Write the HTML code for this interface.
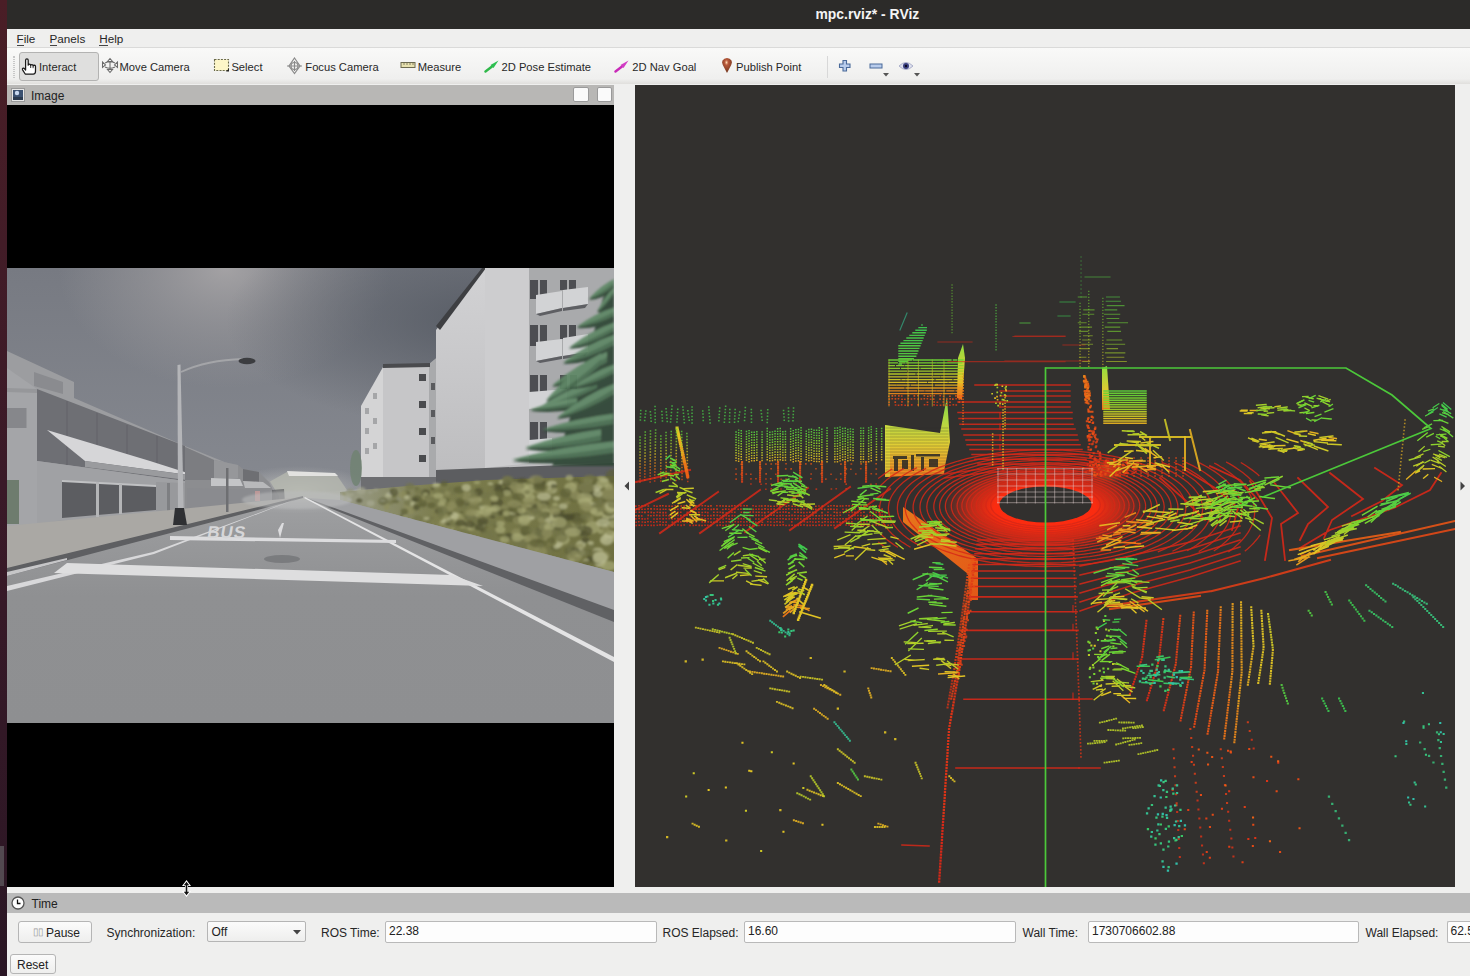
<!DOCTYPE html>
<html><head><meta charset="utf-8">
<style>
*{box-sizing:border-box;margin:0;padding:0}
html,body{width:1470px;height:976px;overflow:hidden;background:linear-gradient(#4a1e26,#3a1a28 50%,#2a1624);font-family:"Liberation Sans",sans-serif;color:#2e3436}
.abs{position:absolute}
#title{left:7px;top:0;width:1463px;height:30px;background:#2c2b29}
#title span{position:absolute;left:808.5px;top:5.5px;color:#f4f4f4;font-weight:bold;font-size:13.9px;white-space:nowrap}
#win{left:7px;top:29px;width:1463px;height:947px;background:#efefee}
#menu{left:7px;top:30px;width:1463px;height:18px;background:#efefee;border-bottom:1px solid #dadad9;font-size:11.7px;color:#262626}
#menu span{position:absolute;top:1.6px;white-space:nowrap}
#menu u{text-decoration:none;border-bottom:1px solid #444;}
#tool{left:7px;top:48px;width:1463px;height:36px;background:linear-gradient(#f9f9f8 0%,#f3f3f2 55%,#efefee 86%,#e0dfdc 100%);font-size:11.2px;color:#282828}
#tool .t{position:absolute;top:13px;white-space:nowrap}
#tool svg{position:absolute}
#imgbar{left:7px;top:85px;width:607px;height:20px;background:#b8b7b5}
#imgblk{left:7px;top:105px;width:607px;height:782px;background:#000}
#view{left:635px;top:85px;width:820px;height:802px;background:#32302e;overflow:hidden}
#timebar{left:7px;top:893px;width:1463px;height:20px;background:#bababa}
.tb{position:absolute;top:921px;height:21.6px;background:#fdfdfd;border:1px solid #b9b9b9;border-radius:2px;font-size:12px;padding-left:3px;line-height:19px;color:#222;white-space:nowrap;overflow:hidden}
.lbl{position:absolute;top:925.8px;font-size:12px;white-space:nowrap;color:#262626}
.btn{position:absolute;background:linear-gradient(#fbfbfb,#eeeeed);border:1px solid #b5b5b5;border-radius:3px;font-size:12px;color:#222;white-space:nowrap}
</style></head><body>
<div id="title" class="abs"><span>mpc.rviz* - RViz</span></div>
<div id="win" class="abs"></div>
<div id="menu" class="abs">
 <span style="left:9.5px"><u>F</u>ile</span>
 <span style="left:42.5px"><u>P</u>anels</span>
 <span style="left:92.3px"><u>H</u>elp</span>
</div>
<div id="tool" class="abs">
 <div class="abs" style="left:6px;top:8px;width:2px;height:22px;border-left:1px dotted #c8c8c8;border-right:1px dotted #c8c8c8"></div>
 <div class="abs" style="left:11.8px;top:3.8px;width:79.8px;height:29px;background:#dfdfde;border:1px solid #b3b3b2;border-radius:3px"></div>
 <svg style="left:14px;top:9.5px" width="17" height="17" viewBox="0 0 17 17"><path d="M4.2 16 L1.6 11.8 Q1 10.6 2.2 10.2 Q3 10 3.8 11 L4.6 12 L4.6 2.2 Q4.6 0.9 5.9 0.9 Q7.2 0.9 7.2 2.2 L7.2 7.2 Q7.4 6.2 8.5 6.2 Q9.6 6.2 9.7 7.4 Q10 6.6 11 6.6 Q12 6.6 12.1 7.8 Q12.5 7.2 13.4 7.2 Q14.5 7.3 14.5 8.6 L14.5 13.2 Q14.5 16 12.2 16 Z" fill="#fff" stroke="#1a1a1a" stroke-width="1.25" stroke-linejoin="round"/><path d="M9.7 7.4V10M12.1 7.8V10.2" stroke="#1a1a1a" stroke-width="0.9"/></svg>
 <span class="t" style="left:32px">Interact</span>
 <svg style="left:94px;top:9px" width="18" height="17" viewBox="0 0 18 17"><g fill="none" stroke="#6a6a6a" stroke-width="1.05"><path d="M9 1.5 L6.5 4.5 H11.5 Z M9 15.5 L6.5 12.5 H11.5 Z M1.5 5 V10.5 L4.5 8 Z M16.5 5 V10.5 L13.5 8 Z"/><path d="M4 6 Q9 3.5 14 6 M4 10 Q9 12.5 14 10 M9 4.5 V12.5"/></g></svg>
 <span class="t" style="left:112.5px">Move Camera</span>
 <svg style="left:206px;top:10px" width="17" height="15" viewBox="0 0 17 15"><rect x="1.5" y="1.5" width="14" height="11" fill="#fdf6c8" stroke="#6a6a4a" stroke-width="1.1" stroke-dasharray="2 1.2"/><path d="M13 13.5 L16 10.5 V13.5 Z" fill="#222"/></svg>
 <span class="t" style="left:224.4px">Select</span>
 <svg style="left:279px;top:9px" width="17" height="18" viewBox="0 0 17 18"><g fill="none" stroke="#8a8a8a" stroke-width="1.2"><path d="M8.5 1 L14 9 L8.5 16.5 L3 9 Z"/><circle cx="8.5" cy="9" r="3.5"/><path d="M1 9 H16 M8.5 4 V14"/></g></svg>
 <span class="t" style="left:298.3px">Focus Camera</span>
 <svg style="left:393px;top:13px" width="16" height="8" viewBox="0 0 16 8"><rect x="1" y="1.5" width="14" height="5" fill="#e8e2b0" stroke="#6c6a50" stroke-width="1"/><path d="M4 1.5V4M7 1.5V4M10 1.5V4M13 1.5V4" stroke="#6c6a50" stroke-width="0.8"/></svg>
 <span class="t" style="left:410.7px">Measure</span>
 <svg style="left:477px;top:11px" width="16" height="14" viewBox="0 0 16 14"><path d="M1.5 12.5 L8 7.5" stroke="#2fb84a" stroke-width="2.4" stroke-linecap="round"/><path d="M14.5 1.5 L6.5 6 L9.5 9 Z" fill="#2cc050"/></svg>
 <span class="t" style="left:494.5px">2D Pose Estimate</span>
 <svg style="left:607px;top:11px" width="16" height="14" viewBox="0 0 16 14"><path d="M1.5 12.5 L8 7.5" stroke="#c82ab8" stroke-width="2.4" stroke-linecap="round"/><path d="M14.5 1.5 L6.5 6 L9.5 9 Z" fill="#d23cc4"/></svg>
 <span class="t" style="left:625.3px">2D Nav Goal</span>
 <svg style="left:714px;top:9px" width="12" height="17" viewBox="0 0 12 17"><defs><radialGradient id="pin" cx="0.45" cy="0.3" r="0.6"><stop offset="0" stop-color="#ffd8b0"/><stop offset="0.3" stop-color="#b8583a"/><stop offset="1" stop-color="#7a3a20"/></radialGradient></defs><path d="M6 16 L1.8 8 Q0.5 5 1.5 3.5 Q3 1 6 1 Q9 1 10.5 3.5 Q11.5 5 10.2 8 Z" fill="url(#pin)"/></svg>
 <span class="t" style="left:729px">Publish Point</span>
 <div class="abs" style="left:820px;top:8px;width:1px;height:22px;background:#d8d8d8"></div>
 <svg style="left:831px;top:11px" width="14" height="14" viewBox="0 0 14 14"><path d="M5 1.5H8.5V5H12V8.5H8.5V12H5V8.5H1.5V5H5Z" fill="#b8ccec" stroke="#4a6a9a" stroke-width="1.1"/></svg>
 <svg style="left:862px;top:15px" width="14" height="6" viewBox="0 0 14 6"><rect x="1" y="1" width="12" height="4" fill="#b8ccec" stroke="#4a6a9a" stroke-width="1"/></svg>
 <svg style="left:876px;top:25px" width="6" height="4" viewBox="0 0 6 4"><path d="M0 0H6L3 3.5Z" fill="#555"/></svg>
 <svg style="left:891px;top:13px" width="16" height="10" viewBox="0 0 16 10"><path d="M1 5 Q8 -2 15 5 Q8 12 1 5Z" fill="#dde0ee" stroke="#9aa0c0" stroke-width="0.8"/><circle cx="8" cy="5" r="3" fill="#3a3f80"/><circle cx="8" cy="5" r="1.2" fill="#0a0a20"/></svg>
 <svg style="left:907px;top:25px" width="6" height="4" viewBox="0 0 6 4"><path d="M0 0H6L3 3.5Z" fill="#555"/></svg>
</div>
<div id="imgbar" class="abs">
 <svg style="position:absolute;left:4px;top:3px" width="14" height="14" viewBox="0 0 14 14"><rect x="0.5" y="0.5" width="13" height="13" fill="#e8e8e8" stroke="#9a9a9a"/><rect x="2" y="2" width="10" height="10" fill="#3a5070"/><circle cx="6" cy="5" r="2.2" fill="#c8d8f0"/><rect x="2" y="9" width="10" height="3" fill="#2a3a50"/></svg>
 <span style="position:absolute;left:24px;top:3.5px;font-size:12px;color:#222">Image</span>
 <div style="position:absolute;left:566px;top:2px;width:16px;height:14.5px;background:#fafafa;border:1px solid #9a9a9a;border-radius:2px"></div>
 <div style="position:absolute;left:589.5px;top:2px;width:15px;height:14.5px;background:#fafafa;border:1px solid #9a9a9a;border-radius:2px"></div>
</div>
<div id="imgblk" class="abs"></div>
<svg width="607" height="455" viewBox="0 0 607 455" style="position:absolute;left:7px;top:268px;display:block">
<defs>
 <filter id="blur1" x="-5%" y="-5%" width="110%" height="110%"><feGaussianBlur stdDeviation="1.1"/></filter>
 <linearGradient id="sky" x1="0" y1="0" x2="0" y2="1">
  <stop offset="0" stop-color="#777a82"/><stop offset="0.5" stop-color="#868990"/><stop offset="0.75" stop-color="#8e9096"/><stop offset="1" stop-color="#a8aaad"/>
 </linearGradient>
 <radialGradient id="skyhi" cx="0.36" cy="0.0" r="0.5" gradientTransform="translate(0.36,0) scale(0.55,1) translate(-0.36,0)">
  <stop offset="0" stop-color="#a6a4a6" stop-opacity="0.95"/><stop offset="0.6" stop-color="#9a999c" stop-opacity="0.45"/><stop offset="1" stop-color="#9a999c" stop-opacity="0"/>
 </radialGradient>
 <radialGradient id="skydk" cx="0.78" cy="0.2" r="0.42">
  <stop offset="0" stop-color="#555a63" stop-opacity="0.9"/><stop offset="1" stop-color="#555a63" stop-opacity="0"/>
 </radialGradient>
 <linearGradient id="road" x1="0" y1="0" x2="0" y2="1">
  <stop offset="0" stop-color="#a6a7a9"/><stop offset="0.22" stop-color="#9a9b9d"/><stop offset="0.5" stop-color="#8f9092"/><stop offset="1" stop-color="#8e8f91"/>
 </linearGradient>
 <linearGradient id="hedge" x1="0" y1="0" x2="1" y2="0">
  <stop offset="0" stop-color="#9a9c88"/><stop offset="0.35" stop-color="#7c7d4e"/><stop offset="1" stop-color="#6e6f40"/>
 </linearGradient>
 <radialGradient id="haze" cx="0.5" cy="0.5" r="0.5">
  <stop offset="0" stop-color="#c4c5c2" stop-opacity="1"/><stop offset="1" stop-color="#b0b1b2" stop-opacity="0"/>
 </radialGradient>
 <linearGradient id="nface" x1="0" y1="0" x2="0" y2="1"><stop offset="0" stop-color="#d2d2d4"/><stop offset="1" stop-color="#bdbdbf"/></linearGradient>
</defs>
<rect width="607" height="455" fill="url(#sky)"/>
<rect width="607" height="240" fill="url(#skyhi)"/>
<rect width="607" height="260" fill="url(#skydk)"/>
<!-- road / ground base -->
<polygon points="0,255 296,226 607,200 607,455 0,455" fill="url(#road)"/>
<!-- far haze -->
<ellipse cx="292" cy="222" rx="75" ry="24" fill="url(#haze)"/>
<polygon points="262,214 280,204 329,206 340,222 333,232 262,232" fill="#b4b6ae" opacity="0.85"/>
<polygon points="280,203 328,205 331,208 282,208" fill="#e2e2e0"/>
<!-- left shop building -->
<polygon points="0,83 67,114 67,130 178,178 262,212 272,228 272,236 0,260" fill="#9c9da0"/>
<polygon points="0,100 30,121 30,260 0,260" fill="#a4a5a8"/>
<polygon points="30,121 178,178 178,213 30,193" fill="#6e6f74"/>
<g stroke="#626368" stroke-width="1"><path d="M60,133V197M90,145V200M120,157V204M150,168V209"/></g>
<polygon points="0,140 19.5,140 19.5,160 0,160" fill="#86878b"/><polygon points="0,120 30,121 30,125 0,124" fill="#96979a"/>
<polygon points="27,104 56,114 56,126 27,118" fill="#8a8b8f"/>
<polygon points="30,193 178,213 178,248 55,252 30,256" fill="#a0a1a4"/>
<polygon points="40,162 143,193 190,208 78,193" fill="#d6d6d8"/>
<polygon points="78,193 190.6,208.3 190.6,213.4 78,199" fill="#9a9b9e"/>
<polygon points="55,213 149,218 149,242 55,250" fill="#5c5d61"/>
<polygon points="55,212 149,217 149,219 55,214" fill="#c0c1c3"/>
<polygon points="89,214 92,214 92,249 89,249" fill="#b4b5b7"/>
<polygon points="112,216 115,216 115,246 112,246" fill="#b4b5b7"/>
<polygon points="149,214 178,215 178,244 149,243" fill="#98999c"/><rect x="160" y="215" width="3" height="28" fill="#7e7f82"/>
<polygon points="178,179 207,192 231,197 236,201 252,204 262,214 268,226 270,236 178,246" fill="#8c8d90"/>
<polygon points="178,179 207,192 207,212 178,212" fill="#7c7d81"/>
<polygon points="207,192 231,197 231,210 207,210" fill="#96979a"/>
<polygon points="236,201 252,204 252,214 236,213" fill="#6e6f73"/>
<polygon points="204,210 233,211 236,218 204,218" fill="#c4c5c7"/>
<polygon points="236,213 256,214 264,220 238,220" fill="#b8b9bb"/>
<polygon points="180,220 262,222 266,236 180,240" fill="#8a8b8e" opacity="0.8"/>
<rect x="248" y="223" width="5" height="10" fill="#c89a98" opacity="0.8"/>
<polygon points="265,222 277,221 278,235 265,236" fill="#5e5f62" opacity="0.75"/>
<!-- left sidewalk -->
<polygon points="0,258 296,229 0,303" fill="#aaa8a4"/>
<polygon points="0,300 296,228 296,230 0,308" fill="#5e5f62"/>
<!-- street lamp -->
<polygon points="170.5,97 173.5,96.5 177,256 171,256" fill="#b4b5b8"/>
<path d="M174,104 Q200,92 236,91" stroke="#a4a5a8" stroke-width="1.8" fill="none"/>
<ellipse cx="240" cy="93" rx="8.5" ry="3.2" fill="#3c3d40"/>
<polygon points="168,240 177,240 180,257 166,257" fill="#2f3033"/>
<polygon points="219,200 221.5,200 221.5,244 219,244" fill="#6e6f72"/>
<!-- green bin left -->
<rect x="0" y="212" width="12" height="44" fill="#6e7c6e"/>
<!-- right far building -->
<polygon points="354,138 376,99 376,213 354,214" fill="#d4d4d5"/>
<polygon points="376,97 423,96 433,87 433,218 376,218" fill="#c6c6c8"/>
<polygon points="422,96 433,87 433,210 422,212" fill="#a9aaac"/>
<polygon points="376,96 423,95 423,99 376,100" fill="#4a4b4e"/>
<g fill="#4a4b4e"><rect x="412" y="106" width="7" height="7"/><rect x="412" y="133" width="7" height="7"/><rect x="412" y="160" width="7" height="7"/><rect x="412" y="187" width="7" height="7"/></g>
<g fill="#5a5b5e"><rect x="424" y="115" width="4" height="7"/><rect x="424" y="142" width="4" height="7"/><rect x="424" y="169" width="4" height="7"/></g>
<g fill="#9a9b9e" opacity="0.8"><rect x="358" y="140" width="4" height="6"/><rect x="358" y="160" width="4" height="6"/><rect x="358" y="180" width="4" height="6"/><rect x="366" y="125" width="4" height="6"/><rect x="366" y="150" width="4" height="6"/><rect x="366" y="175" width="4" height="6"/></g>
<polygon points="354,209 433,209 433,219 354,222" fill="#6d6e71"/>
<!-- near building -->
<polygon points="429,62 476,2 480,0 607,0 607,200 429,206" fill="url(#nface)"/>
<polygon points="429,58 475,0 479,0 433,62" fill="#3e3f42"/>
<polygon points="478,0 522,0 522,195 478,200" fill="#cdcdcf"/>
<polygon points="522,0 607,0 607,195 522,195" fill="#a9aaac"/>
<g fill="#4d4e52">
 <rect x="523" y="12" width="8" height="19"/><rect x="533" y="12" width="7" height="19"/><rect x="553" y="12" width="7" height="10"/><rect x="562" y="12" width="7" height="10"/>
 <rect x="523" y="57" width="8" height="21"/><rect x="533" y="57" width="7" height="21"/><rect x="553" y="57" width="7" height="14"/><rect x="562" y="57" width="7" height="14"/>
 <rect x="523" y="107" width="8" height="19"/><rect x="533" y="107" width="7" height="19"/><rect x="553" y="107" width="7" height="14"/><rect x="563" y="107" width="7" height="14"/>
 <rect x="523" y="154" width="8" height="19"/><rect x="533" y="154" width="7" height="19"/>
</g>
<g fill="#d2d3d5">
 <polygon points="529,27 555,23 555,40 529,46"/><polygon points="556,22 581,19 581,36 556,40"/>
 <polygon points="529,74 555,71 555,88 529,93"/><polygon points="556,70 581,66 581,84 556,88"/>
 <polygon points="522,124 560,121 560,137 522,141"/><polygon points="522,172 545,170 545,185 522,188"/>
</g>
<g fill="#5e5f63"><polygon points="529,46 555,40 555,43 533,48"/><polygon points="556,40 581,36 578,40 556,43"/><polygon points="529,93 555,88 555,91 533,95"/><polygon points="556,88 581,84 578,88 556,91"/></g>
<polygon points="429,202 607,195 607,213 429,218" fill="#5c5d60"/>
<!-- tree right --><g filter="url(#blur1)" opacity="0.92"><path d="M607,12 L596,30 L588,60 L576,100 L566,140 L552,185 L545,198 L607,198 Z" fill="#2f4434"/><path d="M607.0,14.5 Q594.5,20.4 582.0,31.9 Q594.5,31.7 607.0,22.0 Z" fill="#2f4636"/><path d="M607.0,11.9 Q594.5,17.8 582.0,31.0 Q594.5,28.0 607.0,18.2 Z" fill="#4a6e51"/><path d="M607.0,11.0 Q594.5,16.9 582.0,30.5 Q594.5,24.7 607.0,14.8 Z" fill="#5f8866"/><path d="M607.0,22.4 Q598.5,30.1 590.0,44.7 Q598.5,41.2 607.0,28.4 Z" fill="#2f4636"/><path d="M607.0,20.3 Q598.5,28.0 590.0,44.0 Q598.5,38.3 607.0,25.4 Z" fill="#4a6e51"/><path d="M607.0,19.6 Q598.5,27.3 590.0,43.6 Q598.5,35.6 607.0,22.6 Z" fill="#5f8866"/><path d="M607.0,43.6 Q588.5,49.2 570.0,60.1 Q588.5,61.6 607.0,52.6 Z" fill="#2f4636"/><path d="M607.0,40.5 Q588.5,46.1 570.0,59.0 Q588.5,57.2 607.0,48.1 Z" fill="#4a6e51"/><path d="M607.0,39.4 Q588.5,45.0 570.0,58.4 Q588.5,53.2 607.0,43.9 Z" fill="#5f8866"/><path d="M607.0,58.6 Q584.5,66.3 562.0,81.1 Q584.5,80.2 607.0,67.6 Z" fill="#2f4636"/><path d="M607.0,55.5 Q584.5,63.2 562.0,80.0 Q584.5,75.8 607.0,63.1 Z" fill="#4a6e51"/><path d="M607.0,54.4 Q584.5,62.1 562.0,79.4 Q584.5,71.8 607.0,58.9 Z" fill="#5f8866"/><path d="M607.0,71.7 Q581.5,80.1 556.0,96.3 Q581.5,95.9 607.0,82.2 Z" fill="#2f4636"/><path d="M607.0,68.0 Q581.5,76.4 556.0,95.0 Q581.5,90.8 607.0,77.0 Z" fill="#4a6e51"/><path d="M607.0,66.8 Q581.5,75.2 556.0,94.3 Q581.5,86.1 607.0,72.0 Z" fill="#5f8866"/><path d="M600.0,88.7 Q572.5,99.2 545.0,119.3 Q572.5,116.5 600.0,99.2 Z" fill="#2f4636"/><path d="M600.0,85.0 Q572.5,95.5 545.0,118.0 Q572.5,111.4 600.0,94.0 Z" fill="#4a6e51"/><path d="M600.0,83.8 Q572.5,94.3 545.0,117.3 Q572.5,106.7 600.0,89.0 Z" fill="#5f8866"/><path d="M594.0,90.8 Q566.5,105.8 539.0,134.4 Q566.5,127.8 594.0,102.8 Z" fill="#2f4636"/><path d="M594.0,86.6 Q566.5,101.6 539.0,133.0 Q566.5,121.9 594.0,96.8 Z" fill="#4a6e51"/><path d="M594.0,85.2 Q566.5,100.2 539.0,132.2 Q566.5,116.6 594.0,91.2 Z" fill="#5f8866"/><path d="M590.0,115.6 Q561.0,124.3 532.0,141.1 Q561.0,139.0 590.0,124.6 Z" fill="#2f4636"/><path d="M590.0,112.5 Q561.0,121.2 532.0,140.0 Q561.0,134.6 590.0,120.1 Z" fill="#4a6e51"/><path d="M590.0,111.4 Q561.0,120.2 532.0,139.4 Q561.0,130.6 590.0,115.9 Z" fill="#5f8866"/><path d="M570.0,133.5 Q546.5,136.7 523.0,142.9 Q546.5,145.9 570.0,141.0 Z" fill="#2f4636"/><path d="M570.0,130.9 Q546.5,134.0 523.0,142.0 Q546.5,142.2 570.0,137.2 Z" fill="#4a6e51"/><path d="M570.0,130.0 Q546.5,133.2 523.0,141.5 Q546.5,138.9 570.0,133.8 Z" fill="#5f8866"/><path d="M606.0,150.7 Q570.5,154.9 535.0,163.3 Q570.5,167.7 606.0,161.2 Z" fill="#2f4636"/><path d="M606.0,147.0 Q570.5,151.2 535.0,162.0 Q570.5,162.6 606.0,155.9 Z" fill="#4a6e51"/><path d="M606.0,145.8 Q570.5,150.0 535.0,161.3 Q570.5,157.9 606.0,151.1 Z" fill="#5f8866"/><path d="M594.0,166.8 Q556.0,171.7 518.0,181.4 Q556.0,186.4 594.0,178.8 Z" fill="#2f4636"/><path d="M594.0,162.6 Q556.0,167.5 518.0,180.0 Q556.0,180.5 594.0,172.8 Z" fill="#4a6e51"/><path d="M594.0,161.2 Q556.0,166.1 518.0,179.2 Q556.0,175.2 594.0,167.2 Z" fill="#5f8866"/><path d="M607.0,178.8 Q556.0,183.7 505.0,193.4 Q556.0,198.4 607.0,190.8 Z" fill="#2f4636"/><path d="M607.0,174.6 Q556.0,179.5 505.0,192.0 Q556.0,192.5 607.0,184.8 Z" fill="#4a6e51"/><path d="M607.0,173.2 Q556.0,178.1 505.0,191.2 Q556.0,187.2 607.0,179.2 Z" fill="#5f8866"/><path d="M607.0,120.7 Q578.5,131.2 550.0,151.3 Q578.5,148.5 607.0,131.2 Z" fill="#2f4636"/><path d="M607.0,117.0 Q578.5,127.5 550.0,150.0 Q578.5,143.4 607.0,126.0 Z" fill="#4a6e51"/><path d="M607.0,115.8 Q578.5,126.3 550.0,149.3 Q578.5,138.7 607.0,121.0 Z" fill="#5f8866"/><path d="M607.0,100.6 Q586.0,107.6 565.0,121.1 Q586.0,121.0 607.0,109.6 Z" fill="#2f4636"/><path d="M607.0,97.5 Q586.0,104.5 565.0,120.0 Q586.0,116.6 607.0,105.1 Z" fill="#4a6e51"/><path d="M607.0,96.4 Q586.0,103.4 565.0,119.4 Q586.0,112.6 607.0,100.9 Z" fill="#5f8866"/></g>
<!-- small tree -->
<ellipse cx="349" cy="200" rx="6" ry="18" fill="#6f8270" opacity="0.8"/>
<!-- hedge -->
<polygon points="333,224 400,218 480,212 607,208 607,304 333,232" fill="url(#hedge)"/>
<g filter="url(#blur1)"><ellipse cx="504.4" cy="214.3" rx="6.4" ry="3.8" fill="#4c4d2e" opacity="0.7"/><ellipse cx="570.8" cy="258.2" rx="6.5" ry="3.4" fill="#a8a976" opacity="0.7"/><ellipse cx="540.8" cy="264.7" rx="2.8" ry="2.3" fill="#74754a" opacity="0.7"/><ellipse cx="573.8" cy="276.6" rx="5.0" ry="4.1" fill="#bcbd94" opacity="0.7"/><ellipse cx="573.8" cy="217.4" rx="4.0" ry="3.6" fill="#5e5f36" opacity="0.7"/><ellipse cx="438.7" cy="241.7" rx="4.3" ry="3.7" fill="#8e8f5e" opacity="0.7"/><ellipse cx="516.9" cy="223.7" rx="7.2" ry="6.2" fill="#a8a976" opacity="0.7"/><ellipse cx="490.1" cy="235.4" rx="6.2" ry="5.6" fill="#4c4d2e" opacity="0.7"/><ellipse cx="445.5" cy="222.5" rx="5.1" ry="4.4" fill="#74754a" opacity="0.7"/><ellipse cx="601.7" cy="256.5" rx="4.8" ry="2.6" fill="#bcbd94" opacity="0.7"/><ellipse cx="500.3" cy="223.0" rx="6.4" ry="4.0" fill="#4c4d2e" opacity="0.7"/><ellipse cx="595.7" cy="294.1" rx="5.6" ry="4.0" fill="#74754a" opacity="0.7"/><ellipse cx="509.4" cy="265.2" rx="5.4" ry="4.7" fill="#8e8f5e" opacity="0.7"/><ellipse cx="471.9" cy="249.4" rx="3.2" ry="2.0" fill="#8e8f5e" opacity="0.7"/><ellipse cx="600.9" cy="258.0" rx="3.0" ry="2.0" fill="#8e8f5e" opacity="0.7"/><ellipse cx="501.7" cy="268.7" rx="5.3" ry="3.7" fill="#4c4d2e" opacity="0.7"/><ellipse cx="519.1" cy="241.8" rx="6.1" ry="3.1" fill="#8e8f5e" opacity="0.7"/><ellipse cx="596.9" cy="232.1" rx="6.4" ry="4.0" fill="#74754a" opacity="0.7"/><ellipse cx="432.7" cy="238.0" rx="4.3" ry="2.7" fill="#74754a" opacity="0.7"/><ellipse cx="534.4" cy="237.8" rx="6.7" ry="4.0" fill="#5e5f36" opacity="0.7"/><ellipse cx="524.3" cy="217.8" rx="4.2" ry="3.5" fill="#74754a" opacity="0.7"/><ellipse cx="379.4" cy="240.3" rx="3.1" ry="1.8" fill="#8e8f5e" opacity="0.7"/><ellipse cx="562.7" cy="225.6" rx="7.1" ry="5.4" fill="#74754a" opacity="0.7"/><ellipse cx="553.9" cy="241.1" rx="4.2" ry="3.5" fill="#5e5f36" opacity="0.7"/><ellipse cx="407.3" cy="241.3" rx="3.3" ry="2.2" fill="#74754a" opacity="0.7"/><ellipse cx="585.2" cy="223.0" rx="8.3" ry="7.1" fill="#4c4d2e" opacity="0.7"/><ellipse cx="603.4" cy="249.7" rx="8.5" ry="5.0" fill="#bcbd94" opacity="0.7"/><ellipse cx="514.7" cy="257.8" rx="4.1" ry="2.4" fill="#74754a" opacity="0.7"/><ellipse cx="578.7" cy="294.4" rx="2.9" ry="2.3" fill="#8e8f5e" opacity="0.7"/><ellipse cx="380.1" cy="236.8" rx="3.0" ry="2.6" fill="#8e8f5e" opacity="0.7"/><ellipse cx="500.7" cy="240.8" rx="6.4" ry="4.4" fill="#5e5f36" opacity="0.7"/><ellipse cx="547.4" cy="241.8" rx="5.5" ry="4.5" fill="#5e5f36" opacity="0.7"/><ellipse cx="585.6" cy="285.4" rx="2.9" ry="2.2" fill="#a8a976" opacity="0.7"/><ellipse cx="569.3" cy="212.8" rx="4.3" ry="3.0" fill="#5e5f36" opacity="0.7"/><ellipse cx="448.9" cy="253.4" rx="2.1" ry="1.1" fill="#a8a976" opacity="0.7"/><ellipse cx="567.1" cy="216.3" rx="4.5" ry="2.8" fill="#8e8f5e" opacity="0.7"/><ellipse cx="493.7" cy="242.6" rx="3.8" ry="2.1" fill="#5e5f36" opacity="0.7"/><ellipse cx="437.2" cy="215.7" rx="3.5" ry="2.6" fill="#5e5f36" opacity="0.7"/><ellipse cx="547.4" cy="244.5" rx="5.9" ry="4.0" fill="#a8a976" opacity="0.7"/><ellipse cx="435.0" cy="255.6" rx="3.6" ry="2.8" fill="#8e8f5e" opacity="0.7"/><ellipse cx="459.3" cy="231.5" rx="5.0" ry="2.7" fill="#8e8f5e" opacity="0.7"/><ellipse cx="449.4" cy="248.9" rx="5.9" ry="3.8" fill="#a8a976" opacity="0.7"/><ellipse cx="579.0" cy="283.9" rx="5.5" ry="3.0" fill="#5e5f36" opacity="0.7"/><ellipse cx="555.8" cy="271.6" rx="7.0" ry="5.3" fill="#a8a976" opacity="0.7"/><ellipse cx="534.0" cy="262.1" rx="5.6" ry="2.8" fill="#4c4d2e" opacity="0.7"/><ellipse cx="563.6" cy="219.6" rx="6.4" ry="5.4" fill="#a8a976" opacity="0.7"/><ellipse cx="594.0" cy="263.6" rx="3.1" ry="2.5" fill="#a8a976" opacity="0.7"/><ellipse cx="589.1" cy="213.9" rx="6.2" ry="5.1" fill="#74754a" opacity="0.7"/><ellipse cx="399.3" cy="225.3" rx="3.9" ry="3.1" fill="#5e5f36" opacity="0.7"/><ellipse cx="440.9" cy="243.3" rx="3.4" ry="2.3" fill="#74754a" opacity="0.7"/><ellipse cx="599.6" cy="247.6" rx="3.9" ry="3.0" fill="#a8a976" opacity="0.7"/><ellipse cx="540.2" cy="272.7" rx="5.1" ry="3.9" fill="#8e8f5e" opacity="0.7"/><ellipse cx="578.9" cy="222.3" rx="7.1" ry="6.1" fill="#4c4d2e" opacity="0.7"/><ellipse cx="474.7" cy="250.5" rx="3.0" ry="1.8" fill="#8e8f5e" opacity="0.7"/><ellipse cx="419.3" cy="230.3" rx="5.4" ry="3.4" fill="#8e8f5e" opacity="0.7"/><ellipse cx="526.3" cy="247.7" rx="5.5" ry="3.3" fill="#a8a976" opacity="0.7"/><ellipse cx="464.4" cy="244.7" rx="3.7" ry="2.3" fill="#5e5f36" opacity="0.7"/><ellipse cx="545.1" cy="221.8" rx="5.1" ry="3.8" fill="#bcbd94" opacity="0.7"/><ellipse cx="558.1" cy="261.5" rx="6.6" ry="5.6" fill="#74754a" opacity="0.7"/><ellipse cx="596.1" cy="252.9" rx="4.3" ry="3.4" fill="#5e5f36" opacity="0.7"/><ellipse cx="567.0" cy="231.2" rx="4.2" ry="2.4" fill="#5e5f36" opacity="0.7"/><ellipse cx="579.5" cy="232.5" rx="4.6" ry="3.1" fill="#a8a976" opacity="0.7"/><ellipse cx="532.7" cy="216.2" rx="6.8" ry="4.2" fill="#4c4d2e" opacity="0.7"/><ellipse cx="424.7" cy="249.9" rx="2.7" ry="2.0" fill="#74754a" opacity="0.7"/><ellipse cx="594.8" cy="245.5" rx="3.6" ry="2.2" fill="#8e8f5e" opacity="0.7"/><ellipse cx="515.3" cy="218.8" rx="6.9" ry="3.7" fill="#a8a976" opacity="0.7"/><ellipse cx="590.9" cy="243.9" rx="7.3" ry="4.5" fill="#a8a976" opacity="0.7"/><ellipse cx="518.2" cy="270.8" rx="3.8" ry="3.0" fill="#a8a976" opacity="0.7"/><ellipse cx="596.4" cy="272.6" rx="3.6" ry="2.5" fill="#8e8f5e" opacity="0.7"/><ellipse cx="518.9" cy="262.4" rx="5.7" ry="4.3" fill="#5e5f36" opacity="0.7"/><ellipse cx="512.6" cy="219.8" rx="3.1" ry="2.0" fill="#bcbd94" opacity="0.7"/><ellipse cx="530.4" cy="265.4" rx="5.8" ry="4.0" fill="#8e8f5e" opacity="0.7"/><ellipse cx="418.6" cy="224.9" rx="4.5" ry="3.6" fill="#4c4d2e" opacity="0.7"/><ellipse cx="431.4" cy="233.5" rx="5.3" ry="2.8" fill="#74754a" opacity="0.7"/><ellipse cx="471.3" cy="231.7" rx="3.7" ry="2.4" fill="#a8a976" opacity="0.7"/><ellipse cx="443.5" cy="260.0" rx="3.4" ry="2.9" fill="#a8a976" opacity="0.7"/><ellipse cx="363.7" cy="234.0" rx="1.9" ry="1.5" fill="#8f9178" opacity="0.7"/><ellipse cx="488.4" cy="272.3" rx="6.8" ry="3.7" fill="#74754a" opacity="0.7"/><ellipse cx="551.7" cy="260.3" rx="3.6" ry="3.1" fill="#5e5f36" opacity="0.7"/><ellipse cx="434.3" cy="236.1" rx="3.7" ry="2.5" fill="#a8a976" opacity="0.7"/><ellipse cx="556.2" cy="238.3" rx="4.4" ry="3.0" fill="#bcbd94" opacity="0.7"/><ellipse cx="578.4" cy="272.1" rx="3.9" ry="2.9" fill="#4c4d2e" opacity="0.7"/><ellipse cx="397.1" cy="224.6" rx="2.4" ry="2.0" fill="#8e8f5e" opacity="0.7"/><ellipse cx="363.6" cy="235.2" rx="4.0" ry="3.0" fill="#a8aa92" opacity="0.7"/><ellipse cx="523.3" cy="220.9" rx="5.5" ry="4.8" fill="#a8a976" opacity="0.7"/><ellipse cx="529.2" cy="279.0" rx="6.6" ry="5.8" fill="#74754a" opacity="0.7"/><ellipse cx="569.0" cy="250.0" rx="5.5" ry="3.0" fill="#a8a976" opacity="0.7"/><ellipse cx="387.9" cy="223.4" rx="3.5" ry="2.3" fill="#74754a" opacity="0.7"/><ellipse cx="510.9" cy="237.2" rx="6.1" ry="4.0" fill="#74754a" opacity="0.7"/><ellipse cx="530.2" cy="243.2" rx="5.2" ry="3.9" fill="#74754a" opacity="0.7"/><ellipse cx="386.5" cy="228.1" rx="2.2" ry="1.1" fill="#5e5f36" opacity="0.7"/><ellipse cx="363.2" cy="224.2" rx="2.8" ry="1.7" fill="#9c9e88" opacity="0.7"/><ellipse cx="575.0" cy="231.2" rx="3.9" ry="2.5" fill="#74754a" opacity="0.7"/><ellipse cx="591.1" cy="283.8" rx="5.7" ry="4.2" fill="#bcbd94" opacity="0.7"/><ellipse cx="605.0" cy="238.4" rx="5.6" ry="3.0" fill="#4c4d2e" opacity="0.7"/><ellipse cx="502.2" cy="218.1" rx="2.5" ry="1.7" fill="#8e8f5e" opacity="0.7"/><ellipse cx="465.0" cy="226.2" rx="3.6" ry="3.1" fill="#8e8f5e" opacity="0.7"/><ellipse cx="540.5" cy="240.6" rx="4.4" ry="3.4" fill="#74754a" opacity="0.7"/><ellipse cx="506.0" cy="245.9" rx="3.3" ry="2.2" fill="#bcbd94" opacity="0.7"/><ellipse cx="472.0" cy="260.5" rx="5.6" ry="3.7" fill="#8e8f5e" opacity="0.7"/><ellipse cx="562.5" cy="291.0" rx="7.9" ry="5.1" fill="#74754a" opacity="0.7"/><ellipse cx="453.1" cy="250.7" rx="3.5" ry="2.9" fill="#8e8f5e" opacity="0.7"/><ellipse cx="583.7" cy="274.9" rx="3.1" ry="1.8" fill="#bcbd94" opacity="0.7"/><ellipse cx="514.0" cy="238.7" rx="6.4" ry="3.3" fill="#8e8f5e" opacity="0.7"/><ellipse cx="500.7" cy="212.6" rx="6.5" ry="4.9" fill="#74754a" opacity="0.7"/><ellipse cx="606.2" cy="208.2" rx="7.7" ry="6.7" fill="#5e5f36" opacity="0.7"/><ellipse cx="425.7" cy="237.9" rx="5.0" ry="2.9" fill="#74754a" opacity="0.7"/><ellipse cx="589.3" cy="221.7" rx="3.5" ry="2.2" fill="#bcbd94" opacity="0.7"/><ellipse cx="474.3" cy="256.5" rx="3.6" ry="3.1" fill="#bcbd94" opacity="0.7"/><ellipse cx="547.3" cy="252.9" rx="2.9" ry="2.4" fill="#8e8f5e" opacity="0.7"/><ellipse cx="402.9" cy="218.5" rx="4.7" ry="3.6" fill="#74754a" opacity="0.7"/><ellipse cx="516.2" cy="275.1" rx="5.7" ry="4.6" fill="#74754a" opacity="0.7"/><ellipse cx="454.6" cy="244.4" rx="2.1" ry="1.3" fill="#5e5f36" opacity="0.7"/><ellipse cx="509.1" cy="240.8" rx="6.0" ry="5.3" fill="#5e5f36" opacity="0.7"/><ellipse cx="521.1" cy="243.0" rx="2.8" ry="2.0" fill="#a8a976" opacity="0.7"/><ellipse cx="350.1" cy="230.7" rx="1.9" ry="1.7" fill="#a8aa92" opacity="0.7"/><ellipse cx="603.3" cy="266.8" rx="6.2" ry="4.1" fill="#bcbd94" opacity="0.7"/><ellipse cx="592.8" cy="294.7" rx="5.7" ry="4.6" fill="#bcbd94" opacity="0.7"/><ellipse cx="585.2" cy="236.0" rx="3.9" ry="2.1" fill="#bcbd94" opacity="0.7"/><ellipse cx="530.9" cy="236.3" rx="5.8" ry="3.0" fill="#8e8f5e" opacity="0.7"/><ellipse cx="537.2" cy="234.5" rx="4.4" ry="3.5" fill="#74754a" opacity="0.7"/><ellipse cx="537.6" cy="235.6" rx="4.1" ry="2.7" fill="#4c4d2e" opacity="0.7"/><ellipse cx="354.3" cy="222.7" rx="4.4" ry="3.7" fill="#a8aa92" opacity="0.7"/><ellipse cx="435.1" cy="223.5" rx="3.8" ry="2.7" fill="#74754a" opacity="0.7"/><ellipse cx="481.5" cy="242.5" rx="3.5" ry="2.4" fill="#a8a976" opacity="0.7"/><ellipse cx="576.0" cy="285.5" rx="4.2" ry="3.4" fill="#74754a" opacity="0.7"/><ellipse cx="478.5" cy="259.4" rx="2.4" ry="1.4" fill="#5e5f36" opacity="0.7"/><ellipse cx="544.0" cy="252.7" rx="6.7" ry="6.0" fill="#bcbd94" opacity="0.7"/><ellipse cx="342.6" cy="225.8" rx="3.8" ry="2.8" fill="#a8aa92" opacity="0.7"/><ellipse cx="555.3" cy="251.2" rx="6.3" ry="4.4" fill="#5e5f36" opacity="0.7"/><ellipse cx="531.1" cy="240.6" rx="2.7" ry="2.5" fill="#4c4d2e" opacity="0.7"/><ellipse cx="425.5" cy="220.8" rx="2.1" ry="1.4" fill="#4c4d2e" opacity="0.7"/><ellipse cx="459.1" cy="258.0" rx="5.7" ry="5.1" fill="#a8a976" opacity="0.7"/><ellipse cx="474.2" cy="243.6" rx="3.5" ry="1.8" fill="#8e8f5e" opacity="0.7"/><ellipse cx="454.7" cy="234.7" rx="3.3" ry="2.3" fill="#5e5f36" opacity="0.7"/><ellipse cx="491.2" cy="221.4" rx="4.5" ry="2.7" fill="#4c4d2e" opacity="0.7"/><ellipse cx="458.7" cy="264.2" rx="3.4" ry="2.5" fill="#5e5f36" opacity="0.7"/><ellipse cx="548.2" cy="280.4" rx="4.9" ry="2.6" fill="#5e5f36" opacity="0.7"/><ellipse cx="455.7" cy="237.9" rx="4.8" ry="4.2" fill="#74754a" opacity="0.7"/><ellipse cx="447.4" cy="247.7" rx="4.1" ry="3.6" fill="#bcbd94" opacity="0.7"/><ellipse cx="535.1" cy="275.0" rx="5.8" ry="3.2" fill="#5e5f36" opacity="0.7"/><ellipse cx="522.6" cy="249.4" rx="4.8" ry="3.0" fill="#bcbd94" opacity="0.7"/><ellipse cx="486.3" cy="224.8" rx="3.0" ry="1.7" fill="#74754a" opacity="0.7"/><ellipse cx="526.3" cy="274.2" rx="4.5" ry="2.3" fill="#74754a" opacity="0.7"/><ellipse cx="440.4" cy="225.3" rx="3.2" ry="2.5" fill="#8e8f5e" opacity="0.7"/><ellipse cx="368.8" cy="222.1" rx="2.8" ry="1.5" fill="#9c9e88" opacity="0.7"/><ellipse cx="409.9" cy="220.6" rx="2.3" ry="1.5" fill="#5e5f36" opacity="0.7"/><ellipse cx="583.7" cy="215.4" rx="8.2" ry="7.4" fill="#5e5f36" opacity="0.7"/><ellipse cx="601.5" cy="231.6" rx="8.6" ry="6.0" fill="#74754a" opacity="0.7"/><ellipse cx="525.7" cy="238.1" rx="4.2" ry="3.4" fill="#4c4d2e" opacity="0.7"/><ellipse cx="547.3" cy="262.6" rx="5.5" ry="3.7" fill="#74754a" opacity="0.7"/><ellipse cx="588.6" cy="289.4" rx="8.5" ry="7.1" fill="#5e5f36" opacity="0.7"/><ellipse cx="379.0" cy="233.5" rx="3.0" ry="2.5" fill="#9c9e88" opacity="0.7"/><ellipse cx="571.3" cy="284.2" rx="6.6" ry="4.7" fill="#bcbd94" opacity="0.7"/><ellipse cx="542.9" cy="216.9" rx="4.9" ry="2.7" fill="#8e8f5e" opacity="0.7"/><ellipse cx="497.5" cy="239.0" rx="4.1" ry="2.6" fill="#8e8f5e" opacity="0.7"/><ellipse cx="601.7" cy="297.9" rx="7.9" ry="4.9" fill="#a8a976" opacity="0.7"/><ellipse cx="600.6" cy="233.9" rx="5.9" ry="4.7" fill="#5e5f36" opacity="0.7"/><ellipse cx="457.1" cy="253.9" rx="5.8" ry="5.2" fill="#8e8f5e" opacity="0.7"/><ellipse cx="477.8" cy="250.4" rx="2.5" ry="1.7" fill="#8e8f5e" opacity="0.7"/><ellipse cx="565.2" cy="282.6" rx="7.4" ry="4.9" fill="#4c4d2e" opacity="0.7"/><ellipse cx="601.9" cy="243.2" rx="6.2" ry="5.3" fill="#5e5f36" opacity="0.7"/><ellipse cx="527.9" cy="242.7" rx="5.1" ry="3.3" fill="#74754a" opacity="0.7"/><ellipse cx="572.8" cy="264.1" rx="4.0" ry="2.6" fill="#5e5f36" opacity="0.7"/><ellipse cx="501.4" cy="221.4" rx="3.9" ry="2.4" fill="#4c4d2e" opacity="0.7"/><ellipse cx="585.4" cy="259.3" rx="7.6" ry="6.4" fill="#a8a976" opacity="0.7"/><ellipse cx="583.2" cy="250.4" rx="3.5" ry="3.0" fill="#8e8f5e" opacity="0.7"/><ellipse cx="436.6" cy="253.6" rx="3.1" ry="1.8" fill="#bcbd94" opacity="0.7"/><ellipse cx="558.7" cy="265.5" rx="2.9" ry="1.8" fill="#4c4d2e" opacity="0.7"/><ellipse cx="383.3" cy="234.3" rx="3.1" ry="2.3" fill="#74754a" opacity="0.7"/><ellipse cx="513.8" cy="249.9" rx="7.2" ry="5.6" fill="#4c4d2e" opacity="0.7"/><ellipse cx="464.5" cy="248.5" rx="5.7" ry="3.6" fill="#bcbd94" opacity="0.7"/><ellipse cx="575.3" cy="227.4" rx="3.3" ry="2.5" fill="#74754a" opacity="0.7"/><ellipse cx="476.5" cy="263.1" rx="3.2" ry="2.2" fill="#4c4d2e" opacity="0.7"/><ellipse cx="567.9" cy="259.7" rx="8.2" ry="6.3" fill="#74754a" opacity="0.7"/><ellipse cx="477.8" cy="227.4" rx="6.2" ry="3.4" fill="#74754a" opacity="0.7"/><ellipse cx="478.7" cy="267.5" rx="5.7" ry="4.9" fill="#74754a" opacity="0.7"/><ellipse cx="568.0" cy="278.8" rx="3.1" ry="2.1" fill="#5e5f36" opacity="0.7"/><ellipse cx="418.5" cy="226.6" rx="2.7" ry="2.2" fill="#a8a976" opacity="0.7"/><ellipse cx="589.9" cy="219.5" rx="5.2" ry="3.0" fill="#bcbd94" opacity="0.7"/><ellipse cx="469.7" cy="244.9" rx="5.8" ry="3.0" fill="#a8a976" opacity="0.7"/><ellipse cx="443.0" cy="245.4" rx="3.0" ry="1.8" fill="#5e5f36" opacity="0.7"/><ellipse cx="523.2" cy="240.7" rx="3.6" ry="2.4" fill="#5e5f36" opacity="0.7"/><ellipse cx="487.8" cy="231.6" rx="3.3" ry="2.5" fill="#8e8f5e" opacity="0.7"/><ellipse cx="500.0" cy="224.9" rx="4.2" ry="3.0" fill="#a8a976" opacity="0.7"/><ellipse cx="496.8" cy="268.3" rx="2.6" ry="2.1" fill="#74754a" opacity="0.7"/><ellipse cx="568.5" cy="255.1" rx="4.3" ry="3.7" fill="#8e8f5e" opacity="0.7"/><ellipse cx="520.9" cy="229.3" rx="7.4" ry="4.7" fill="#a8a976" opacity="0.7"/><ellipse cx="605.8" cy="254.4" rx="7.3" ry="4.6" fill="#5e5f36" opacity="0.7"/><ellipse cx="533.7" cy="264.0" rx="5.3" ry="4.4" fill="#4c4d2e" opacity="0.7"/><ellipse cx="463.9" cy="259.8" rx="4.0" ry="2.8" fill="#a8a976" opacity="0.7"/><ellipse cx="541.6" cy="261.0" rx="7.3" ry="6.2" fill="#74754a" opacity="0.7"/><ellipse cx="562.1" cy="279.8" rx="2.8" ry="2.2" fill="#74754a" opacity="0.7"/><ellipse cx="534.4" cy="241.7" rx="5.5" ry="3.3" fill="#74754a" opacity="0.7"/><ellipse cx="524.1" cy="262.0" rx="3.0" ry="2.2" fill="#74754a" opacity="0.7"/><ellipse cx="490.9" cy="218.3" rx="4.5" ry="2.6" fill="#4c4d2e" opacity="0.7"/><ellipse cx="471.4" cy="224.0" rx="4.5" ry="3.9" fill="#4c4d2e" opacity="0.7"/><ellipse cx="571.0" cy="257.5" rx="3.2" ry="1.9" fill="#74754a" opacity="0.7"/><ellipse cx="463.6" cy="249.7" rx="6.2" ry="3.6" fill="#5e5f36" opacity="0.7"/><ellipse cx="489.5" cy="257.0" rx="3.3" ry="3.0" fill="#5e5f36" opacity="0.7"/><ellipse cx="549.7" cy="278.4" rx="3.2" ry="2.5" fill="#bcbd94" opacity="0.7"/><ellipse cx="538.6" cy="229.6" rx="7.6" ry="4.8" fill="#74754a" opacity="0.7"/><ellipse cx="541.9" cy="223.9" rx="4.0" ry="2.8" fill="#8e8f5e" opacity="0.7"/><ellipse cx="537.1" cy="256.4" rx="4.8" ry="3.9" fill="#8e8f5e" opacity="0.7"/><ellipse cx="493.5" cy="245.3" rx="3.1" ry="2.3" fill="#4c4d2e" opacity="0.7"/><ellipse cx="565.3" cy="277.8" rx="3.0" ry="2.2" fill="#74754a" opacity="0.7"/><ellipse cx="388.5" cy="223.2" rx="3.3" ry="2.6" fill="#bcbd94" opacity="0.7"/><ellipse cx="516.2" cy="266.0" rx="3.1" ry="2.3" fill="#5e5f36" opacity="0.7"/><ellipse cx="575.3" cy="221.3" rx="3.3" ry="2.7" fill="#4c4d2e" opacity="0.7"/><ellipse cx="440.1" cy="251.8" rx="4.4" ry="2.7" fill="#bcbd94" opacity="0.7"/><ellipse cx="475.0" cy="239.5" rx="2.7" ry="2.2" fill="#bcbd94" opacity="0.7"/><ellipse cx="422.5" cy="229.6" rx="4.9" ry="3.1" fill="#74754a" opacity="0.7"/><ellipse cx="396.0" cy="247.9" rx="2.8" ry="2.1" fill="#4c4d2e" opacity="0.7"/><ellipse cx="482.5" cy="265.4" rx="2.4" ry="1.2" fill="#74754a" opacity="0.7"/><ellipse cx="425.9" cy="226.9" rx="2.9" ry="2.4" fill="#8e8f5e" opacity="0.7"/><ellipse cx="497.8" cy="271.6" rx="4.8" ry="3.2" fill="#a8a976" opacity="0.7"/><ellipse cx="550.7" cy="256.0" rx="7.6" ry="5.6" fill="#4c4d2e" opacity="0.7"/><ellipse cx="503.9" cy="250.1" rx="7.1" ry="4.0" fill="#5e5f36" opacity="0.7"/><ellipse cx="464.4" cy="231.8" rx="3.9" ry="2.0" fill="#bcbd94" opacity="0.7"/><ellipse cx="581.2" cy="212.6" rx="4.6" ry="3.2" fill="#8e8f5e" opacity="0.7"/><ellipse cx="415.3" cy="237.3" rx="4.2" ry="2.2" fill="#5e5f36" opacity="0.7"/><ellipse cx="597.2" cy="212.2" rx="4.1" ry="2.2" fill="#bcbd94" opacity="0.7"/><ellipse cx="537.1" cy="259.0" rx="5.2" ry="3.9" fill="#a8a976" opacity="0.7"/><ellipse cx="486.6" cy="245.5" rx="5.0" ry="2.6" fill="#74754a" opacity="0.7"/><ellipse cx="403.3" cy="242.3" rx="4.4" ry="3.9" fill="#8e8f5e" opacity="0.7"/><ellipse cx="463.6" cy="227.5" rx="2.4" ry="1.4" fill="#74754a" opacity="0.7"/><ellipse cx="493.2" cy="266.7" rx="3.2" ry="1.7" fill="#5e5f36" opacity="0.7"/><ellipse cx="487.8" cy="240.7" rx="2.5" ry="2.0" fill="#74754a" opacity="0.7"/><ellipse cx="538.8" cy="242.9" rx="4.0" ry="2.4" fill="#a8a976" opacity="0.7"/><ellipse cx="395.5" cy="226.9" rx="3.9" ry="3.1" fill="#8e8f5e" opacity="0.7"/><ellipse cx="464.0" cy="244.3" rx="4.0" ry="2.3" fill="#8e8f5e" opacity="0.7"/><ellipse cx="552.3" cy="276.4" rx="3.4" ry="2.8" fill="#bcbd94" opacity="0.7"/><ellipse cx="579.4" cy="219.7" rx="8.2" ry="5.1" fill="#8e8f5e" opacity="0.7"/><ellipse cx="452.2" cy="221.9" rx="5.5" ry="3.7" fill="#5e5f36" opacity="0.7"/><ellipse cx="419.5" cy="250.5" rx="2.8" ry="1.4" fill="#bcbd94" opacity="0.7"/><ellipse cx="593.1" cy="238.4" rx="8.6" ry="5.3" fill="#74754a" opacity="0.7"/><ellipse cx="399.8" cy="229.3" rx="2.6" ry="2.2" fill="#bcbd94" opacity="0.7"/><ellipse cx="424.3" cy="237.1" rx="4.0" ry="2.9" fill="#5e5f36" opacity="0.7"/><ellipse cx="442.1" cy="256.7" rx="5.4" ry="4.7" fill="#74754a" opacity="0.7"/><ellipse cx="352.4" cy="232.0" rx="4.1" ry="3.6" fill="#9c9e88" opacity="0.7"/><ellipse cx="485.8" cy="219.2" rx="2.5" ry="2.2" fill="#74754a" opacity="0.7"/><ellipse cx="405.7" cy="235.7" rx="2.5" ry="2.2" fill="#bcbd94" opacity="0.7"/><ellipse cx="442.2" cy="241.1" rx="4.4" ry="2.6" fill="#8e8f5e" opacity="0.7"/><ellipse cx="427.2" cy="224.3" rx="2.4" ry="1.5" fill="#74754a" opacity="0.7"/><ellipse cx="481.8" cy="247.1" rx="3.6" ry="2.5" fill="#74754a" opacity="0.7"/><ellipse cx="546.4" cy="250.0" rx="5.2" ry="2.8" fill="#a8a976" opacity="0.7"/><ellipse cx="464.3" cy="244.7" rx="5.8" ry="3.7" fill="#8e8f5e" opacity="0.7"/><ellipse cx="432.1" cy="243.1" rx="4.1" ry="2.8" fill="#4c4d2e" opacity="0.7"/><ellipse cx="468.8" cy="251.4" rx="5.3" ry="3.0" fill="#74754a" opacity="0.7"/><ellipse cx="601.9" cy="219.0" rx="4.0" ry="3.3" fill="#a8a976" opacity="0.7"/><ellipse cx="564.7" cy="292.2" rx="3.0" ry="2.0" fill="#bcbd94" opacity="0.7"/><ellipse cx="483.3" cy="215.7" rx="2.7" ry="1.4" fill="#bcbd94" opacity="0.7"/><ellipse cx="560.5" cy="234.9" rx="2.9" ry="1.7" fill="#8e8f5e" opacity="0.7"/><ellipse cx="529.1" cy="211.6" rx="7.3" ry="4.3" fill="#8e8f5e" opacity="0.7"/><ellipse cx="526.1" cy="279.4" rx="6.4" ry="5.0" fill="#8e8f5e" opacity="0.7"/><ellipse cx="336.9" cy="226.4" rx="2.0" ry="1.4" fill="#8e8f5e" opacity="0.7"/><ellipse cx="455.0" cy="258.1" rx="2.7" ry="2.1" fill="#8e8f5e" opacity="0.7"/><ellipse cx="410.1" cy="230.5" rx="5.1" ry="3.4" fill="#5e5f36" opacity="0.7"/><ellipse cx="439.8" cy="258.0" rx="3.3" ry="2.1" fill="#8e8f5e" opacity="0.7"/><ellipse cx="542.9" cy="282.6" rx="3.0" ry="2.6" fill="#74754a" opacity="0.7"/><ellipse cx="532.9" cy="265.0" rx="7.5" ry="5.0" fill="#74754a" opacity="0.7"/><ellipse cx="511.0" cy="252.0" rx="5.3" ry="4.0" fill="#8e8f5e" opacity="0.7"/><ellipse cx="468.7" cy="258.2" rx="5.8" ry="3.3" fill="#74754a" opacity="0.7"/><ellipse cx="548.2" cy="236.6" rx="3.0" ry="2.1" fill="#a8a976" opacity="0.7"/><ellipse cx="388.5" cy="233.2" rx="3.6" ry="1.8" fill="#5e5f36" opacity="0.7"/><ellipse cx="381.7" cy="227.2" rx="3.5" ry="2.2" fill="#bcbd94" opacity="0.7"/><ellipse cx="453.4" cy="254.9" rx="5.4" ry="3.4" fill="#4c4d2e" opacity="0.7"/><ellipse cx="493.2" cy="255.7" rx="4.7" ry="3.0" fill="#a8a976" opacity="0.7"/><ellipse cx="343.4" cy="223.2" rx="3.7" ry="2.6" fill="#8f9178" opacity="0.7"/><ellipse cx="472.4" cy="259.6" rx="4.6" ry="3.5" fill="#4c4d2e" opacity="0.7"/><ellipse cx="486.3" cy="241.6" rx="3.9" ry="2.5" fill="#a8a976" opacity="0.7"/><ellipse cx="444.0" cy="252.5" rx="2.1" ry="1.6" fill="#74754a" opacity="0.7"/><ellipse cx="544.9" cy="215.7" rx="4.8" ry="3.1" fill="#bcbd94" opacity="0.7"/><ellipse cx="551.6" cy="247.1" rx="6.3" ry="4.2" fill="#4c4d2e" opacity="0.7"/><ellipse cx="591.1" cy="225.6" rx="4.9" ry="3.3" fill="#bcbd94" opacity="0.7"/><ellipse cx="338.6" cy="230.5" rx="2.0" ry="1.8" fill="#8e8f5e" opacity="0.7"/><ellipse cx="411.9" cy="223.3" rx="4.5" ry="2.7" fill="#74754a" opacity="0.7"/><ellipse cx="376.1" cy="233.3" rx="4.8" ry="3.8" fill="#5e5f36" opacity="0.7"/><ellipse cx="538.8" cy="246.9" rx="4.6" ry="3.3" fill="#5e5f36" opacity="0.7"/><ellipse cx="514.4" cy="242.8" rx="3.7" ry="3.1" fill="#a8a976" opacity="0.7"/><ellipse cx="524.5" cy="270.1" rx="6.4" ry="3.6" fill="#8e8f5e" opacity="0.7"/><ellipse cx="603.1" cy="238.9" rx="7.7" ry="6.1" fill="#8e8f5e" opacity="0.7"/><ellipse cx="511.6" cy="228.7" rx="6.6" ry="4.0" fill="#5e5f36" opacity="0.7"/><ellipse cx="594.5" cy="287.5" rx="8.4" ry="5.3" fill="#8e8f5e" opacity="0.7"/><ellipse cx="543.7" cy="272.6" rx="3.9" ry="3.0" fill="#5e5f36" opacity="0.7"/><ellipse cx="464.6" cy="226.6" rx="6.4" ry="4.9" fill="#74754a" opacity="0.7"/><ellipse cx="571.7" cy="261.6" rx="3.4" ry="2.3" fill="#74754a" opacity="0.7"/><ellipse cx="445.6" cy="236.9" rx="4.4" ry="3.7" fill="#8e8f5e" opacity="0.7"/><ellipse cx="460.2" cy="226.7" rx="4.0" ry="3.1" fill="#8e8f5e" opacity="0.7"/><ellipse cx="583.0" cy="291.0" rx="3.3" ry="2.4" fill="#4c4d2e" opacity="0.7"/><ellipse cx="512.3" cy="218.2" rx="5.0" ry="2.7" fill="#74754a" opacity="0.7"/><ellipse cx="441.2" cy="256.3" rx="2.4" ry="1.5" fill="#4c4d2e" opacity="0.7"/><ellipse cx="546.8" cy="218.5" rx="3.0" ry="2.4" fill="#4c4d2e" opacity="0.7"/><ellipse cx="383.1" cy="225.7" rx="3.3" ry="1.9" fill="#a8aa92" opacity="0.7"/><ellipse cx="567.6" cy="288.4" rx="7.6" ry="5.9" fill="#8e8f5e" opacity="0.7"/><ellipse cx="485.7" cy="248.9" rx="2.7" ry="1.6" fill="#4c4d2e" opacity="0.7"/><ellipse cx="459.3" cy="219.6" rx="4.5" ry="3.6" fill="#bcbd94" opacity="0.7"/><ellipse cx="577.6" cy="229.7" rx="8.2" ry="5.0" fill="#a8a976" opacity="0.7"/><ellipse cx="576.8" cy="284.7" rx="6.2" ry="3.4" fill="#74754a" opacity="0.7"/><ellipse cx="397.3" cy="248.2" rx="2.0" ry="1.8" fill="#a8a976" opacity="0.7"/><ellipse cx="495.3" cy="213.9" rx="3.8" ry="2.0" fill="#bcbd94" opacity="0.7"/><ellipse cx="603.9" cy="268.6" rx="7.9" ry="6.2" fill="#a8a976" opacity="0.7"/><ellipse cx="438.3" cy="232.2" rx="4.2" ry="2.4" fill="#5e5f36" opacity="0.7"/><ellipse cx="535.7" cy="238.8" rx="5.4" ry="4.0" fill="#8e8f5e" opacity="0.7"/><ellipse cx="375.6" cy="232.6" rx="3.2" ry="1.7" fill="#8f9178" opacity="0.7"/><ellipse cx="572.4" cy="278.0" rx="4.6" ry="2.7" fill="#8e8f5e" opacity="0.7"/><ellipse cx="506.8" cy="235.9" rx="6.9" ry="3.9" fill="#8e8f5e" opacity="0.7"/><ellipse cx="520.6" cy="271.5" rx="3.7" ry="2.6" fill="#8e8f5e" opacity="0.7"/><ellipse cx="536.5" cy="257.3" rx="4.7" ry="3.0" fill="#74754a" opacity="0.7"/><ellipse cx="595.9" cy="215.5" rx="6.6" ry="4.1" fill="#a8a976" opacity="0.7"/><ellipse cx="438.4" cy="248.6" rx="3.2" ry="2.8" fill="#8e8f5e" opacity="0.7"/><ellipse cx="457.4" cy="262.7" rx="4.1" ry="3.5" fill="#8e8f5e" opacity="0.7"/><ellipse cx="602.5" cy="273.2" rx="3.8" ry="3.2" fill="#74754a" opacity="0.7"/><ellipse cx="531.1" cy="212.0" rx="4.5" ry="3.7" fill="#74754a" opacity="0.7"/><ellipse cx="569.1" cy="249.3" rx="7.0" ry="4.5" fill="#4c4d2e" opacity="0.7"/><ellipse cx="571.0" cy="251.2" rx="7.4" ry="5.7" fill="#5e5f36" opacity="0.7"/><ellipse cx="509.5" cy="218.8" rx="6.8" ry="5.9" fill="#8e8f5e" opacity="0.7"/><ellipse cx="584.7" cy="278.7" rx="3.0" ry="1.9" fill="#74754a" opacity="0.7"/><ellipse cx="409.5" cy="239.6" rx="3.2" ry="2.5" fill="#4c4d2e" opacity="0.7"/><ellipse cx="579.3" cy="292.5" rx="2.9" ry="1.7" fill="#bcbd94" opacity="0.7"/><ellipse cx="421.1" cy="253.6" rx="3.4" ry="2.2" fill="#74754a" opacity="0.7"/><ellipse cx="598.3" cy="261.5" rx="4.4" ry="3.0" fill="#8e8f5e" opacity="0.7"/><ellipse cx="470.0" cy="214.5" rx="3.3" ry="1.6" fill="#a8a976" opacity="0.7"/><ellipse cx="522.4" cy="238.0" rx="2.7" ry="1.6" fill="#a8a976" opacity="0.7"/><ellipse cx="512.3" cy="275.5" rx="6.5" ry="5.4" fill="#74754a" opacity="0.7"/><ellipse cx="579.3" cy="295.1" rx="3.3" ry="2.8" fill="#5e5f36" opacity="0.7"/><ellipse cx="429.2" cy="217.0" rx="3.7" ry="2.3" fill="#bcbd94" opacity="0.7"/><ellipse cx="460.1" cy="235.9" rx="2.4" ry="1.3" fill="#4c4d2e" opacity="0.7"/><ellipse cx="399.1" cy="238.4" rx="2.4" ry="2.1" fill="#8e8f5e" opacity="0.7"/><ellipse cx="533.9" cy="283.6" rx="6.2" ry="5.2" fill="#8e8f5e" opacity="0.7"/><ellipse cx="400.4" cy="235.0" rx="3.1" ry="2.8" fill="#74754a" opacity="0.7"/><ellipse cx="529.5" cy="275.0" rx="7.3" ry="4.3" fill="#5e5f36" opacity="0.7"/><ellipse cx="555.1" cy="253.7" rx="5.4" ry="3.1" fill="#5e5f36" opacity="0.7"/><ellipse cx="514.8" cy="212.8" rx="5.4" ry="2.7" fill="#4c4d2e" opacity="0.7"/><ellipse cx="397.4" cy="243.5" rx="3.8" ry="3.0" fill="#5e5f36" opacity="0.7"/><ellipse cx="604.7" cy="238.3" rx="6.5" ry="4.6" fill="#bcbd94" opacity="0.7"/><ellipse cx="549.6" cy="230.4" rx="3.3" ry="2.4" fill="#bcbd94" opacity="0.7"/><ellipse cx="474.2" cy="254.8" rx="3.6" ry="2.1" fill="#5e5f36" opacity="0.7"/><ellipse cx="579.6" cy="219.4" rx="7.3" ry="6.4" fill="#74754a" opacity="0.7"/><ellipse cx="530.8" cy="223.4" rx="3.8" ry="2.4" fill="#8e8f5e" opacity="0.7"/><ellipse cx="560.8" cy="261.3" rx="7.9" ry="4.4" fill="#74754a" opacity="0.7"/><ellipse cx="562.3" cy="209.7" rx="3.7" ry="3.0" fill="#a8a976" opacity="0.7"/><ellipse cx="499.5" cy="215.2" rx="4.3" ry="3.3" fill="#4c4d2e" opacity="0.7"/><ellipse cx="475.9" cy="253.4" rx="5.6" ry="4.2" fill="#4c4d2e" opacity="0.7"/><ellipse cx="493.4" cy="261.8" rx="5.1" ry="3.8" fill="#a8a976" opacity="0.7"/><ellipse cx="510.2" cy="269.3" rx="6.0" ry="4.2" fill="#a8a976" opacity="0.7"/><ellipse cx="520.4" cy="224.1" rx="2.9" ry="2.4" fill="#74754a" opacity="0.7"/><ellipse cx="473.8" cy="236.4" rx="3.4" ry="2.0" fill="#74754a" opacity="0.7"/><ellipse cx="604.4" cy="240.9" rx="5.8" ry="4.2" fill="#a8a976" opacity="0.7"/><ellipse cx="485.1" cy="265.4" rx="4.9" ry="3.9" fill="#74754a" opacity="0.7"/><ellipse cx="524.4" cy="244.2" rx="6.1" ry="4.5" fill="#74754a" opacity="0.7"/><ellipse cx="562.2" cy="248.7" rx="5.9" ry="3.3" fill="#4c4d2e" opacity="0.7"/><ellipse cx="606.4" cy="256.2" rx="4.5" ry="4.0" fill="#a8a976" opacity="0.7"/><ellipse cx="560.5" cy="249.5" rx="5.9" ry="3.2" fill="#4c4d2e" opacity="0.7"/><ellipse cx="558.9" cy="224.9" rx="6.0" ry="4.8" fill="#5e5f36" opacity="0.7"/><ellipse cx="492.9" cy="226.4" rx="4.4" ry="3.7" fill="#5e5f36" opacity="0.7"/><ellipse cx="596.0" cy="254.8" rx="6.9" ry="4.3" fill="#bcbd94" opacity="0.7"/><ellipse cx="547.8" cy="242.0" rx="6.0" ry="4.8" fill="#8e8f5e" opacity="0.7"/><ellipse cx="435.6" cy="242.8" rx="5.5" ry="4.8" fill="#74754a" opacity="0.7"/><ellipse cx="533.8" cy="248.2" rx="7.1" ry="4.8" fill="#74754a" opacity="0.7"/><ellipse cx="517.1" cy="251.4" rx="5.0" ry="3.2" fill="#a8a976" opacity="0.7"/><ellipse cx="586.4" cy="242.5" rx="3.8" ry="3.3" fill="#a8a976" opacity="0.7"/><ellipse cx="410.9" cy="251.3" rx="5.2" ry="4.1" fill="#74754a" opacity="0.7"/><ellipse cx="568.6" cy="227.6" rx="5.3" ry="4.6" fill="#8e8f5e" opacity="0.7"/><ellipse cx="487.3" cy="230.3" rx="4.1" ry="2.6" fill="#a8a976" opacity="0.7"/><ellipse cx="554.5" cy="269.3" rx="6.3" ry="5.3" fill="#74754a" opacity="0.7"/><ellipse cx="533.9" cy="251.8" rx="3.2" ry="2.7" fill="#8e8f5e" opacity="0.7"/><ellipse cx="578.5" cy="248.4" rx="5.5" ry="3.3" fill="#74754a" opacity="0.7"/><ellipse cx="353.5" cy="231.0" rx="1.9" ry="1.2" fill="#a8aa92" opacity="0.7"/><ellipse cx="593.3" cy="289.8" rx="7.7" ry="6.0" fill="#bcbd94" opacity="0.7"/><ellipse cx="408.4" cy="231.8" rx="3.1" ry="2.2" fill="#4c4d2e" opacity="0.7"/><ellipse cx="352.3" cy="232.5" rx="3.3" ry="2.5" fill="#4c4d2e" opacity="0.7"/><ellipse cx="580.5" cy="239.9" rx="5.1" ry="4.1" fill="#8e8f5e" opacity="0.7"/><ellipse cx="415.7" cy="234.7" rx="4.5" ry="3.1" fill="#5e5f36" opacity="0.7"/><ellipse cx="375.6" cy="242.1" rx="1.9" ry="1.4" fill="#8f9178" opacity="0.7"/><ellipse cx="431.4" cy="227.8" rx="4.9" ry="2.8" fill="#a8a976" opacity="0.7"/><ellipse cx="542.4" cy="258.6" rx="5.5" ry="3.6" fill="#a8a976" opacity="0.7"/><ellipse cx="485.3" cy="255.3" rx="5.0" ry="3.2" fill="#74754a" opacity="0.7"/><ellipse cx="577.4" cy="262.9" rx="8.2" ry="5.4" fill="#4c4d2e" opacity="0.7"/><ellipse cx="387.1" cy="228.9" rx="2.9" ry="1.9" fill="#74754a" opacity="0.7"/><ellipse cx="561.9" cy="282.9" rx="3.3" ry="2.4" fill="#74754a" opacity="0.7"/><ellipse cx="460.4" cy="233.7" rx="3.6" ry="2.4" fill="#74754a" opacity="0.7"/><ellipse cx="599.5" cy="271.7" rx="6.5" ry="5.7" fill="#bcbd94" opacity="0.7"/><ellipse cx="435.9" cy="232.8" rx="3.5" ry="2.7" fill="#a8a976" opacity="0.7"/><ellipse cx="582.5" cy="209.9" rx="6.0" ry="3.2" fill="#74754a" opacity="0.7"/><ellipse cx="467.3" cy="232.7" rx="5.7" ry="4.1" fill="#8e8f5e" opacity="0.7"/><ellipse cx="552.0" cy="254.3" rx="7.8" ry="5.5" fill="#a8a976" opacity="0.7"/><ellipse cx="455.2" cy="263.5" rx="3.3" ry="2.1" fill="#74754a" opacity="0.7"/><ellipse cx="387.0" cy="224.0" rx="4.4" ry="3.7" fill="#4c4d2e" opacity="0.7"/><ellipse cx="499.4" cy="245.3" rx="3.4" ry="2.8" fill="#a8a976" opacity="0.7"/><ellipse cx="500.5" cy="212.3" rx="5.1" ry="4.4" fill="#74754a" opacity="0.7"/><ellipse cx="536.8" cy="228.4" rx="7.1" ry="3.9" fill="#bcbd94" opacity="0.7"/><ellipse cx="578.3" cy="233.9" rx="7.6" ry="3.9" fill="#a8a976" opacity="0.7"/><ellipse cx="453.0" cy="234.3" rx="4.7" ry="4.2" fill="#5e5f36" opacity="0.7"/><ellipse cx="517.4" cy="251.8" rx="6.5" ry="5.5" fill="#a8a976" opacity="0.7"/><ellipse cx="433.7" cy="247.0" rx="3.5" ry="2.6" fill="#74754a" opacity="0.7"/><ellipse cx="594.3" cy="210.1" rx="4.1" ry="2.2" fill="#a8a976" opacity="0.7"/><ellipse cx="602.5" cy="264.5" rx="3.7" ry="2.8" fill="#8e8f5e" opacity="0.7"/><ellipse cx="574.6" cy="260.5" rx="2.9" ry="2.3" fill="#74754a" opacity="0.7"/><ellipse cx="606.4" cy="236.4" rx="5.9" ry="4.2" fill="#74754a" opacity="0.7"/><ellipse cx="532.3" cy="219.2" rx="6.3" ry="4.4" fill="#5e5f36" opacity="0.7"/><ellipse cx="391.9" cy="231.0" rx="2.3" ry="1.2" fill="#8f9178" opacity="0.7"/><ellipse cx="603.1" cy="226.1" rx="8.6" ry="6.4" fill="#8e8f5e" opacity="0.7"/><ellipse cx="488.5" cy="240.3" rx="5.1" ry="3.3" fill="#a8a976" opacity="0.7"/><ellipse cx="355.5" cy="224.1" rx="3.3" ry="1.8" fill="#9c9e88" opacity="0.7"/><ellipse cx="457.4" cy="264.3" rx="5.3" ry="4.4" fill="#74754a" opacity="0.7"/><ellipse cx="540.1" cy="265.2" rx="5.5" ry="4.4" fill="#8e8f5e" opacity="0.7"/><ellipse cx="522.3" cy="234.0" rx="6.0" ry="4.1" fill="#8e8f5e" opacity="0.7"/><ellipse cx="578.5" cy="238.2" rx="6.0" ry="4.5" fill="#8e8f5e" opacity="0.7"/><ellipse cx="462.4" cy="256.4" rx="5.8" ry="3.4" fill="#4c4d2e" opacity="0.7"/><ellipse cx="409.0" cy="237.3" rx="2.9" ry="1.8" fill="#5e5f36" opacity="0.7"/><ellipse cx="479.0" cy="242.6" rx="6.4" ry="5.6" fill="#a8a976" opacity="0.7"/><ellipse cx="533.7" cy="277.6" rx="3.5" ry="2.8" fill="#74754a" opacity="0.7"/><ellipse cx="512.8" cy="241.7" rx="2.8" ry="2.2" fill="#8e8f5e" opacity="0.7"/><ellipse cx="547.2" cy="221.6" rx="3.6" ry="2.1" fill="#8e8f5e" opacity="0.7"/><ellipse cx="565.8" cy="264.3" rx="8.1" ry="4.5" fill="#a8a976" opacity="0.7"/></g>
<!-- right sidewalk -->
<polygon points="333,232 607,304 607,343 300,230" fill="#9fa0a3"/>
<polygon points="300,230 607,342 607,354 300,231" fill="#606164"/>
<ellipse cx="290" cy="232" rx="55" ry="9" fill="#bcbdbe" opacity="0.55" filter="url(#blur1)"/>
<!-- lane lines -->
<polygon points="298,229 607,389 607,394 297,230" fill="#e4e4e5"/>
<polygon points="292,230 146,284 0,318 0,323 147,286" fill="#d8d8da"/>
<polygon points="0,304 60,290 60,292 0,308" fill="#c6c6c8"/>
<polygon points="163,268 389,272 389,275 163,272" fill="#dcdcde"/>
<polygon points="60,295 445,307 476,318 47,305" fill="#dededf"/>
<polygon points="271,262 275,255 277,255 273,270" fill="#dcdcde"/>
<text x="200" y="270" font-family="Liberation Sans" font-weight="bold" font-size="17" fill="#d6d6d8" transform="skewX(-10) translate(47,0)" letter-spacing="1">BUS</text>
<ellipse cx="275" cy="291" rx="18" ry="4" fill="#6f7073" opacity="0.7"/>
</svg>

<div id="view" class="abs"><svg width="820" height="802" viewBox="635 85 820 802" style="position:absolute;left:0;top:0" fill="none" stroke-linecap="square"><defs>
<radialGradient id="rglow" cx="0.5" cy="0.5" r="0.5"><stop offset="0" stop-color="#ff2a10" stop-opacity="1"/><stop offset="0.5" stop-color="#fa2c10" stop-opacity="1"/><stop offset="0.72" stop-color="#e82c14" stop-opacity="0.75"/><stop offset="1" stop-color="#c82818" stop-opacity="0"/></radialGradient>
<linearGradient id="owall" x1="0" y1="0" x2="1" y2="1"><stop offset="0" stop-color="#f07a1a"/><stop offset="1" stop-color="#ec5a16"/></linearGradient>
<linearGradient id="b2g" x1="0" y1="0" x2="0" y2="1"><stop offset="0" stop-color="#7ed444"/><stop offset="0.3" stop-color="#b2d842"/><stop offset="0.6" stop-color="#e0cc34"/><stop offset="0.85" stop-color="#eca028"/><stop offset="1" stop-color="#f07a1c"/></linearGradient>
<linearGradient id="spk" x1="0" y1="0" x2="0" y2="1"><stop offset="0" stop-color="#90e040"/><stop offset="0.6" stop-color="#e8c830"/><stop offset="1" stop-color="#f06818"/></linearGradient>
<radialGradient id="oglow" cx="0.5" cy="0.5" r="0.5"><stop offset="0" stop-color="#f06a18" stop-opacity="0.9"/><stop offset="1" stop-color="#e04a14" stop-opacity="0"/></radialGradient>
</defs>
<ellipse cx="1045" cy="508" rx="102" ry="44" fill="url(#rglow)"/>
<ellipse cx="1108" cy="470" rx="22" ry="14" fill="url(#oglow)"/>
<polygon points="903,507 978,559 978,600 970,600 968,574 903,522" fill="url(#owall)" opacity="0.95"/>
<polygon points="885,425 940,433 947,397 950,442 945,466 944,474 885,477" fill="url(#b2g)"/>
<polygon points="885,425 890,426 890,477 885,477" fill="#d8e040" opacity="0.6"/>
<g stroke="#32302e" stroke-width="0.6" opacity="0.45"><path d="M886 428H948M886 431H948M886 434H948M886 437H948M886 440H948M886 443H948M886 446H948M886 449H948M886 452H948M886 455H948M886 458H948M886 461H948M886 464H948M886 467H948M886 470H948M886 473H948"/></g>
<g fill="#2a2826" opacity="0.85"><rect x="893" y="456" width="14" height="3"/><rect x="894" y="459" width="4" height="12"/><rect x="902" y="460" width="6" height="9"/><rect x="911" y="455" width="3" height="16"/><rect x="916" y="454" width="24" height="2.5"/><rect x="921" y="457" width="3" height="14"/><rect x="929" y="459" width="9" height="8"/></g>
<polygon points="958,358 963,344 965,358 962,400 957,398" fill="url(#spk)"/>
<polygon points="1102,368 1107,366 1110,410 1102,410" fill="url(#spk)"/>
<path stroke="#d62818" stroke-width="1" opacity="0.0001" d="M736 440L883 438M736 452L883 450"/><path stroke="#d62818" stroke-width="1.2" opacity="0.55" d="M1013 336.5L1065 336.5"/><path stroke="#d62818" stroke-width="1.2" opacity="0.6" d="M948 361.6L1065 361.6M938 342L972 342M1015 336L1065 336M1005 361L1090 361M1063 345L1085 345"/><path stroke="#d62818" stroke-width="1.3" opacity="0.8" d="M945 474L990 468L1045 467L1100 468L1120 472M945 478L990 472L1045 471L1100 472L1120 476"/><path stroke="#d62818" stroke-width="1.3" opacity="0.85" d="M1100.3 505L1100 507.1L1099.3 509.1L1098 511.1L1096.2 513.1L1094 515L1091.3 516.8L1088.2 518.5L1084.7 520L1080.8 521.4L1076.6 522.7L1072.1 523.8L1067.4 524.7L1062.4 525.4L1057.3 526L1052.1 526.3L1046.8 526.5L1041.5 526.4L1036.3 526.2L1031.1 525.7L1026.1 525.1L1021.2 524.3L1016.6 523.3L1012.2 522.1L1008.2 520.7L1004.5 519.3L1001.2 517.6L998.3 515.9L995.8 514.1L993.8 512.1L992.3 510.1L991.3 508.1L990.8 506L990.8 504L991.3 501.9L992.3 499.9L993.8 497.9L995.8 495.9L998.3 494.1L1001.2 492.4L1004.5 490.7L1008.2 489.3L1012.2 487.9L1016.6 486.7L1021.2 485.7L1026.1 484.9L1031.1 484.3L1036.3 483.8L1041.5 483.6L1046.8 483.5L1052.1 483.7L1057.3 484L1062.4 484.6L1067.4 485.3L1072.1 486.2L1076.6 487.3L1080.8 488.6L1084.7 490L1088.2 491.5L1091.3 493.2L1094 495L1096.2 496.9L1098 498.9L1099.3 500.9L1100 502.9L1100.3 505M1105.2 505.1L1104.9 507.2L1104.2 509.2L1103.1 511.2L1101.5 513.2L1099.4 515.1L1096.9 516.9L1094.1 518.7L1090.8 520.3L1087.2 521.8L1083.3 523.2L1079.1 524.4L1074.6 525.5L1069.8 526.5L1064.9 527.2L1059.9 527.8L1054.7 528.2L1049.5 528.4L1044.2 528.5L1038.9 528.4L1033.7 528L1028.6 527.5L1023.6 526.9L1018.8 526L1014.2 525L1009.8 523.8L1005.7 522.5L1001.9 521.1L998.5 519.5L995.4 517.8L992.8 516L990.5 514.2L988.7 512.2L987.3 510.2L986.4 508.2L985.9 506.1L985.9 504.1L986.4 502L987.3 500L988.7 498L990.5 496L992.8 494.1L995.4 492.4L998.5 490.7L1001.9 489.1L1005.7 487.7L1009.8 486.3L1014.2 485.2L1018.8 484.2L1023.6 483.3L1028.6 482.6L1033.7 482.1L1038.9 481.8L1044.2 481.7L1049.5 481.7L1054.7 482L1059.9 482.4L1064.9 483L1069.8 483.7L1074.6 484.7L1079.1 485.7L1083.3 487L1087.2 488.4L1090.8 489.9L1094.1 491.5L1096.9 493.2L1099.4 495.1L1101.5 497L1103.1 499L1104.2 501L1104.9 503L1105.2 505.1M1110 505.2L1109.8 507.3L1109.1 509.3L1108.1 511.3L1106.6 513.3L1104.7 515.2L1102.4 517.1L1099.7 518.9L1096.7 520.6L1093.4 522.2L1089.7 523.6L1085.7 525L1081.5 526.2L1077 527.3L1072.3 528.2L1067.4 529L1062.4 529.6L1057.3 530.1L1052.1 530.4L1046.8 530.5L1041.6 530.5L1036.3 530.2L1031.2 529.9L1026.1 529.3L1021.1 528.6L1016.3 527.8L1011.8 526.8L1007.4 525.6L1003.3 524.3L999.4 522.9L995.9 521.4L992.7 519.7L989.9 518L987.4 516.2L985.3 514.3L983.6 512.3L982.4 510.3L981.5 508.3L981.1 506.2L981.1 504.2L981.5 502.1L982.4 500.1L983.6 498.1L985.3 496.1L987.4 494.2L989.9 492.4L992.7 490.7L995.9 489L999.4 487.5L1003.3 486.1L1007.4 484.8L1011.8 483.6L1016.3 482.6L1021.1 481.8L1026.1 481.1L1031.2 480.5L1036.3 480.1L1041.6 479.9L1046.8 479.9L1052.1 480L1057.3 480.3L1062.4 480.8L1067.4 481.4L1072.3 482.2L1077 483.1L1081.5 484.2L1085.7 485.4L1089.7 486.8L1093.4 488.2L1096.7 489.8L1099.7 491.5L1102.4 493.3L1104.7 495.2L1106.6 497.1L1108.1 499.1L1109.1 501.1L1109.8 503.1L1110 505.2M1114.8 505.3L1114.6 507.4L1114 509.4L1113 511.4L1111.6 513.4L1109.9 515.4L1107.8 517.2L1105.3 519L1102.5 520.8L1099.3 522.4L1095.9 524L1092.1 525.4L1088.1 526.7L1083.9 528L1079.4 529L1074.7 530L1069.9 530.8L1064.9 531.4L1059.8 531.9L1054.7 532.3L1049.4 532.5L1044.2 532.5L1039 532.4L1033.8 532.1L1028.6 531.7L1023.6 531.1L1018.7 530.4L1013.9 529.5L1009.3 528.5L1005 527.4L1000.8 526.1L997 524.7L993.4 523.2L990.1 521.6L987.1 519.9L984.4 518.2L982.1 516.3L980.2 514.4L978.6 512.4L977.4 510.4L976.6 508.4L976.3 506.3L976.3 504.3L976.6 502.2L977.4 500.2L978.6 498.2L980.2 496.2L982.1 494.3L984.4 492.4L987.1 490.7L990.1 489L993.4 487.4L997 485.9L1000.8 484.5L1005 483.2L1009.3 482.1L1013.9 481.1L1018.7 480.2L1023.6 479.5L1028.6 478.9L1033.8 478.5L1039 478.2L1044.2 478.1L1049.4 478.1L1054.7 478.3L1059.8 478.7L1064.9 479.2L1069.9 479.8L1074.7 480.6L1079.4 481.6L1083.9 482.6L1088.1 483.9L1092.1 485.2L1095.9 486.6L1099.3 488.2L1102.5 489.8L1105.3 491.6L1107.8 493.4L1109.9 495.2L1111.6 497.2L1113 499.2L1114 501.2L1114.6 503.2L1114.8 505.3M1119.6 505.4L1119.4 507.5L1118.8 509.6L1117.9 511.6L1116.6 513.6L1114.9 515.6L1112.9 517.5L1110.5 519.4L1107.8 521.1L1104.8 522.8L1101.5 524.5L1097.9 526L1094 527.4L1089.9 528.7L1085.6 529.9L1081 530.9L1076.3 531.9L1071.4 532.7L1066.4 533.3L1061.2 533.8L1056 534.2L1050.8 534.4L1045.5 534.5L1040.2 534.4L1035 534.2L1029.8 533.8L1024.6 533.3L1019.6 532.7L1014.7 531.9L1010 530.9L1005.4 529.9L1001.1 528.7L997 527.4L993.1 526L989.5 524.5L986.2 522.8L983.2 521.1L980.5 519.4L978.1 517.5L976.1 515.6L974.4 513.6L973.1 511.6L972.2 509.6L971.6 507.5L971.4 505.4L971.6 503.3L972.2 501.3L973.1 499.2L974.4 497.2L976.1 495.3L978.1 493.3L980.5 491.5L983.2 489.7L986.2 488L989.5 486.4L993.1 484.8L997 483.4L1001.1 482.1L1005.4 480.9L1010 479.9L1014.7 479L1019.6 478.2L1024.6 477.5L1029.8 477L1035 476.6L1040.2 476.4L1045.5 476.3L1050.8 476.4L1056 476.6L1061.2 477L1066.4 477.5L1071.4 478.2L1076.3 479L1081 479.9L1085.6 480.9L1089.9 482.1L1094 483.4L1097.9 484.8L1101.5 486.4L1104.8 488L1107.8 489.7L1110.5 491.5L1112.9 493.3L1114.9 495.3L1116.6 497.2L1117.9 499.2L1118.8 501.3L1119.4 503.3L1119.6 505.4M1124.4 505.5L1124.2 507.6L1123.7 509.7L1122.8 511.7L1121.6 513.7L1120 515.7L1118.1 517.6L1115.9 519.5L1113.4 521.3L1110.5 523.1L1107.4 524.7L1104 526.3L1100.3 527.8L1096.4 529.2L1092.3 530.5L1087.9 531.6L1083.4 532.7L1078.7 533.6L1073.8 534.4L1068.9 535.1L1063.8 535.7L1058.6 536.1L1053.4 536.3L1048.1 536.5L1042.9 536.5L1037.6 536.3L1032.4 536.1L1027.2 535.7L1022.1 535.1L1017.2 534.4L1012.3 533.6L1007.6 532.7L1003.1 531.6L998.7 530.5L994.6 529.2L990.7 527.8L987 526.3L983.6 524.7L980.5 523.1L977.6 521.3L975.1 519.5L972.9 517.6L971 515.7L969.4 513.7L968.2 511.7L967.3 509.7L966.8 507.6L966.6 505.5L966.8 503.5L967.3 501.4L968.2 499.4L969.4 497.4L971 495.4L972.9 493.4L975.1 491.6L977.6 489.8L980.5 488L983.6 486.3L987 484.8L990.7 483.3L994.6 481.9L998.7 480.6L1003.1 479.4L1007.6 478.4L1012.3 477.5L1017.2 476.6L1022.1 476L1027.2 475.4L1032.4 475L1037.6 474.7L1042.9 474.6L1048.1 474.6L1053.4 474.7L1058.6 475L1063.8 475.4L1068.9 476L1073.8 476.6L1078.7 477.5L1083.4 478.4L1087.9 479.4L1092.3 480.6L1096.4 481.9L1100.3 483.3L1104 484.8L1107.4 486.3L1110.5 488L1113.4 489.8L1115.9 491.6L1118.1 493.4L1120 495.4L1121.6 497.4L1122.8 499.4L1123.7 501.4L1124.2 503.5L1124.4 505.5M1129.1 505.7L1129 507.7L1128.5 509.8L1127.6 511.8L1126.5 513.8L1125 515.8L1123.3 517.8L1121.2 519.6L1118.8 521.5L1116.1 523.3L1113.2 525L1109.9 526.6L1106.5 528.1L1102.7 529.6L1098.8 531L1094.7 532.2L1090.3 533.4L1085.8 534.4L1081.1 535.4L1076.3 536.2L1071.3 536.9L1066.3 537.5L1061.2 537.9L1056 538.2L1050.8 538.4L1045.5 538.5L1040.2 538.4L1035 538.2L1029.8 537.9L1024.7 537.5L1019.7 536.9L1014.7 536.2L1009.9 535.4L1005.2 534.4L1000.7 533.4L996.3 532.2L992.2 531L988.3 529.6L984.5 528.1L981.1 526.6L977.8 525L974.9 523.3L972.2 521.5L969.8 519.6L967.7 517.8L966 515.8L964.5 513.8L963.4 511.8L962.5 509.8L962 507.7L961.9 505.7L962 503.6L962.5 501.6L963.4 499.5L964.5 497.5L966 495.5L967.7 493.6L969.8 491.7L972.2 489.8L974.9 488.1L977.8 486.4L981.1 484.7L984.5 483.2L988.3 481.7L992.2 480.4L996.3 479.1L1000.7 477.9L1005.2 476.9L1009.9 476L1014.7 475.1L1019.7 474.4L1024.7 473.9L1029.8 473.4L1035 473.1L1040.2 472.9L1045.5 472.8L1050.8 472.9L1056 473.1L1061.2 473.4L1066.3 473.9L1071.3 474.4L1076.3 475.1L1081.1 476L1085.8 476.9L1090.3 477.9L1094.7 479.1L1098.8 480.4L1102.7 481.7L1106.5 483.2L1109.9 484.7L1113.2 486.4L1116.1 488.1L1118.8 489.8L1121.2 491.7L1123.3 493.6L1125 495.5L1126.5 497.5L1127.6 499.5L1128.5 501.6L1129 503.6L1129.1 505.7M1133.9 505.8L1133.7 507.9L1133.2 509.9L1132.5 511.9L1131.4 514L1130 515.9L1128.3 517.9L1126.4 519.8L1124.1 521.6L1121.6 523.4L1118.8 525.2L1115.7 526.9L1112.4 528.5L1108.9 530L1105.1 531.4L1101.2 532.7L1097 534L1092.7 535.1L1088.2 536.2L1083.5 537.1L1078.7 538L1073.8 538.7L1068.8 539.3L1063.7 539.8L1058.5 540.1L1053.3 540.4L1048.1 540.5L1042.9 540.5L1037.7 540.4L1032.5 540.1L1027.3 539.8L1022.2 539.3L1017.2 538.7L1012.3 538L1007.5 537.1L1002.8 536.2L998.3 535.1L994 534L989.8 532.7L985.9 531.4L982.1 530L978.6 528.5L975.3 526.9L972.2 525.2L969.4 523.4L966.9 521.6L964.6 519.8L962.7 517.9L961 515.9L959.6 514L958.5 511.9L957.8 509.9L957.3 507.9L957.1 505.8L957.3 503.7L957.8 501.7L958.5 499.7L959.6 497.7L961 495.7L962.7 493.7L964.6 491.8L966.9 490L969.4 488.2L972.2 486.4L975.3 484.7L978.6 483.1L982.1 481.6L985.9 480.2L989.8 478.9L994 477.6L998.3 476.5L1002.8 475.4L1007.5 474.5L1012.3 473.6L1017.2 472.9L1022.2 472.3L1027.3 471.8L1032.5 471.5L1037.7 471.2L1042.9 471.1L1048.1 471.1L1053.3 471.2L1058.5 471.5L1063.7 471.8L1068.8 472.3L1073.8 472.9L1078.7 473.6L1083.5 474.5L1088.2 475.4L1092.7 476.5L1097 477.6L1101.2 478.9L1105.1 480.2L1108.9 481.6L1112.4 483.1L1115.7 484.7L1118.8 486.4L1121.6 488.2L1124.1 490L1126.4 491.8L1128.3 493.7L1130 495.7L1131.4 497.7L1132.5 499.7L1133.2 501.7L1133.7 503.7L1133.9 505.8M1139.7 506L1139.6 508L1139.2 510.1L1138.4 512.1L1137.4 514.1L1136.1 516.1L1134.6 518.1L1132.7 520L1130.6 521.9L1128.2 523.7L1125.5 525.5L1122.7 527.2L1119.5 528.9L1116.2 530.5L1112.6 532L1108.8 533.4L1104.8 534.7L1100.7 536L1096.4 537.1L1091.9 538.2L1087.2 539.2L1082.5 540L1077.6 540.8L1072.6 541.4L1067.6 542L1062.4 542.4L1057.3 542.7L1052 542.9L1046.8 543L1041.6 543L1036.3 542.8L1031.1 542.6L1026 542.2L1020.9 541.7L1015.9 541.1L1011 540.4L1006.1 539.6L1001.4 538.7L996.9 537.7L992.5 536.6L988.2 535.4L984.1 534.1L980.3 532.7L976.6 531.2L973.1 529.7L969.9 528.1L966.9 526.4L964.1 524.6L961.6 522.8L959.3 521L957.3 519.1L955.6 517.1L954.2 515.1L953 513.1L952.2 511.1L951.6 509.1L951.3 507L951.3 505L951.6 502.9L952.2 500.9L953 498.8L954.2 496.8L955.6 494.8L957.3 492.9L959.3 491L961.6 489.1L964.1 487.3L966.9 485.6L969.9 483.9L973.1 482.3L976.6 480.7L980.3 479.3L984.1 477.9L988.2 476.6L992.5 475.4L996.9 474.3L1001.4 473.3L1006.1 472.3L1011 471.5L1015.9 470.8L1020.9 470.2L1026 469.8L1031.1 469.4L1036.3 469.1L1041.6 469L1046.8 469L1052 469.1L1057.3 469.3L1062.4 469.6L1067.6 470L1072.6 470.5L1077.6 471.2L1082.5 471.9L1087.2 472.8L1091.9 473.8L1096.4 474.8L1100.7 476L1104.8 477.2L1108.8 478.6L1112.6 480L1116.2 481.5L1119.5 483.1L1122.7 484.7L1125.5 486.4L1128.2 488.2L1130.6 490.1L1132.7 491.9L1134.6 493.9L1136.1 495.8L1137.4 497.8L1138.4 499.8L1139.2 501.9L1139.6 503.9L1139.7 506M1145.6 506.2L1145.5 508.2L1145.1 510.3L1144.4 512.3L1143.4 514.3L1142.2 516.4L1140.7 518.3L1139 520.3L1137 522.2L1134.7 524L1132.2 525.8L1129.5 527.6L1126.5 529.3L1123.3 530.9L1119.9 532.5L1116.3 534L1112.5 535.4L1108.5 536.7L1104.3 538L1100 539.2L1095.6 540.2L1090.9 541.2L1086.2 542.1L1081.4 542.9L1076.4 543.6L1071.4 544.2L1066.3 544.6L1061.2 545L1056 545.3L1050.7 545.4L1045.5 545.5L1040.3 545.4L1035 545.3L1029.8 545L1024.7 544.6L1019.6 544.2L1014.6 543.6L1009.6 542.9L1004.8 542.1L1000.1 541.2L995.4 540.2L991 539.2L986.7 538L982.5 536.7L978.5 535.4L974.7 534L971.1 532.5L967.7 530.9L964.5 529.3L961.5 527.6L958.8 525.8L956.3 524L954 522.2L952 520.3L950.3 518.3L948.8 516.4L947.6 514.3L946.6 512.3L945.9 510.3L945.5 508.2L945.4 506.2L945.5 504.1L945.9 502.1L946.6 500L947.6 498L948.8 496L950.3 494L952 492.1L954 490.2L956.3 488.3L958.8 486.5L961.5 484.8L964.5 483.1L967.7 481.4L971.1 479.9L974.7 478.4L978.5 476.9L982.5 475.6L986.7 474.4L991 473.2L995.4 472.1L1000.1 471.1L1004.8 470.2L1009.6 469.5L1014.6 468.8L1019.6 468.2L1024.7 467.7L1029.8 467.3L1035 467.1L1040.3 466.9L1045.5 466.8L1050.7 466.9L1056 467.1L1061.2 467.3L1066.3 467.7L1071.4 468.2L1076.4 468.8L1081.4 469.5L1086.2 470.2L1090.9 471.1L1095.6 472.1L1100 473.2L1104.3 474.4L1108.5 475.6L1112.5 476.9L1116.3 478.4L1119.9 479.9L1123.3 481.4L1126.5 483.1L1129.5 484.8L1132.2 486.5L1134.7 488.3L1137 490.2L1139 492.1L1140.7 494L1142.2 496L1143.4 498L1144.4 500L1145.1 502.1L1145.5 504.1L1145.6 506.2M1151.4 506.4L1151.3 508.4L1150.9 510.5L1150.3 512.5L1149.4 514.6L1148.2 516.6L1146.8 518.5L1145.1 520.5L1143.2 522.4L1141.1 524.3L1138.7 526.1L1136.1 527.9L1133.3 529.7L1130.3 531.3L1127 533L1123.6 534.5L1119.9 536L1116.1 537.4L1112.1 538.7L1108 540L1103.7 541.2L1099.2 542.3L1094.6 543.3L1089.9 544.2L1085.1 545L1080.2 545.7L1075.2 546.3L1070.2 546.9L1065 547.3L1059.9 547.6L1054.7 547.8L1049.4 548L1044.2 548L1039 547.9L1033.7 547.7L1028.5 547.5L1023.4 547.1L1018.3 546.6L1013.3 546L1008.3 545.4L1003.5 544.6L998.7 543.7L994.1 542.8L989.5 541.7L985.2 540.6L980.9 539.4L976.8 538.1L972.9 536.7L969.2 535.3L965.7 533.7L962.3 532.2L959.2 530.5L956.3 528.8L953.5 527L951.1 525.2L948.8 523.4L946.8 521.5L945 519.5L943.5 517.6L942.2 515.6L941.1 513.5L940.4 511.5L939.9 509.5L939.6 507.4L939.6 505.3L939.9 503.3L940.4 501.2L941.1 499.2L942.2 497.2L943.5 495.2L945 493.2L946.8 491.3L948.8 489.4L951.1 487.5L953.5 485.7L956.3 483.9L959.2 482.2L962.3 480.6L965.7 479L969.2 477.5L972.9 476L976.8 474.7L980.9 473.4L985.2 472.2L989.5 471L994.1 470L998.7 469L1003.5 468.2L1008.3 467.4L1013.3 466.7L1018.3 466.1L1023.4 465.7L1028.5 465.3L1033.7 465L1039 464.8L1044.2 464.7L1049.4 464.8L1054.7 464.9L1059.9 465.1L1065 465.5L1070.2 465.9L1075.2 466.4L1080.2 467L1085.1 467.8L1089.9 468.6L1094.6 469.5L1099.2 470.5L1103.7 471.6L1108 472.8L1112.1 474L1116.1 475.3L1119.9 476.8L1123.6 478.2L1127 479.8L1130.3 481.4L1133.3 483.1L1136.1 484.8L1138.7 486.6L1141.1 488.4L1143.2 490.3L1145.1 492.2L1146.8 494.2L1148.2 496.2L1149.4 498.2L1150.3 500.2L1150.9 502.3L1151.3 504.3L1151.4 506.4M1157.2 506.6L1157.1 508.6L1156.7 510.7L1156.1 512.7L1155.3 514.8L1154.2 516.8L1152.8 518.8L1151.3 520.7L1149.5 522.7L1147.4 524.6L1145.2 526.4L1142.7 528.2L1140 530L1137.1 531.7L1134 533.4L1130.7 535L1127.2 536.5L1123.6 538L1119.7 539.4L1115.7 540.7L1111.6 542L1107.3 543.2L1102.9 544.3L1098.3 545.3L1093.6 546.2L1088.9 547.1L1084 547.8L1079 548.5L1074 549L1068.9 549.5L1063.8 549.9L1058.6 550.2L1053.4 550.4L1048.1 550.5L1042.9 550.5L1037.6 550.4L1032.4 550.2L1027.2 549.9L1022.1 549.5L1017 549L1012 548.5L1007 547.8L1002.1 547.1L997.4 546.2L992.7 545.3L988.1 544.3L983.7 543.2L979.4 542L975.3 540.7L971.3 539.4L967.4 538L963.8 536.5L960.3 535L957 533.4L953.9 531.7L951 530L948.3 528.2L945.8 526.4L943.6 524.6L941.5 522.7L939.7 520.7L938.2 518.8L936.8 516.8L935.7 514.8L934.9 512.7L934.3 510.7L933.9 508.6L933.8 506.6L933.9 504.5L934.3 502.5L934.9 500.4L935.7 498.4L936.8 496.4L938.2 494.4L939.7 492.4L941.5 490.5L943.6 488.6L945.8 486.7L948.3 484.9L951 483.2L953.9 481.4L957 479.8L960.3 478.2L963.8 476.6L967.4 475.2L971.3 473.8L975.3 472.4L979.4 471.2L983.7 470L988.1 468.9L992.7 467.9L997.4 467L1002.1 466.1L1007 465.4L1012 464.7L1017 464.1L1022.1 463.6L1027.2 463.3L1032.4 463L1037.6 462.8L1042.9 462.7L1048.1 462.7L1053.4 462.8L1058.6 463L1063.8 463.3L1068.9 463.6L1074 464.1L1079 464.7L1084 465.4L1088.9 466.1L1093.6 467L1098.3 467.9L1102.9 468.9L1107.3 470L1111.6 471.2L1115.7 472.4L1119.7 473.8L1123.6 475.2L1127.2 476.6L1130.7 478.2L1134 479.8L1137.1 481.4L1140 483.2L1142.7 484.9L1145.2 486.7L1147.4 488.6L1149.5 490.5L1151.3 492.4L1152.8 494.4L1154.2 496.4L1155.3 498.4L1156.1 500.4L1156.7 502.5L1157.1 504.5L1157.2 506.6M1164.2 506.8L1164 508.9L1163.7 511L1163.1 513L1162.3 515.1L1161.3 517.1L1160 519.1L1158.5 521.1L1156.8 523L1154.9 524.9L1152.7 526.8L1150.4 528.7L1147.8 530.5L1145.1 532.2L1142.1 533.9L1139 535.6L1135.6 537.2L1132.1 538.7L1128.5 540.2L1124.6 541.6L1120.6 543L1116.5 544.2L1112.2 545.4L1107.8 546.5L1103.3 547.6L1098.7 548.6L1093.9 549.4L1089.1 550.2L1084.2 551L1079.2 551.6L1074.1 552.1L1069 552.6L1063.8 552.9L1058.6 553.2L1053.4 553.4L1048.1 553.5L1042.9 553.5L1037.6 553.4L1032.4 553.2L1027.2 552.9L1022 552.6L1016.9 552.1L1011.8 551.6L1006.8 551L1001.9 550.2L997.1 549.4L992.3 548.6L987.7 547.6L983.2 546.5L978.8 545.4L974.5 544.2L970.4 543L966.4 541.6L962.5 540.2L958.9 538.7L955.4 537.2L952 535.6L948.9 533.9L945.9 532.2L943.2 530.5L940.6 528.7L938.3 526.8L936.1 524.9L934.2 523L932.5 521.1L931 519.1L929.7 517.1L928.7 515.1L927.9 513L927.3 511L927 508.9L926.8 506.8L927 504.8L927.3 502.7L927.9 500.7L928.7 498.6L929.7 496.6L931 494.6L932.5 492.6L934.2 490.7L936.1 488.8L938.3 486.9L940.6 485L943.2 483.2L945.9 481.5L948.9 479.8L952 478.1L955.4 476.5L958.9 475L962.5 473.5L966.4 472.1L970.4 470.7L974.5 469.5L978.8 468.3L983.2 467.2L987.7 466.1L992.3 465.1L997.1 464.3L1001.9 463.5L1006.8 462.7L1011.8 462.1L1016.9 461.6L1022 461.1L1027.2 460.8L1032.4 460.5L1037.6 460.3L1042.9 460.2L1048.1 460.2L1053.4 460.3L1058.6 460.5L1063.8 460.8L1069 461.1L1074.1 461.6L1079.2 462.1L1084.2 462.7L1089.1 463.5L1093.9 464.3L1098.7 465.1L1103.3 466.1L1107.8 467.2L1112.2 468.3L1116.5 469.5L1120.6 470.7L1124.6 472.1L1128.5 473.5L1132.1 475L1135.6 476.5L1139 478.1L1142.1 479.8L1145.1 481.5L1147.8 483.2L1150.4 485L1152.7 486.9L1154.9 488.8L1156.8 490.7L1158.5 492.6L1160 494.6L1161.3 496.6L1162.3 498.6L1163.1 500.7L1163.7 502.7L1164 504.8L1164.2 506.8M1171 507.1L1170.9 509.2L1170.6 511.3L1170 513.3L1169.3 515.4L1168.3 517.4L1167.1 519.4L1165.7 521.4L1164.1 523.4L1162.2 525.3L1160.2 527.2L1157.9 529.1L1155.5 530.9L1152.9 532.7L1150.1 534.5L1147.1 536.1L1143.9 537.8L1140.5 539.4L1137 540.9L1133.3 542.4L1129.5 543.8L1125.5 545.2L1121.4 546.5L1117.1 547.7L1112.8 548.8L1108.3 549.9L1103.7 550.9L1098.9 551.8L1094.1 552.6L1089.3 553.4L1084.3 554.1L1079.3 554.7L1074.2 555.2L1069 555.6L1063.8 556L1058.6 556.2L1053.4 556.4L1048.1 556.5L1042.9 556.5L1037.6 556.4L1032.4 556.2L1027.2 556L1022 555.6L1016.8 555.2L1011.7 554.7L1006.7 554.1L1001.7 553.4L996.9 552.6L992.1 551.8L987.3 550.9L982.7 549.9L978.2 548.8L973.9 547.7L969.6 546.5L965.5 545.2L961.5 543.8L957.7 542.4L954 540.9L950.5 539.4L947.1 537.8L943.9 536.1L940.9 534.5L938.1 532.7L935.5 530.9L933.1 529.1L930.8 527.2L928.8 525.3L926.9 523.4L925.3 521.4L923.9 519.4L922.7 517.4L921.7 515.4L921 513.3L920.4 511.3L920.1 509.2L920 507.1L920.1 505.1L920.4 503L921 500.9L921.7 498.9L922.7 496.9L923.9 494.9L925.3 492.9L926.9 490.9L928.8 489L930.8 487.1L933.1 485.2L935.5 483.3L938.1 481.6L940.9 479.8L943.9 478.1L947.1 476.5L950.5 474.9L954 473.3L957.7 471.9L961.5 470.4L965.5 469.1L969.6 467.8L973.9 466.6L978.2 465.4L982.7 464.4L987.3 463.4L992.1 462.5L996.9 461.6L1001.7 460.9L1006.7 460.2L1011.7 459.6L1016.8 459.1L1022 458.6L1027.2 458.3L1032.4 458L1037.6 457.9L1042.9 457.8L1048.1 457.8L1053.4 457.9L1058.6 458L1063.8 458.3L1069 458.6L1074.2 459.1L1079.3 459.6L1084.3 460.2L1089.3 460.9L1094.1 461.6L1098.9 462.5L1103.7 463.4L1108.3 464.4L1112.8 465.4L1117.1 466.6L1121.4 467.8L1125.5 469.1L1129.5 470.4L1133.3 471.9L1137 473.3L1140.5 474.9L1143.9 476.5L1147.1 478.1L1150.1 479.8L1152.9 481.6L1155.5 483.3L1157.9 485.2L1160.2 487.1L1162.2 489L1164.1 490.9L1165.7 492.9L1167.1 494.9L1168.3 496.9L1169.3 498.9L1170 500.9L1170.6 503L1170.9 505.1L1171 507.1M1177.9 507.4L1177.8 509.5L1177.5 511.6L1176.9 513.6L1176.2 515.7L1175.3 517.7L1174.1 519.7L1172.8 521.7L1171.2 523.7L1169.5 525.7L1167.5 527.6L1165.4 529.5L1163.1 531.3L1160.6 533.2L1157.9 534.9L1155 536.7L1152 538.4L1148.8 540L1145.4 541.6L1141.8 543.1L1138.2 544.6L1134.3 546L1130.4 547.4L1126.3 548.7L1122 549.9L1117.7 551.1L1113.2 552.2L1108.6 553.2L1103.9 554.1L1099.2 555L1094.3 555.8L1089.4 556.6L1084.4 557.2L1079.3 557.8L1074.2 558.3L1069.1 558.7L1063.9 559L1058.6 559.2L1053.4 559.4L1048.1 559.5L1042.9 559.5L1037.6 559.4L1032.4 559.2L1027.1 559L1021.9 558.7L1016.8 558.3L1011.7 557.8L1006.6 557.2L1001.6 556.6L996.7 555.8L991.8 555L987.1 554.1L982.4 553.2L977.8 552.2L973.3 551.1L969 549.9L964.7 548.7L960.6 547.4L956.7 546L952.8 544.6L949.2 543.1L945.6 541.6L942.2 540L939 538.4L936 536.7L933.1 534.9L930.4 533.2L927.9 531.3L925.6 529.5L923.5 527.6L921.5 525.7L919.8 523.7L918.2 521.7L916.9 519.7L915.7 517.7L914.8 515.7L914.1 513.6L913.5 511.6L913.2 509.5L913.1 507.4L913.2 505.4L913.5 503.3L914.1 501.2L914.8 499.2L915.7 497.1L916.9 495.1L918.2 493.1L919.8 491.1L921.5 489.2L923.5 487.3L925.6 485.4L927.9 483.5L930.4 481.7L933.1 479.9L936 478.2L939 476.5L942.2 474.8L945.6 473.3L949.2 471.7L952.8 470.2L956.7 468.8L960.6 467.5L964.7 466.2L969 464.9L973.3 463.8L977.8 462.7L982.4 461.7L987.1 460.7L991.8 459.8L996.7 459L1001.6 458.3L1006.6 457.7L1011.7 457.1L1016.8 456.6L1021.9 456.2L1027.1 455.9L1032.4 455.6L1037.6 455.4L1042.9 455.4L1048.1 455.4L1053.4 455.4L1058.6 455.6L1063.9 455.9L1069.1 456.2L1074.2 456.6L1079.3 457.1L1084.4 457.7L1089.4 458.3L1094.3 459L1099.2 459.8L1103.9 460.7L1108.6 461.7L1113.2 462.7L1117.7 463.8L1122 464.9L1126.3 466.2L1130.4 467.5L1134.3 468.8L1138.2 470.2L1141.8 471.7L1145.4 473.3L1148.8 474.8L1152 476.5L1155 478.2L1157.9 479.9L1160.6 481.7L1163.1 483.5L1165.4 485.4L1167.5 487.3L1169.5 489.2L1171.2 491.1L1172.8 493.1L1174.1 495.1L1175.3 497.1L1176.2 499.2L1176.9 501.2L1177.5 503.3L1177.8 505.4L1177.9 507.4M1185.8 507.8L1185.7 509.9L1185.4 511.9L1184.9 514L1184.2 516L1183.3 518.1L1182.3 520.1L1181 522.1L1179.6 524.1L1177.9 526L1176.1 528L1174.1 529.9L1171.9 531.7L1169.5 533.6L1167 535.4L1164.3 537.2L1161.4 538.9L1158.4 540.6L1155.2 542.2L1151.8 543.8L1148.3 545.3L1144.7 546.8L1140.9 548.3L1137 549.6L1133 551L1128.8 552.2L1124.5 553.4L1120.1 554.5L1115.6 555.6L1111.1 556.6L1106.4 557.5L1101.6 558.4L1096.8 559.2L1091.8 559.9L1086.9 560.5L1081.8 561.1L1076.7 561.6L1071.6 562L1066.4 562.4L1061.2 562.7L1056 562.8L1050.7 563L1045.5 563L1040.3 563L1035 562.8L1029.8 562.7L1024.6 562.4L1019.4 562L1014.3 561.6L1009.2 561.1L1004.1 560.5L999.2 559.9L994.2 559.2L989.4 558.4L984.6 557.5L979.9 556.6L975.4 555.6L970.9 554.5L966.5 553.4L962.2 552.2L958 551L954 549.6L950.1 548.3L946.3 546.8L942.7 545.3L939.2 543.8L935.8 542.2L932.6 540.6L929.6 538.9L926.7 537.2L924 535.4L921.5 533.6L919.1 531.7L916.9 529.9L914.9 528L913.1 526L911.4 524.1L910 522.1L908.7 520.1L907.7 518.1L906.8 516L906.1 514L905.6 511.9L905.3 509.9L905.2 507.8L905.3 505.7L905.6 503.7L906.1 501.6L906.8 499.6L907.7 497.5L908.7 495.5L910 493.5L911.4 491.5L913.1 489.6L914.9 487.6L916.9 485.7L919.1 483.8L921.5 482L924 480.2L926.7 478.4L929.6 476.7L932.6 475L935.8 473.4L939.2 471.8L942.7 470.2L946.3 468.7L950.1 467.3L954 465.9L958 464.6L962.2 463.4L966.5 462.2L970.9 461L975.4 460L979.9 459L984.6 458L989.4 457.2L994.2 456.4L999.2 455.7L1004.1 455L1009.2 454.5L1014.3 454L1019.4 453.5L1024.6 453.2L1029.8 452.9L1035 452.7L1040.3 452.6L1045.5 452.6L1050.7 452.6L1056 452.7L1061.2 452.9L1066.4 453.2L1071.6 453.5L1076.7 454L1081.8 454.5L1086.9 455L1091.8 455.7L1096.8 456.4L1101.6 457.2L1106.4 458L1111.1 459L1115.6 460L1120.1 461L1124.5 462.2L1128.8 463.4L1133 464.6L1137 465.9L1140.9 467.3L1144.7 468.7L1148.3 470.2L1151.8 471.8L1155.2 473.4L1158.4 475L1161.4 476.7L1164.3 478.4L1167 480.2L1169.5 482L1171.9 483.8L1174.1 485.7L1176.1 487.6L1177.9 489.6L1179.6 491.5L1181 493.5L1182.3 495.5L1183.3 497.5L1184.2 499.6L1184.9 501.6L1185.4 503.7L1185.7 505.7L1185.8 507.8M1193.7 508.2L1193.6 510.2L1193.3 512.3L1192.8 514.4L1192.2 516.4L1191.3 518.5L1190.3 520.5L1189.1 522.5L1187.7 524.5L1186.2 526.5L1184.4 528.4L1182.5 530.4L1180.4 532.3L1178.2 534.1L1175.7 536L1173.1 537.8L1170.4 539.5L1167.5 541.3L1164.4 543L1161.2 544.6L1157.9 546.2L1154.4 547.7L1150.7 549.2L1147 550.7L1143.1 552.1L1139 553.4L1134.9 554.7L1130.7 555.9L1126.3 557.1L1121.8 558.2L1117.3 559.2L1112.6 560.2L1107.9 561.1L1103.1 561.9L1098.2 562.7L1093.3 563.4L1088.3 564L1083.2 564.6L1078.1 565.1L1073 565.5L1067.8 565.8L1062.6 566.1L1057.3 566.3L1052.1 566.4L1046.8 566.5L1041.6 566.5L1036.3 566.4L1031.1 566.2L1025.8 566L1020.6 565.7L1015.5 565.3L1010.3 564.8L1005.3 564.3L1000.2 563.7L995.2 563L990.3 562.3L985.5 561.5L980.7 560.6L976 559.7L971.4 558.7L966.9 557.6L962.5 556.5L958.2 555.3L954 554L949.9 552.7L946 551.4L942.1 550L938.4 548.5L934.9 547L931.4 545.4L928.2 543.8L925 542.1L922 540.4L919.2 538.7L916.5 536.9L914 535.1L911.7 533.2L909.5 531.3L907.5 529.4L905.7 527.5L904 525.5L902.6 523.5L901.3 521.5L900.2 519.5L899.2 517.4L898.5 515.4L897.9 513.3L897.6 511.3L897.4 509.2L897.4 507.1L897.6 505.1L897.9 503L898.5 500.9L899.2 498.9L900.2 496.9L901.3 494.8L902.6 492.8L904 490.8L905.7 488.9L907.5 486.9L909.5 485L911.7 483.1L914 481.3L916.5 479.5L919.2 477.7L922 475.9L925 474.2L928.2 472.6L931.4 470.9L934.9 469.4L938.4 467.8L942.1 466.4L946 465L949.9 463.6L954 462.3L958.2 461L962.5 459.8L966.9 458.7L971.4 457.7L976 456.6L980.7 455.7L985.5 454.8L990.3 454L995.2 453.3L1000.2 452.6L1005.3 452L1010.3 451.5L1015.5 451L1020.6 450.7L1025.8 450.4L1031.1 450.1L1036.3 449.9L1041.6 449.9L1046.8 449.8L1052.1 449.9L1057.3 450L1062.6 450.2L1067.8 450.5L1073 450.8L1078.1 451.3L1083.2 451.8L1088.3 452.3L1093.3 453L1098.2 453.7L1103.1 454.4L1107.9 455.3L1112.6 456.2L1117.3 457.1L1121.8 458.2L1126.3 459.3L1130.7 460.4L1134.9 461.7L1139 462.9L1143.1 464.3L1147 465.7L1150.7 467.1L1154.4 468.6L1157.9 470.1L1161.2 471.7L1164.4 473.4L1167.5 475.1L1170.4 476.8L1173.1 478.6L1175.7 480.4L1178.2 482.2L1180.4 484.1L1182.5 486L1184.4 487.9L1186.2 489.8L1187.7 491.8L1189.1 493.8L1190.3 495.8L1191.3 497.9L1192.2 499.9L1192.8 502L1193.3 504L1193.6 506.1L1193.7 508.2M1202.6 508.6L1202.5 510.7L1202.2 512.8L1201.8 514.8L1201.2 516.9L1200.4 518.9L1199.4 521L1198.3 523L1197 525L1195.5 527L1193.9 528.9L1192.1 530.9L1190.1 532.8L1188 534.7L1185.7 536.5L1183.2 538.4L1180.6 540.2L1177.9 541.9L1175 543.6L1172 545.3L1168.8 547L1165.5 548.6L1162 550.1L1158.4 551.6M922.2 547L919 545.3L916 543.6L913.1 541.9L910.4 540.2L907.8 538.4L905.3 536.5L903 534.7L900.9 532.8L898.9 530.9L897.1 528.9L895.5 527L894 525L892.7 523L891.6 521L890.6 518.9L889.8 516.9L889.2 514.8L888.8 512.8L888.5 510.7L888.4 508.6L888.5 506.6L888.8 504.5L889.2 502.4L889.8 500.4L890.6 498.3L891.6 496.3L892.7 494.3L894 492.3L895.5 490.3L897.1 488.3L898.9 486.4L900.9 484.5L903 482.6L905.3 480.7L907.8 478.9L910.4 477.1L913.1 475.3L916 473.6L919 471.9L922.2 470.3L925.5 468.7M1150.9 462.7L1154.7 464.1L1158.4 465.6L1162 467.1L1165.5 468.7L1168.8 470.3L1172 471.9L1175 473.6L1177.9 475.3L1180.6 477.1L1183.2 478.9L1185.7 480.7L1188 482.6L1190.1 484.5L1192.1 486.4L1193.9 488.3L1195.5 490.3L1197 492.3L1198.3 494.3L1199.4 496.3L1200.4 498.3L1201.2 500.4L1201.8 502.4L1202.2 504.5L1202.5 506.6L1202.6 508.6M1211.4 509.1L1211.3 511.2L1211.1 513.2L1210.7 515.3L1210.1 517.3L1209.4 519.4L1208.5 521.4L1207.4 523.4L1206.2 525.4L1204.8 527.4L1203.2 529.4L1201.5 531.4L1199.7 533.3L1197.6 535.2L1195.5 537.1L1193.2 538.9L1190.7 540.8L1188.1 542.5L1185.3 544.3L1182.5 546L1179.4 547.7L1176.3 549.4L1173 551M910 546.9L907.1 545.2L904.3 543.4L901.6 541.7L899 539.8L896.7 538L894.4 536.1L892.3 534.3L890.4 532.3L888.6 530.4L887 528.4L885.5 526.4L884.2 524.4L883.1 522.4L882.1 520.4L881.2 518.4L880.6 516.3L880.1 514.3L879.8 512.2L879.6 510.1L879.6 508.1L879.8 506L880.1 503.9L880.6 501.9L881.2 499.8L882.1 497.8L883.1 495.8L884.2 493.8L885.5 491.8L887 489.8L888.6 487.8L890.4 485.9L892.3 484L894.4 482.1L896.7 480.2L899 478.4L901.6 476.6L904.3 474.8L907.1 473L910 471.3L913.1 469.7L916.4 468M1162.4 462.7L1166 464.2L1169.6 465.7L1173 467.2L1176.3 468.9L1179.4 470.5L1182.5 472.2L1185.3 473.9L1188.1 475.7L1190.7 477.5L1193.2 479.3L1195.5 481.1L1197.6 483L1199.7 484.9L1201.5 486.8L1203.2 488.8L1204.8 490.8L1206.2 492.8L1207.4 494.8L1208.5 496.8L1209.4 498.8L1210.1 500.9L1210.7 502.9L1211.1 505L1211.3 507L1211.4 509.1M1221.3 509.7L1221.2 511.7L1221 513.8L1220.6 515.9L1220 518L1219.3 520L1218.5 522.1L1217.5 524.1L1216.3 526.1L1215 528.1L1213.5 530.1L1211.9 532.1L1210.1 534L1208.2 536L1206.1 537.9L1203.9 539.8L1201.5 541.6L1199 543.4L1196.4 545.2L1193.6 547L1190.8 548.7L1187.7 550.4M897.4 547L894.6 545.2L892 543.4L889.5 541.6L887.1 539.8L884.9 537.9L882.8 536L880.9 534L879.1 532.1M879.1 487.3L880.9 485.3L882.8 483.4L884.9 481.5L887.1 479.6L889.5 477.7L892 475.9L894.6 474.1L897.4 472.4L900.2 470.6L903.3 468.9M1174.4 462.5L1177.9 464.1L1181.3 465.6L1184.6 467.3L1187.7 468.9L1190.8 470.6L1193.6 472.4L1196.4 474.1L1199 475.9L1201.5 477.7L1203.9 479.6L1206.1 481.5L1208.2 483.4L1210.1 485.3L1211.9 487.3L1213.5 489.2L1215 491.2L1216.3 493.2L1217.5 495.3L1218.5 497.3L1219.3 499.3L1220 501.4L1220.6 503.5L1221 505.5L1221.2 507.6L1221.3 509.7M1231.1 510.3L1231 512.3L1230.8 514.4L1230.4 516.5L1229.9 518.5L1229.2 520.6L1228.4 522.6L1227.4 524.7L1226.3 526.7L1225.1 528.7L1223.7 530.7L1222.2 532.7L1220.5 534.7L1218.7 536.6L1216.7 538.5L1214.6 540.4L1212.4 542.3L1210 544.2L1207.5 546L1204.9 547.8L1202.1 549.5L1199.3 551.3M886.1 547.8L883.5 546L881 544.2L878.6 542.3M878.6 478.2L881 476.4L883.5 474.6L886.1 472.8L888.9 471L891.7 469.3M1186.5 462.7L1189.9 464.3L1193.1 465.9L1196.3 467.6L1199.3 469.3L1202.1 471L1204.9 472.8L1207.5 474.6L1210 476.4L1212.4 478.2L1214.6 480.1L1216.7 482L1218.7 483.9L1220.5 485.9L1222.2 487.8L1223.7 489.8L1225.1 491.8L1226.3 493.8L1227.4 495.9L1228.4 497.9L1229.2 499.9L1229.9 502L1230.4 504.1L1230.8 506.1L1231 508.2L1231.1 510.3M1241.8 511L1241.8 513L1241.6 515.1L1241.2 517.2L1240.7 519.2L1240.1 521.3L1239.3 523.3L1238.4 525.4L1237.4 527.4L1236.2 529.4L1234.9 531.4L1233.4 533.4L1231.8 535.4L1230.1 537.4L1228.3 539.3L1226.3 541.2L1224.2 543.1L1221.9 545L1219.5 546.9L1217.1 548.7L1214.4 550.5M1199.6 462.9L1202.8 464.6L1205.9 466.2L1208.8 467.9L1211.7 469.7L1214.4 471.4L1217.1 473.2L1219.5 475.1L1221.9 476.9L1224.2 478.8L1226.3 480.7L1228.3 482.6L1230.1 484.6L1231.8 486.5L1233.4 488.5L1234.9 490.5L1236.2 492.5L1237.4 494.5L1238.4 496.5L1239.3 498.6L1240.1 500.6L1240.7 502.7L1241.2 504.8L1241.6 506.8L1241.8 508.9L1241.8 511M1254.6 511.8L1254.6 513.9L1254.4 516L1254 518.1L1253.6 520.1L1253 522.2L1252.3 524.3L1251.4 526.3L1250.4 528.3L1249.3 530.4L1248.1 532.4L1246.7 534.4L1245.2 536.4L1243.6 538.4L1241.8 540.3L1239.9 542.3L1237.9 544.2L1235.8 546.1L1233.6 548L1231.2 549.8L1228.8 551.7M1214.7 463.3L1217.7 464.9L1220.6 466.7L1223.5 468.4L1226.2 470.2L1228.8 472L1231.2 473.8L1233.6 475.7L1235.8 477.6L1237.9 479.5L1239.9 481.4L1241.8 483.3L1243.6 485.3L1245.2 487.3L1246.7 489.3L1248.1 491.3L1249.3 493.3L1250.4 495.3L1251.4 497.4L1252.3 499.4L1253 501.5L1253.6 503.5L1254 505.6L1254.4 507.7L1254.6 509.8L1254.6 511.8M1259.8 535.3L1258.4 537.3L1256.9 539.3L1255.2 541.2L1253.5 543.2L1251.6 545.1L1249.6 547.1L1247.5 549L1245.3 550.8M1226.7 462.2L1229.7 463.9L1232.6 465.6L1235.3 467.4L1238 469.2L1240.5 471L1243 472.8L1245.3 474.7L1247.5 476.6L1249.6 478.5L1251.6 480.4L1253.5 482.3L1255.2 484.3L1256.9 486.2L1258.4 488.2L1259.8 490.2M1241.3 462.8L1244.1 464.5L1246.8 466.3L1249.4 468.1L1252 469.9L1254.4 471.7L1256.7 473.6L1258.9 475.5"/><path stroke="#d62818" stroke-width="1.4" opacity="0.7" d="M1000 402L1000 407M1000 412.6L1000 417.6M1000 424.3L1000 429.3M1000 435L1000 440M1000 444.7L1000 449.7M1073 605.8L1073 611.8M1073 624.4L1073 630.4M1073 653L1073 659M1073 693.2L1073 699.2"/><path stroke="#d62818" stroke-width="1.4" opacity="0.8" d="M1000 391L1070 391M1000 396L1070 396M1000 407L1070 407"/><path stroke="#d62818" stroke-width="1.5" opacity="0.85" d="M975 385L1070 385M958 402L1070 402M958 412.6L1072 412.6M959 418.4L1072 418.4M960 424.3L1073 424.3M962 429L1075 429M964 435L1077 435M966 440L1078 440M967 444.7L1080 444.7M970 449.6L1082 449.6M972 454.4L1084 454.4M975 459.3L1086 459.3M978 464L1088 464M1080 566L1130 556L1190 542L1240 526M1080 575L1130 563.5L1190 549L1240 533M1080 584L1130 571L1190 556L1240 540M1080 593L1130 578.5L1190 563L1240 547M1080 602L1130 586L1190 570L1240 554M1080 611L1130 593.5L1190 577L1240 561"/><path stroke="#d62818" stroke-width="1.6" opacity="0.85" d="M902 845L929 846M1079 768L1100 768M1079 699L1092 699M635.8 506.1h.1M642 505.7h.1M654.2 505.9h.1M677.8 506h.1M699 505.8h.1M720.1 505.9h.1M731.9 505.9h.1M737.9 505.7h.1M740.8 505.9h.1M753 505.8h.1M759.3 506h.1M777 505.9h.1M795.1 506.2h.1M818.9 506h.1M870.3 506.2h.1M879.1 506.1h.1M644.9 509.3h.1M657.2 509.1h.1M677.8 509.2h.1M680.8 508.9h.1M686.8 509.1h.1M693 509.5h.1M704.9 508.9h.1M708.1 509.1h.1M728.8 509.2h.1M731.8 509.1h.1M744.1 509.3h.1M756.1 509.3h.1M758.8 509.1h.1M771.1 509.1h.1M783.1 509.3h.1M795 509.2h.1M842.9 509.2h.1M855.1 509.1h.1M867 509.1h.1M635.9 512.3h.1M642.2 512.2h.1M648.2 512.1h.1M657.3 512.2h.1M665.7 512.6h.1M671.9 512.2h.1M675.1 512.2h.1M678 512.3h.1M687.2 512.4h.1M690.3 512.5h.1M696.1 512.7h.1M707.8 512.6h.1M720.3 512.2h.1M726.3 512.7h.1M729.3 512.5h.1M731.9 512.3h.1M744.2 512.4h.1M746.9 512.7h.1M753.2 512.1h.1M761.9 512.5h.1M768.3 512.1h.1M780.1 512.3h.1M783.2 512.1h.1M785.8 512.1h.1M803.8 512.6h.1M806.9 512.5h.1M827.9 512.2h.1M840.1 512.5h.1M842.8 512.2h.1M846.1 512.2h.1M849.1 512.2h.1M852.2 512.4h.1M860.9 512.7h.1M869.8 512.5h.1M876.2 512.4h.1M641.7 515.9h.1M666.1 515.5h.1M678 515.4h.1M699.3 515.8h.1M702.3 515.3h.1M704.8 515.8h.1M710.9 515.6h.1M720 515.7h.1M726.3 515.7h.1M732.2 515.6h.1M734.7 515.8h.1M740.7 515.3h.1M746.8 515.7h.1M749.9 515.4h.1M753.1 515.7h.1M762.2 515.5h.1M765.1 515.6h.1M777 515.9h.1M782.8 515.5h.1M792 515.4h.1M798.2 515.7h.1M804.1 515.9h.1M806.7 515.5h.1M810.3 515.7h.1M822.1 515.6h.1M830.8 515.3h.1M848.8 515.4h.1M854.9 515.4h.1M857.8 515.5h.1M867.1 515.3h.1M872.8 515.8h.1M875.8 515.3h.1M635.8 518.9h.1M642.2 518.9h.1M644.9 519h.1M647.7 518.6h.1M653.9 519h.1M659.9 518.7h.1M663.1 518.9h.1M666.2 518.8h.1M669.2 518.6h.1M672.1 519h.1M680.8 519.1h.1M686.8 518.9h.1M689.9 518.5h.1M695.8 518.9h.1M708.1 518.8h.1M714.1 518.7h.1M723.1 519h.1M743.7 518.7h.1M755.8 519h.1M762 518.8h.1M770.9 518.8h.1M773.9 519h.1M776.9 518.8h.1M780.1 518.7h.1M792.2 518.9h.1M795.3 518.9h.1M813.2 518.8h.1M815.8 518.8h.1M818.8 518.8h.1M828 519.1h.1M837 519h.1M848.9 519h.1M855.2 518.7h.1M863.9 518.5h.1M879.2 518.6h.1M887.9 518.8h.1M636.1 522.3h.1M642.3 522h.1M650.8 521.7h.1M653.8 522.3h.1M660.1 521.8h.1M666.1 522.1h.1M672.3 522.1h.1M675.1 522.2h.1M680.7 521.9h.1M687.1 522.1h.1M696.2 521.9h.1M702.1 521.9h.1M704.9 522.1h.1M708.2 521.9h.1M720.1 522.2h.1M723 522.2h.1M726.3 521.8h.1M729 521.8h.1M732.2 522h.1M735.2 521.8h.1M738.2 522h.1M740.8 521.8h.1M743.9 522h.1M753.1 521.9h.1M767.7 521.8h.1M774.3 522.2h.1M782.9 522h.1M791.7 521.9h.1M804.3 521.7h.1M807.3 522.1h.1M810.2 521.8h.1M812.8 522h.1M815.8 522.1h.1M828.1 522h.1M831 522.1h.1M833.7 522.1h.1M837.2 521.9h.1M839.9 522.2h.1M848.8 522h.1M860.9 522.2h.1M863.9 522.3h.1M866.9 521.8h.1M870 521.8h.1M876 521.8h.1M879.1 521.8h.1M882.1 522h.1M636.2 525.4h.1M641.8 525.4h.1M644.9 525.3h.1M648 525.2h.1M651.2 525.4h.1M653.9 525.4h.1M657.3 525.2h.1M662.8 525h.1M668.7 525.3h.1M674.7 525h.1M677.9 525h.1M681.1 525.4h.1M690 525.4h.1M693.3 525.4h.1M705 525.3h.1M707.7 525.2h.1M720.1 525.1h.1M723 525.5h.1M728.9 525.3h.1M732.3 525.2h.1M735 525h.1M737.9 525.1h.1M744 525.3h.1M747 525.2h.1M749.9 525h.1M752.9 525.3h.1M756.2 525h.1M758.9 525.5h.1M764.7 525.1h.1M770.8 525.1h.1M786 525.5h.1M789.2 525.4h.1M794.9 525.2h.1M798.2 525.4h.1M800.8 525.1h.1M810 525.4h.1M816 525.5h.1M819.1 525.1h.1M821.9 525.5h.1M824.8 525.1h.1M834 525.4h.1M837.3 525.4h.1M846 525h.1M849 525h.1M858.1 524.9h.1M861.1 525.3h.1M864 525.1h.1M867.3 525.2h.1M869.8 525.4h.1M876.2 524.9h.1M878.9 525.3h.1M884.9 525.2h.1M891.1 525h.1"/><path stroke="#d62818" stroke-width="1.6" opacity="0.9" d="M978 540L1073 540M977 544.4L1073 544.4M976 548.7L1074 548.7M975 553.8L1074 553.8M974 558.7L1075 558.7M973 564.5L1075 564.5M972 571L1075 571M971 578.2L1076 578.2M970 586.5L1076 586.5M968 596.9L1077 596.9M966 611.8L1077 611.8M962 630.4L1078 630.4M958 659L1078 659M964 699.2L1079 699.2M956 768L1079 768"/><path stroke="#d62818" stroke-width="1.8" opacity="0.9" d="M1250 481L1272 518L1265 560M1273 481L1298 513L1281 524L1285 560M1298 478L1328 507L1308 524L1300 540M1330 473L1363 499L1332 520L1324 538M1375 468L1402 485L1382 501L1352 516M1441 473L1430 490L1394 508L1330 530L1300 548M1160 478L1185 500L1205 520M1185 470L1215 488L1238 508L1232 530M1210 466L1240 480L1258 500"/><path stroke="#d62818" stroke-width="2" opacity="0.85" d="M635 510L668 494M660 533L718 492M700 533L760 490M745 532L808 488M790 530L850 487M835 528L890 489M636 482L690 470"/><path stroke="#d62818" stroke-width="2" opacity="0.9" d="M1096 459.3h.1M1094.2 459.8h.1M1090.3 457.3h.1"/><path stroke="#d62818" stroke-width="2" opacity="0.95" d="M1141.4 659.5h.1M1140.6 662h.1M1139.8 664.4h.1M1139 666.9h.1M1138.1 669.3h.1M1137.3 671.8h.1M1136.5 674.3h.1M1135.7 676.7h.1M1134.8 679.2h.1M1134 681.7h.1M1133.2 684.1h.1M1132.4 686.6h.1M1131.5 689.1h.1M1130.7 691.5h.1M1129.9 694h.1M1148.4 695.4h.1M1147.6 697.9h.1M1146.9 700.3h.1"/><path stroke="#d62818" stroke-width="2" d="M1101.8 465.8h.1M1087.6 464.9h.1M1126.6 463.1h.1M1135.7 471.5h.1M1108.2 460.7h.1M1106.8 460.6h.1M1090.1 462h.1M1104.5 462.3h.1M1132.3 473.4h.1"/><path stroke="#d62818" stroke-width="2.2" d="M943.2 818.8h.1M943 821.8h.1M942.8 824.8h.1M942.6 827.8h.1M942.4 830.8h.1M942.2 833.8h.1M942 836.8h.1M941.9 839.8h.1M941.7 842.8h.1M941.5 845.8h.1M941.3 848.7h.1M941.1 851.7h.1M940.9 854.7h.1M940.7 857.7h.1M940.5 860.7h.1M940.3 863.7h.1M940.1 866.7h.1M939.9 869.7h.1M939.7 872.7h.1M939.5 875.7h.1M939.3 878.7h.1M939.1 881.7h.1"/><path stroke="#da3317" stroke-width="1.6" opacity="0.7" d="M750.9 484h.1M761 484.3h.1M870.9 484.2h.1M876.1 484h.1M765.8 489.2h.1M771.2 488.9h.1M781 489h.1M791 489.1h.1M801 489.2h.1M816.3 489.1h.1M836.2 488.7h.1M846.1 488.8h.1"/><path stroke="#da3317" stroke-width="1.6" opacity="0.8" d="M1073 540h.1M1073.1 543.5h.1M1073.3 547h.1M1073.4 550.5h.1M1073.5 554h.1M1073.7 557.5h.1M1073.8 561h.1M1073.9 564.5h.1M1074.1 568h.1M1074.2 571.5h.1M1074.3 575h.1M1074.5 578.5h.1M1074.6 582h.1M1074.7 585.5h.1M1074.9 589h.1M1075 592.5h.1M1075.1 596h.1M1075.3 599.5h.1M1075.4 603h.1M1075.5 606.5h.1M1075.7 609.9h.1M1075.8 613.4h.1M1075.9 616.9h.1M1076.1 620.4h.1M1076.2 623.9h.1M1076.3 627.4h.1M1076.5 630.9h.1M1076.6 634.4h.1M1076.7 637.9h.1M1076.9 641.4h.1M1077 644.9h.1M1077.1 648.4h.1M1077.3 651.9h.1M1077.4 655.4h.1M1077.5 658.9h.1M1077.6 662.4h.1M1077.8 665.9h.1M1077.9 669.4h.1M1078 672.9h.1M1078.2 676.4h.1M1078.3 679.9h.1M1078.4 683.4h.1M1078.6 686.9h.1M1078.7 690.4h.1M1078.8 693.9h.1M1079 697.4h.1M1079.1 700.9h.1M1079.2 704.4h.1M1079.3 707.9h.1M1079.4 711.4h.1M1079.5 714.9h.1M1079.7 718.4h.1M1079.8 721.9h.1M1079.9 725.4h.1M1080 728.9h.1M1080.1 732.4h.1M1080.2 735.9h.1M1080.3 739.4h.1M1080.4 742.9h.1M1080.6 746.4h.1M1080.7 749.9h.1M1080.8 753.4h.1M1080.9 756.9h.1"/><path stroke="#da3317" stroke-width="1.6" opacity="0.85" d="M638.9 505.7h.1M645.2 505.8h.1M648.3 506h.1M656.9 506.2h.1M660.1 505.9h.1M665.9 506.1h.1M669.2 506.1h.1M675.3 505.8h.1M684.1 506.1h.1M687.2 506.3h.1M689.7 506.1h.1M702.2 505.8h.1M705.2 505.7h.1M716.8 505.8h.1M734.7 505.7h.1M744.1 505.8h.1M755.9 506.2h.1M765.1 505.9h.1M788.8 505.8h.1M800.8 506.2h.1M804.3 505.9h.1M809.8 505.8h.1M822.3 506.1h.1M828.2 506.2h.1M830.9 505.8h.1M840.3 506h.1M842.7 506h.1M846.2 505.8h.1M849 505.9h.1M852.2 505.8h.1M854.9 506.2h.1M858.2 506.2h.1M867.2 506.3h.1M873 505.7h.1M642 509.2h.1M648 508.9h.1M654.3 509h.1M660.2 509.4h.1M663.3 509.2h.1M665.7 509.3h.1M683.9 509.4h.1M689.7 509.3h.1M702.2 509.3h.1M711.2 509.4h.1M713.8 509.1h.1M722.8 509.5h.1M725.7 509.1h.1M734.9 509h.1M738.2 509.3h.1M747.2 509.3h.1M749.8 509.2h.1M753.2 509.4h.1M762 509.3h.1M768 509.2h.1M774.1 509h.1M779.9 509.2h.1M785.9 509.3h.1M788.7 508.9h.1M792.1 509.3h.1M807 509h.1M815.8 509.4h.1M818.7 509.2h.1M821.8 509.1h.1M833.9 509.2h.1M836.8 509.4h.1M849.2 509.5h.1M851.7 509.3h.1M861 509.1h.1M864.3 509.1h.1M869.8 509.4h.1M873.2 509.5h.1M875.8 509h.1M878.8 509.1h.1M882.1 509.1h.1M639.3 512.2h.1M651.2 512.4h.1M653.9 512.7h.1M663.1 512.6h.1M680.7 512.3h.1M693 512.5h.1M698.9 512.4h.1M702.2 512.5h.1M705.3 512.3h.1M713.8 512.2h.1M717.3 512.2h.1M734.7 512.3h.1M741.3 512.2h.1M750.2 512.1h.1M756.3 512.3h.1M771.3 512.7h.1M777.2 512.5h.1M794.8 512.2h.1M798 512.2h.1M815.8 512.6h.1M854.9 512.4h.1M857.8 512.5h.1M873.2 512.4h.1M882.1 512.3h.1M648.2 515.4h.1M650.9 515.8h.1M653.8 515.5h.1M656.8 515.4h.1M659.7 515.6h.1M663.2 515.4h.1M669 515.7h.1M671.7 515.7h.1M675.2 515.8h.1M680.8 515.6h.1M684.1 515.3h.1M687 515.3h.1M690.3 515.4h.1M707.8 515.6h.1M717.2 515.4h.1M723 515.6h.1M728.9 515.9h.1M738.3 515.7h.1M744 515.6h.1M758.8 515.4h.1M768 515.9h.1M771.2 515.3h.1M773.8 515.3h.1M780.1 515.6h.1M786.2 515.8h.1M789.2 515.7h.1M794.7 515.5h.1M801 515.8h.1M812.9 515.4h.1M819.2 515.7h.1M825.1 515.3h.1M834.1 515.7h.1M837.1 515.5h.1M840.2 515.3h.1M852.2 515.7h.1M860.9 515.5h.1M863.9 515.9h.1M870.2 515.5h.1M879.3 515.3h.1M882.2 515.4h.1M639.1 518.5h.1M657 519h.1M674.8 518.7h.1M677.9 518.6h.1M684.3 519h.1M693.1 518.8h.1M699.2 518.8h.1M702 518.6h.1M705.2 518.9h.1M710.8 518.8h.1M717.1 518.7h.1M726.3 518.5h.1M729.2 519.1h.1M732 518.8h.1M735.1 519h.1M738.3 518.6h.1M741.2 518.6h.1M747 518.8h.1M749.9 518.6h.1M758.8 519h.1M768.1 519h.1M783 518.8h.1M785.9 519.1h.1M789.2 519h.1M797.8 518.6h.1M800.8 519h.1M804.2 518.9h.1M807.2 519h.1M810.1 518.8h.1M822.2 518.5h.1M825 518.9h.1M831.1 518.5h.1M834.3 518.7h.1M840.1 518.7h.1M843 518.8h.1M846 518.8h.1M851.9 518.8h.1M858.1 518.9h.1M861.1 519h.1M870.1 519h.1M873.1 518.9h.1M876.1 518.6h.1M882.2 519h.1M885.2 519h.1M638.7 521.8h.1M645.1 522.3h.1M647.9 521.8h.1M656.8 521.7h.1M663.1 522.2h.1M678.1 521.8h.1M684.1 521.8h.1M690.2 522.3h.1M692.9 521.7h.1M711 522.1h.1M713.7 522.2h.1M717 521.9h.1M746.8 521.7h.1M749.8 522.1h.1M755.7 522.3h.1M759 521.9h.1M762.3 522.2h.1M770.7 522h.1M776.9 521.8h.1M780 522.1h.1M800.7 522.2h.1M818.8 521.7h.1M822.3 522.2h.1M825 521.8h.1M843 521.9h.1M846.3 521.7h.1M851.8 521.9h.1M885.1 522.1h.1M887.8 521.7h.1M891.1 521.7h.1M639.2 525.2h.1M660 524.9h.1M665.7 525h.1M672.1 525h.1M684.1 525h.1M695.9 525.2h.1M699.2 525.4h.1M702 525.5h.1M710.8 525.5h.1M717.2 525.4h.1M726 525.2h.1M740.8 525.2h.1M761.8 524.9h.1M767.8 525h.1M774.1 525.4h.1M777.1 525.3h.1M780.2 525.3h.1M783.2 524.9h.1M792 525.2h.1M804 525h.1M807.2 525.4h.1M813 525.2h.1M828 525.4h.1M831 525.3h.1M840.2 525.3h.1M852.1 525.1h.1M854.7 525.1h.1M872.8 525.2h.1M881.9 525h.1M888.2 525.2h.1M889 404.7h.1M895.5 405h.1M905.1 405.2h.1M907.9 405.2h.1M911.7 404.9h.1M918 404.9h.1M927.4 404.7h.1M934 404.9h.1M937 405.2h.1M946.7 405.1h.1M949.9 405.2h.1"/><path stroke="#da3317" stroke-width="2" opacity="0.8" d="M953.3 674.9h.1M952.8 677.8h.1M952.2 680.8h.1M951.7 683.7h.1M951.2 686.7h.1M950.7 689.6h.1M950.1 692.6h.1M949.6 695.6h.1M949.1 698.5h.1M948.5 701.5h.1M948 704.4h.1M947.5 707.4h.1"/><path stroke="#da3317" stroke-width="2" opacity="0.85" d="M1197.5 800.6h.1M1198.4 809.6h.1M1199.3 818.5h.1M1200.2 827.5h.1M1201.1 836.4h.1M1202 845.4h.1M1202.9 854.4h.1M1203.8 863.3h.1M1228.1 811.8h.1M1229.1 820.8h.1M1230.2 829.7h.1M1231.3 838.6h.1M1232.3 847.6h.1M1233.4 856.5h.1M1251.7 739.8h.1M1253.6 748.6h.1M1177.1 812.1h.1M1177.6 821.1h.1M1178.2 830.1h.1M1178.7 839.1h.1M1179.2 848.1h.1M1179.8 857.1h.1"/><path stroke="#da3317" stroke-width="2" opacity="0.9" d="M1090.4 462.1h.1M1097.4 461.8h.1M1091.1 456.2h.1M1089.5 454.8h.1M1099.8 452.4h.1M1100.4 455.9h.1M1091.2 462.3h.1M1091.4 456.2h.1M1099.9 458.8h.1M1090.5 456.9h.1M1089.9 461.7h.1M1089.5 444.1h.1M1090.4 450h.1M1099.6 455.3h.1M1096.8 461.1h.1"/><path stroke="#da3317" stroke-width="2" opacity="0.95" d="M1146.4 620.8h.1M1146.1 623.4h.1M1145.8 626h.1M1145.5 628.6h.1M1145.1 631.2h.1M1144.8 633.7h.1M1144.5 636.3h.1M1144.2 638.9h.1M1143.9 641.5h.1M1143.6 644.1h.1M1143.3 646.6h.1M1143 649.2h.1M1142.7 651.8h.1M1142.4 654.4h.1M1142.1 657h.1M1162.4 626.9h.1M1162.2 629.5h.1M1161.9 632.1h.1M1161.6 634.7h.1M1161.3 637.2h.1M1161.1 639.8h.1M1160.8 642.4h.1M1160.5 645h.1M1160.2 647.6h.1M1159.9 650.2h.1M1159.7 652.7h.1M1159.4 655.3h.1M1159.1 657.9h.1M1158.8 660.5h.1M1158.1 663h.1M1157.3 665.5h.1M1156.6 668h.1M1155.9 670.5h.1M1155.1 673h.1M1154.4 675.4h.1M1153.6 677.9h.1M1152.9 680.4h.1M1152.1 682.9h.1M1151.4 685.4h.1M1150.6 687.9h.1M1149.9 690.4h.1M1149.1 692.9h.1M1169 690.1h.1M1168.3 692.6h.1M1167.7 695.1h.1M1167 697.6h.1M1166.4 700.2h.1M1165.7 702.7h.1M1165.1 705.2h.1M1164.4 707.7h.1M1163.8 710.2h.1"/><path stroke="#da3317" stroke-width="2" d="M1129.9 464.8h.1M1123.7 465.1h.1M1096.9 465.6h.1M1094.7 475.4h.1M1124.3 473.6h.1M1089.5 468.7h.1M1112.7 467.2h.1M1094 465.1h.1M1085.8 472.3h.1M1093.6 465.5h.1M1127.9 473.2h.1M1102.3 475.6h.1M1105.7 469.8h.1M1126.6 471.2h.1M1100.8 472.8h.1M1093.1 461.9h.1M1116.6 464.5h.1M1101.7 471.4h.1M1102.4 475.1h.1M1108.7 465h.1M1116.1 473.1h.1M1102.7 466h.1M1133.1 468.7h.1M1100.6 473.8h.1M1127.1 461.6h.1M1248.3 838.9h.1M1229.1 791.2h.1M1255.2 838h.1M1278.2 762.7h.1M1267 781.1h.1"/><path stroke="#da3317" stroke-width="2.2" d="M957.2 681.7h.1M956.6 684.7h.1M956.1 687.6h.1M955.6 690.6h.1M955.1 693.5h.1M954.6 696.5h.1M954.1 699.4h.1M953.6 702.4h.1M953.1 705.3h.1M952.6 708.3h.1M952.1 711.3h.1M951.5 714.2h.1M951 717.2h.1M950.5 720.1h.1M950 723.1h.1M949.5 726h.1M949 729h.1M948.8 732h.1M948.6 735h.1M948.4 738h.1M948.2 741h.1M948 744h.1M947.8 747h.1M947.6 750h.1M947.5 752.9h.1M947.3 755.9h.1M947.1 758.9h.1M946.9 761.9h.1M946.7 764.9h.1M946.5 767.9h.1M946.3 770.9h.1M946.1 773.9h.1M945.9 776.9h.1M945.7 779.9h.1M945.5 782.9h.1M945.3 785.9h.1M945.1 788.9h.1M944.9 791.9h.1M944.8 794.9h.1M944.6 797.9h.1M944.4 800.8h.1M944.2 803.8h.1M944 806.8h.1M943.8 809.8h.1M943.6 812.8h.1M943.4 815.8h.1"/><path stroke="#de3e17" stroke-width="1.5" opacity="0.75" d="M640 481.9h.1M650.1 481.9h.1M654.6 481.1h.1M660.7 481h.1M666.1 480.6h.1M676 480.5h.1M687.7 481.4h.1"/><path stroke="#de3e17" stroke-width="1.6" opacity="0.7" d="M746.2 474.1h.1M750.9 478.9h.1M765.9 479h.1M786 479h.1M810.8 478.8h.1M840.8 479.2h.1M766 483.8h.1M781.1 484h.1M795.9 484h.1M800.8 483.8h.1M846.1 484.1h.1M831.3 489h.1"/><path stroke="#de3e17" stroke-width="1.6" opacity="0.85" d="M662.7 505.8h.1M672 506.2h.1M681.2 506h.1M695.9 505.9h.1M708.2 506.2h.1M710.9 505.9h.1M722.9 506h.1M726 506.1h.1M729.2 506.2h.1M746.9 505.8h.1M761.7 506h.1M768.2 506h.1M770.8 506.2h.1M774.2 506.2h.1M779.9 505.9h.1M786.3 506.3h.1M792.1 506.2h.1M798.2 506.2h.1M815.8 506.2h.1M834 505.8h.1M837 506.1h.1M861 506h.1M864 506h.1M876.1 506.2h.1M636.3 509h.1M639 509.5h.1M651 508.9h.1M669.3 509.3h.1M672.2 508.9h.1M674.9 509.2h.1M696 509.2h.1M699 509.3h.1M717 509.1h.1M740.9 509.1h.1M765 508.9h.1M797.8 509.5h.1M801 509.4h.1M803.9 509h.1M813.2 509.2h.1M824.7 509.4h.1M828.3 509.3h.1M830.9 509.1h.1M846.3 509.4h.1M644.9 512.4h.1M660 512.5h.1M722.9 512.6h.1M758.9 512.3h.1M764.7 512.6h.1M774 512.4h.1M788.9 512.7h.1M801.1 512.5h.1M809.8 512.2h.1M812.9 512.3h.1M822 512.6h.1M834.3 512.3h.1M836.9 512.6h.1M863.9 512.3h.1M879 512.5h.1M884.9 512.4h.1M636 515.8h.1M638.8 515.9h.1M696.2 515.4h.1M713.8 515.4h.1M756 515.4h.1M816.1 515.7h.1M827.7 515.4h.1M885.2 515.5h.1M904.8 399.2h.1M914.5 398.8h.1M930.5 399.2h.1M956.1 398.8h.1M901.9 401.9h.1M937.3 402.2h.1M943.2 402h.1M898.5 405.2h.1M901.6 404.9h.1M924.5 404.8h.1M940.5 405.2h.1M943.5 405h.1M953.3 404.7h.1M956.2 405h.1"/><path stroke="#de3e17" stroke-width="2" opacity="0.8" d="M963.5 603.6h.1M963.1 606.6h.1M962.7 609.6h.1M962.3 612.5h.1M961.9 615.5h.1M961.4 618.5h.1M961 621.4h.1M960.6 624.4h.1M960.2 627.4h.1M959.8 630.3h.1M959.3 633.3h.1M958.9 636.3h.1M958.5 639.3h.1M958.1 642.2h.1M957.7 645.2h.1M957.2 648.2h.1M956.8 651.1h.1M956.4 654.1h.1M956 657.1h.1M955.5 660.1h.1M955.1 663h.1M954.7 666h.1M954.3 669h.1M953.8 671.9h.1"/><path stroke="#de3e17" stroke-width="2" opacity="0.85" d="M1190.3 729h.1M1191.2 737.9h.1M1192.1 746.9h.1M1193 755.8h.1M1193.9 764.8h.1M1194.8 773.8h.1M1195.7 782.7h.1M1196.6 791.7h.1M1220.7 749.3h.1M1221.8 758.2h.1M1222.8 767.1h.1M1223.9 776.1h.1M1224.9 785h.1M1226 793.9h.1M1227 802.9h.1M1247.8 722.2h.1M1249.7 731h.1M1173.4 749.3h.1M1174 758.2h.1M1174.5 767.2h.1M1175 776.2h.1M1175.5 785.2h.1M1176.1 794.2h.1M1176.6 803.2h.1M742 479.6h.1M742 481.8h.1M760 479.6h.1M760 481.8h.1M778 479.6h.1M778 481.8h.1M800 479.6h.1M800 481.8h.1M822 479.6h.1M822 481.8h.1M845 479.6h.1M845 481.8h.1M866 479.6h.1M866 481.8h.1M961.3 630.8h.1M960.2 635.8h.1M955.9 667.4h.1M964.5 640.9h.1M959.2 642.3h.1M959.3 644.5h.1M960.1 648h.1M958.4 669.7h.1M965.2 634.3h.1M966.2 636.6h.1M959 674.6h.1M957.5 656.9h.1M966.6 629.7h.1M959.4 652.9h.1M963.7 638.5h.1M960.3 634.1h.1M959.8 667.3h.1M959 668.8h.1M965.6 637.6h.1M962 649.5h.1M964 646h.1M958.3 650.7h.1M959.3 649.5h.1M957.9 666.6h.1M958.5 663.1h.1M961.6 664.8h.1M960.6 662.9h.1M964.4 628h.1"/><path stroke="#de3e17" stroke-width="2" opacity="0.9" d="M1107 606L1212 591M1212 591L1265 578M1265 578L1330 560M1089.7 437.2h.1M1095.7 447.3h.1M1089.2 434.5h.1M1092.8 433.7h.1M1095.5 434.7h.1M1100 453.3h.1M1094.7 458.2h.1M1093.5 441.6h.1M1096.9 441.6h.1M1095.2 428.8h.1M1095.3 460.3h.1M1088.5 449.5h.1M1089.2 439.1h.1M1093.6 453.3h.1M1097.9 451.4h.1M1088.4 447h.1M1091.7 456h.1M1089.1 435.8h.1M1099 461.6h.1M1091.8 462h.1M1088.8 428h.1M1087.7 437.6h.1M1093.7 431.2h.1M1096.2 446.3h.1M1092.7 423h.1M1090.1 440.2h.1M1090 434.6h.1M1092.1 444.3h.1M1100.5 458.5h.1M1090 430.7h.1M1096.1 442.6h.1M1092.6 443.8h.1M959.8 650.2h.1M959.5 652.8h.1M959.1 655.3h.1M958.8 657.9h.1M958.4 660.5h.1M958.1 663.1h.1M957.7 665.6h.1M957.4 668.2h.1M957 670.8h.1M956.5 673.3h.1M956 675.9h.1M955.5 678.4h.1M954.9 681h.1M954.4 683.5h.1M953.9 686.1h.1M953.4 688.6h.1M952.8 691.2h.1M952.3 693.7h.1M951.8 696.3h.1M951.2 698.8h.1"/><path stroke="#de3e17" stroke-width="2" opacity="0.95" d="M1163.3 619.1h.1M1163 621.7h.1M1162.7 624.3h.1M1177.8 641.7h.1M1177.5 644.2h.1M1177.3 646.8h.1M1177.1 649.4h.1M1176.8 652h.1M1176.6 654.6h.1M1176.4 657.2h.1M1176.1 659.8h.1M1175.9 662.4h.1M1175.5 664.9h.1M1174.8 667.4h.1M1174.2 670h.1M1173.5 672.5h.1M1172.9 675h.1M1172.2 677.5h.1M1171.6 680h.1M1170.9 682.5h.1M1170.3 685.1h.1M1169.6 687.6h.1M1184.5 700.1h.1M1184 702.6h.1M1183.5 705.2h.1M1183 707.7h.1M1182.5 710.3h.1M1182 712.8h.1M1181.5 715.4h.1M1181 718h.1M1180.5 720.5h.1"/><path stroke="#de3e17" stroke-width="2" d="M1095.9 463.6h.1M1123.7 471.2h.1M1135.4 464.6h.1M1114.1 460.9h.1M1128.4 468.3h.1M1105.3 474.8h.1M1106 460.7h.1M1092.5 468.8h.1M1110.6 475.8h.1M1097.5 466.6h.1M1095.3 463.6h.1M1092.8 464.7h.1M1092.3 467.6h.1M1108.4 462.6h.1M1104.6 465.4h.1M1122.8 465.4h.1M1133.5 466.2h.1M1098.7 469h.1M1126.3 469.6h.1M1101 476h.1M1100.1 467.6h.1M1111.8 475.7h.1M1221.9 808.8h.1M1191.6 762.1h.1M1206.7 851.9h.1M1229.2 846.7h.1M1244.7 807h.1M1206.3 818.6h.1M1188.2 809.9h.1M1242.5 862.3h.1M1176.4 805.2h.1M1209.8 857.7h.1"/><path stroke="#de3e17" stroke-width="2.2" d="M975 560h.1M974.6 563h.1M974.1 565.9h.1M973.7 568.9h.1M973.3 571.9h.1M972.9 574.8h.1M972.4 577.8h.1M972 580.8h.1M971.6 583.8h.1M971.1 586.7h.1M970.7 589.7h.1M970.3 592.7h.1M969.9 595.6h.1M969.4 598.6h.1M969 601.6h.1M968.6 604.5h.1M968.2 607.5h.1M967.7 610.5h.1M967.3 613.4h.1M966.9 616.4h.1M966.4 619.4h.1M966 622.4h.1M965.6 625.3h.1M965.2 628.3h.1M964.7 631.3h.1M964.3 634.2h.1M963.9 637.2h.1M963.4 640.2h.1M963 643.1h.1M962.6 646.1h.1M962.2 649.1h.1M961.7 652h.1M961.3 655h.1M960.9 658h.1M960.4 661h.1M960 663.9h.1M959.6 666.9h.1M959.2 669.9h.1M958.7 672.8h.1M958.2 675.8h.1M957.7 678.7h.1"/><path stroke="#e34916" stroke-width="1.5" opacity="0.75" d="M640 478.9h.1M644.7 479.9h.1M650.1 478.9h.1M654.7 478.1h.1M660.7 478h.1M666.1 477.6h.1M670.6 479.4h.1M676 477.5h.1M682 479.5h.1M687.6 478.4h.1"/><path stroke="#e34916" stroke-width="1.6" opacity="0.7" d="M736 469h.1M760.9 468.8h.1M785.7 468.9h.1M860.7 468.8h.1M865.9 468.7h.1M736 474.1h.1M741.2 474.2h.1M750.8 474.2h.1M775.8 474.3h.1M811.1 474h.1M831 474.3h.1M840.7 473.9h.1M855.8 474h.1M871.2 473.8h.1M736.1 479.1h.1M755.9 478.8h.1M781.1 479.3h.1M796.3 479.1h.1M825.8 479.1h.1M836.2 479.2h.1M865.7 479h.1M771.2 484.2h.1M786 484.1h.1"/><path stroke="#e34916" stroke-width="1.6" opacity="0.8" d="M1120 458h.1M1120 461h.1M1120 464h.1M1120 467h.1M1120 470h.1M1120 473h.1M1120 476h.1M1127 458h.1M1127 461h.1M1127 464h.1M1127 467h.1M1127 470h.1M1127 473h.1M1127 476h.1M1134 458h.1M1134 461h.1M1134 464h.1M1134 467h.1M1134 470h.1M1134 473h.1M1134 476h.1M1141 458h.1M1141 461h.1M1141 464h.1M1141 467h.1M1141 470h.1M1141 473h.1M1141 476h.1M1148 458h.1M1148 461h.1M1148 464h.1M1148 467h.1M1148 470h.1M1148 473h.1M1148 476h.1M1155 458h.1M1155 461h.1M1155 464h.1M1155 467h.1M1155 470h.1M1155 473h.1M1155 476h.1M1162 458h.1M1162 461h.1M1162 464h.1M1162 467h.1M1162 470h.1M1162 473h.1M1162 476h.1M1169 458h.1M1169 461h.1M1169 464h.1M1169 467h.1M1169 470h.1M1169 473h.1M1169 476h.1M1176 458h.1M1176 461h.1M1176 464h.1M1176 467h.1M1176 470h.1M1176 473h.1M1176 476h.1M1183 458h.1M1183 461h.1M1183 464h.1M1183 467h.1M1183 470h.1M1183 473h.1M1183 476h.1"/><path stroke="#e34916" stroke-width="1.6" opacity="0.85" d="M898.8 395.9h.1M901.7 396h.1M940.2 395.8h.1M943.6 396.2h.1M962.3 396h.1M889.2 399.1h.1M892.2 398.8h.1M895.4 398.9h.1M902 399.2h.1M908.2 398.8h.1M911.4 399h.1M927.3 398.7h.1M950.1 398.9h.1M952.8 399.1h.1M889 402.2h.1M895.2 402.1h.1M908.3 401.8h.1M927.4 402.2h.1M934.1 402h.1M946.8 402.1h.1M950 402.2h.1M959.2 402.1h.1M962.7 402.2h.1"/><path stroke="#e34916" stroke-width="2" opacity="0.8" d="M969 565h.1M968.6 568h.1M968.2 570.9h.1M967.7 573.9h.1M967.3 576.9h.1M966.9 579.9h.1M966.5 582.8h.1M966.1 585.8h.1M965.6 588.8h.1M965.2 591.7h.1M964.8 594.7h.1M964.4 597.7h.1M964 600.6h.1"/><path stroke="#e34916" stroke-width="2" opacity="0.85" d="M742 473h.1M742 475.2h.1M742 477.4h.1M760 473h.1M760 475.2h.1M760 477.4h.1M778 473h.1M778 475.2h.1M778 477.4h.1M800 473h.1M800 475.2h.1M800 477.4h.1M822 473h.1M822 475.2h.1M822 477.4h.1M845 473h.1M845 475.2h.1M845 477.4h.1M866 473h.1M866 475.2h.1M866 477.4h.1M970.4 610.7h.1M969.5 577.9h.1M970.4 593h.1M975.9 568.1h.1M964.5 611.6h.1M972.9 572.1h.1M968.2 601.9h.1M971.5 573h.1M962.5 620.7h.1M967.9 620.2h.1M968.5 577h.1M962.7 623.7h.1M966.8 593.4h.1M967 613.9h.1M970.7 600h.1M963.6 617.7h.1M966.9 618.1h.1M973.2 566.6h.1M971.2 591.8h.1M972.5 580.6h.1M972.5 573.3h.1M968.8 593.1h.1M965.5 606.4h.1M968.9 613h.1M968.8 584.2h.1M970.4 583.2h.1M974.6 576.8h.1M964.5 605.4h.1M973.9 586.6h.1"/><path stroke="#e34916" stroke-width="2" opacity="0.9" d="M1318 558L1455 529M1110 609L1200 596M1095 437.2h.1M1093.2 434.1h.1M1090.3 436.9h.1M1088.8 440.5h.1M1090.9 405.8h.1M1091 449.6h.1M1089.3 440h.1M1093 417.5h.1M1091.7 416.4h.1M1086.8 421.3h.1M1095.3 427.5h.1M1087.5 421.2h.1M1093.1 434.2h.1M1088.3 436h.1M1091.6 431.2h.1M1094.5 436h.1M1088.9 411.6h.1M1095.3 427.4h.1M1093.3 432.8h.1M1092.8 423.1h.1M1089.3 422h.1M1088.4 418.1h.1M1087.3 425.4h.1M1091.5 437.3h.1M1095.8 438.7h.1M1088.1 425.9h.1M1087.9 427.4h.1M1093.8 432.6h.1M1097.5 439.5h.1M1093.1 422.6h.1M967.8 590.9h.1M967.5 593.5h.1M967.1 596.1h.1M966.8 598.6h.1M966.4 601.2h.1M966.1 603.8h.1M965.7 606.4h.1M965.4 609h.1M965 611.5h.1M964.7 614.1h.1M964.3 616.7h.1M964 619.3h.1M963.6 621.8h.1M963.3 624.4h.1M962.9 627h.1M962.6 629.6h.1M962.3 632.1h.1M961.9 634.7h.1M961.6 637.3h.1M961.2 639.9h.1M960.9 642.5h.1M960.5 645h.1M960.2 647.6h.1"/><path stroke="#e34916" stroke-width="2" opacity="0.95" d="M1180.2 615.8h.1M1179.9 618.4h.1M1179.7 620.9h.1M1179.5 623.5h.1M1179.2 626.1h.1M1179 628.7h.1M1178.7 631.3h.1M1178.5 633.9h.1M1178.3 636.5h.1M1178 639.1h.1M1191.5 656.5h.1M1191.4 659.1h.1M1191.2 661.7h.1M1191.1 664.3h.1M1191 666.9h.1M1190.5 669.5h.1M1190 672h.1M1189.5 674.6h.1M1189 677.1h.1M1188.5 679.7h.1M1188 682.2h.1M1187.5 684.8h.1M1187 687.3h.1M1186.5 689.9h.1M1186 692.4h.1M1185.5 695h.1M1185 697.5h.1M1197.4 708.8h.1M1196.9 711.3h.1M1196.4 713.9h.1M1196 716.5h.1M1195.5 719h.1M1195 721.6h.1M1194.6 724.1h.1M1194.1 726.7h.1"/><path stroke="#e34916" stroke-width="2" d="M1105.4 473.8h.1M1114.2 459.2h.1M1116 475.2h.1M1100.3 474.3h.1M1117.6 475h.1M1095.7 475.6h.1M1118.7 465.9h.1M1128 465.2h.1M1125.8 473.1h.1M1107.9 466.2h.1M1132.1 467.5h.1M1123.1 464.6h.1M1115.1 466.8h.1M1094.5 472.4h.1M1106.3 465.9h.1M1098.9 464.9h.1M1119.4 461.6h.1M1126.5 462.3h.1M1112.9 472.7h.1M1083.3 468h.1M1090 470.4h.1M1101.1 471.9h.1M1091.8 469.9h.1M1093.3 469.5h.1M1124 471.8h.1M1097.3 474.1h.1M1136.5 467.8h.1M1114.1 459.1h.1M1090.1 465.6h.1M1123.1 472h.1M1135 468.9h.1M1106.3 462.5h.1M1276.6 791.2h.1M1280 852.1h.1M1184.7 829.3h.1M1298.3 779.2h.1M1200.9 795.1h.1M1212.7 814.7h.1M1228 750.7h.1M1252.8 845.9h.1M1230.8 752.4h.1M1172.6 789.7h.1M1249.2 749h.1M1253.2 824.7h.1M1209.9 826.9h.1M1253.4 777.2h.1"/><path stroke="#e75416" stroke-width="1.5" opacity="0.75" d="M640 475.9h.1M644.8 473.9h.1M644.7 476.9h.1M650.1 475.9h.1M654.7 475.1h.1M660.7 475h.1M666.1 474.6h.1M670.6 476.4h.1M676.1 474.5h.1M682 476.5h.1M687.6 475.4h.1"/><path stroke="#e75416" stroke-width="1.6" opacity="0.7" d="M741.2 464.2h.1M765.9 464.1h.1M775.8 463.9h.1M786 463.8h.1M800.8 464.2h.1M805.8 463.9h.1M811.1 463.9h.1M820.9 464.2h.1M840.9 464.1h.1M851.3 464h.1M771.1 468.8h.1M791.1 468.9h.1M815.9 468.7h.1M846.2 468.9h.1M850.8 469.2h.1M876.2 469h.1M766.1 473.9h.1M821.2 473.7h.1M845.9 473.8h.1M876.2 474h.1M770.7 478.7h.1"/><path stroke="#e75416" stroke-width="1.6" opacity="0.85" d="M895.2 395.7h.1M914.3 395.9h.1M917.8 395.8h.1M934.1 395.8h.1M949.9 396.3h.1M955.9 395.9h.1M898.4 398.8h.1M918 399h.1M921.3 399h.1M924.3 398.8h.1M933.6 399.1h.1M940 399.1h.1M943.5 399.1h.1M946.8 399h.1M959.3 399.3h.1"/><path stroke="#e75416" stroke-width="2" opacity="0.85" d="M742 466.4h.1M742 468.6h.1M742 470.8h.1M760 466.4h.1M760 468.6h.1M760 470.8h.1M778 466.4h.1M778 468.6h.1M778 470.8h.1M800 466.4h.1M800 468.6h.1M800 470.8h.1M822 466.4h.1M822 468.6h.1M822 470.8h.1M845 466.4h.1M845 468.6h.1M845 470.8h.1M866 466.4h.1M866 468.6h.1M866 470.8h.1M973.4 560.1h.1M970.4 564.8h.1M973.5 562.8h.1"/><path stroke="#e75416" stroke-width="2" opacity="0.9" d="M1302 556L1455 521M1092.5 433.5h.1M1092.4 411.7h.1M1090.5 400.9h.1M1086.4 397.4h.1M1085.7 402.4h.1M1090.8 411.8h.1M1085.9 395.2h.1M1088.3 409.6h.1M1087.2 395.8h.1M1085.2 394.1h.1M1091.3 419.9h.1M1087.7 436.1h.1M1089.2 430.9h.1M1088.4 411.6h.1M1092.3 411.8h.1M1085.3 398.9h.1M1090.3 407h.1M1086.8 390.8h.1M1094.8 429.1h.1M1087.9 419.3h.1M1089.6 421.9h.1M1088.7 397.7h.1M1091.8 416.9h.1M972 560h.1M971.7 562.6h.1M971.3 565.2h.1M971 567.7h.1M970.6 570.3h.1M970.3 572.9h.1M969.9 575.5h.1M969.6 578h.1M969.2 580.6h.1M968.9 583.2h.1M968.5 585.8h.1M968.2 588.3h.1"/><path stroke="#e75416" stroke-width="2" opacity="0.95" d="M1193.7 612.4h.1M1193.6 615h.1M1193.4 617.6h.1M1193.3 620.2h.1M1193.2 622.8h.1M1193 625.4h.1M1192.9 628h.1M1192.8 630.6h.1M1192.7 633.2h.1M1192.5 635.8h.1M1192.4 638.3h.1M1192.3 640.9h.1M1192.1 643.5h.1M1192 646.1h.1M1191.9 648.7h.1M1191.7 651.3h.1M1191.6 653.9h.1M1204.8 662.6h.1M1204.7 665.2h.1M1204.6 667.8h.1M1204.4 670.4h.1M1203.9 673h.1M1203.4 675.5h.1M1203 678.1h.1M1202.5 680.7h.1M1202 683.2h.1M1201.6 685.8h.1M1201.1 688.3h.1M1200.6 690.9h.1M1200.2 693.4h.1M1199.7 696h.1M1199.2 698.6h.1M1198.8 701.1h.1M1198.3 703.7h.1M1197.8 706.2h.1M1211 713.3h.1M1210.6 715.8h.1M1210.1 718.4h.1M1209.7 721h.1M1209.3 723.5h.1M1208.8 726.1h.1M1208.4 728.7h.1M1208 731.2h.1M1207.5 733.8h.1"/><path stroke="#e75416" stroke-width="2" d="M1094.3 474.9h.1M1107.8 470.5h.1M1198.7 749.5h.1M1207.3 752.8h.1M1230.6 751.4h.1M1299.5 828.3h.1M1208 764.6h.1M1271.2 756.8h.1M1212.1 757h.1"/><path stroke="#ec6016" stroke-width="1.4" opacity="0.85" d="M963 374h.1M963 376.8h.1M963 379.6h.1M963 382.4h.1M963 385.2h.1M963 388h.1M963 390.8h.1M963 393.6h.1M963 396.4h.1M963 399.2h.1M963 402h.1M963 404.8h.1M963 407.6h.1M963 410.4h.1M963 413.2h.1M963 416h.1M963 418.8h.1M963 421.6h.1M963 424.4h.1"/><path stroke="#ec6016" stroke-width="1.5" opacity="0.75" d="M640 472.9h.1M644.8 470.9h.1M650.2 472.9h.1M654.8 472.1h.1M660.7 472h.1M666.1 471.6h.1M670.7 470.4h.1M670.7 473.4h.1M676.1 471.5h.1M681.9 470.5h.1M682 473.5h.1M687.5 472.4h.1"/><path stroke="#ec6016" stroke-width="1.6" opacity="0.7" d="M771.2 464h.1M861.1 463.9h.1M876.1 463.8h.1"/><path stroke="#ec6016" stroke-width="1.6" opacity="0.85" d="M888.8 396.2h.1M892.3 395.9h.1M908.4 395.8h.1M924.3 395.8h.1M927.7 396.3h.1M930.5 395.9h.1M959.5 395.8h.1"/><path stroke="#ec6016" stroke-width="2" opacity="0.85" d="M742 462h.1M742 464.2h.1M760 462h.1M760 464.2h.1M778 462h.1M778 464.2h.1M800 462h.1M800 464.2h.1M822 462h.1M822 464.2h.1M845 462h.1M845 464.2h.1M866 462h.1M866 464.2h.1"/><path stroke="#ec6016" stroke-width="2" opacity="0.9" d="M1290 550L1400 532M1086.6 390.9h.1M1084.7 376.3h.1M1085 391h.1M1087.5 389.2h.1M1088 383.7h.1M1088.4 386.7h.1M1087 397.6h.1M1087.4 400.7h.1M1085.1 377.6h.1M1086.2 385.6h.1M1088.7 395h.1M1088 384.9h.1M1085.6 381.7h.1M1088.1 393.5h.1M1088.3 385.8h.1M1084.6 391.2h.1M1085 394.5h.1M1087.4 396h.1M1089.7 393.2h.1M1089.9 395.4h.1M1084.8 377.1h.1M1087.6 398.2h.1M1088.3 385.8h.1M1086.6 387.3h.1M1087.2 390.1h.1M1086.9 401.1h.1M1087.9 391.3h.1M1086.9 396.3h.1M1090 407.4h.1M1085.2 386.5h.1M1086.8 402.1h.1M1083.9 381.3h.1M1084.6 382.6h.1M1089.1 395.6h.1M1086.4 383.5h.1M1085.4 395.8h.1M1086.3 396.7h.1M1087.3 402.9h.1M1086 380h.1M1085.6 379.4h.1M1085.3 392.8h.1M1088.4 403.6h.1M1085.5 382.7h.1M1087.5 384.6h.1"/><path stroke="#ec6016" stroke-width="2" opacity="0.95" d="M1207 615.9h.1M1206.9 618.5h.1M1206.7 621.1h.1M1206.6 623.7h.1M1206.5 626.3h.1M1206.4 628.9h.1M1206.2 631.5h.1M1206.1 634.1h.1M1206 636.7h.1M1205.9 639.3h.1M1205.8 641.9h.1M1205.6 644.5h.1M1205.5 647.1h.1M1205.4 649.7h.1M1205.3 652.2h.1M1205.2 654.8h.1M1205 657.4h.1M1204.9 660h.1M1218.3 664.5h.1M1218.2 667.1h.1M1218.1 669.7h.1M1217.9 672.2h.1M1217.4 674.8h.1M1217 677.4h.1M1216.6 679.9h.1M1216.1 682.5h.1M1215.7 685.1h.1M1215.3 687.6h.1M1214.8 690.2h.1M1214.4 692.8h.1M1214 695.3h.1M1213.6 697.9h.1M1213.1 700.5h.1M1212.7 703h.1M1212.3 705.6h.1M1211.8 708.1h.1M1211.4 710.7h.1"/><path stroke="#ec6016" stroke-width="2" d="M1253 817.5h.1M1269.9 841.2h.1M1278.1 761.3h.1M1225.5 785.4h.1"/><path stroke="#ec6016" stroke-width="3" d="M686.5 471h.1M686.9 472.9h.1M687.3 474.9h.1M687.7 476.8h.1"/><path stroke="#ea7418" stroke-width="1.5" opacity="0.75" d="M640 469.9h.1M644.8 467.9h.1M650.2 466.9h.1M650.2 469.9h.1M654.9 469.1h.1M660.7 469h.1M666.1 468.6h.1M670.7 467.4h.1M676.1 468.5h.1M681.9 467.5h.1M687.4 469.4h.1"/><path stroke="#ea7418" stroke-width="1.5" d="M1119.7 542.4L1135.2 542.7M1096.6 538.4L1104.7 538.1M1123.9 542.9L1140.4 543.6M1113.7 534.8L1120.1 533.8M1099.5 537.1L1107.3 538.5"/><path stroke="#ea7418" stroke-width="1.6" d="M789.9 610.9L783.5 616.3"/><path stroke="#ea7418" stroke-width="2" opacity="0.9" d="M1089.1 398.4h.1M1086.2 385.2h.1M1083.9 380.8h.1M1085.2 385h.1M1085.2 381.1h.1M1085.9 396.6h.1M1087.9 388.1h.1M1085.2 387.6h.1M1087.3 381.8h.1M1089.2 391.2h.1M1087.2 396h.1M1086.8 393.6h.1M1089.1 398.9h.1M1088.9 395.4h.1M1085.4 381.3h.1M1086 384.4h.1M1085.4 400.1h.1M1084.5 381.4h.1M1085.3 386.1h.1M1085.3 385.5h.1M1085.1 386.7h.1"/><path stroke="#ea7418" stroke-width="2" opacity="0.95" d="M1207.2 610.7h.1M1207.1 613.3h.1M1220.5 612.5h.1M1220.4 615.1h.1M1220.3 617.7h.1M1220.2 620.3h.1M1220.1 622.9h.1M1220 625.5h.1M1219.8 628.1h.1M1219.7 630.7h.1M1219.6 633.3h.1M1219.5 635.9h.1M1219.4 638.5h.1M1219.3 641.1h.1M1219.2 643.7h.1M1219.1 646.3h.1M1218.9 648.9h.1M1218.8 651.5h.1M1218.7 654.1h.1M1218.6 656.7h.1M1218.5 659.3h.1M1218.4 661.9h.1M1230.1 689.6h.1M1229.8 692.2h.1M1229.5 694.8h.1M1229.2 697.3h.1M1228.9 699.9h.1M1228.6 702.5h.1M1228.3 705.1h.1M1227.9 707.7h.1M1227.6 710.2h.1M1227.3 712.8h.1M1227 715.4h.1M1226.7 718h.1M1226.4 720.6h.1M1226.1 723.2h.1M1225.7 725.7h.1M1225.4 728.3h.1M1225.1 730.9h.1M1224.8 733.5h.1M1224.5 736.1h.1M1224.2 738.6h.1"/><path stroke="#ea7418" stroke-width="3" d="M684.7 463.2h.1M685.2 465.1h.1M685.6 467.1h.1M686 469h.1"/><path stroke="#e8881b" stroke-width="1.3" opacity="0.95" d="M889 390.8L892.5 390.8M893.2 390.8L901 390.8M902.1 390.8L910.2 390.8M911 390.8L916.4 390.8M918.4 390.8L924 390.8M925.8 390.8L936 390.8M937.5 390.8L944.6 390.8M946.9 390.8L953.9 390.8M956.1 390.8L959.7 390.8M960.7 390.8L963 390.8M889 393.6L899.8 393.6M899.9 393.6L908.3 393.6M908.8 393.6L920.1 393.6M921.5 393.6L931.7 393.6M932.9 393.6L942 393.6M943.7 393.6L949.3 393.6M949.9 393.6L960.4 393.6M960.8 393.6L963 393.6"/><path stroke="#e8881b" stroke-width="1.5" opacity="0.75" d="M640 466.9h.1M644.9 464.9h.1M650.2 463.9h.1M655 463.1h.1M654.9 466.1h.1M660.7 466h.1M666.1 465.6h.1M670.8 464.4h.1M676.1 465.5h.1M681.9 464.5h.1M687.4 466.4h.1"/><path stroke="#e8881b" stroke-width="1.5" d="M1119.5 529.3L1135.1 529.9M1131 522.6L1148.1 522.6M1101.3 550.1L1110.2 549.9M1125.3 517.1L1135.3 513M1126.9 521.6L1142.7 522.7M1114.2 532.9L1129.7 531.3M1140.8 527.3L1151.8 522.2M1101.9 538L1120.7 540.7"/><path stroke="#e8881b" stroke-width="1.6" d="M802 606.4L807.2 609.4M794.2 604.6L803.4 605.7M795.8 607.3L802.3 607.4M804.9 607.9L808.8 610.5"/><path stroke="#e8881b" stroke-width="2" opacity="0.9" d="M1084.1 375.9h.1M1084 376.7h.1"/><path stroke="#e8881b" stroke-width="2" opacity="0.95" d="M1220.7 607.3h.1M1220.6 609.9h.1M1232.5 632.5h.1M1232.5 635.1h.1M1232.5 637.7h.1M1232.4 640.3h.1M1232.4 642.9h.1M1232.4 645.5h.1M1232.4 648.1h.1M1232.4 650.7h.1M1232.4 653.3h.1M1232.4 655.9h.1M1232.4 658.5h.1M1232.4 661.1h.1M1232.4 663.7h.1M1232.4 666.3h.1M1232.3 668.9h.1M1232.3 671.5h.1M1232 674.1h.1M1231.7 676.7h.1M1231.4 679.3h.1M1231.1 681.9h.1M1230.8 684.4h.1M1230.5 687h.1M1237.8 708.6h.1M1237.5 711.2h.1M1237.3 713.8h.1M1237 716.4h.1M1236.7 719h.1M1236.5 721.6h.1M1236.2 724.2h.1M1235.9 726.7h.1M1235.6 729.3h.1M1235.4 731.9h.1M1235.1 734.5h.1M1234.8 737.1h.1M1234.6 739.7h.1M1234.3 742.3h.1"/><path stroke="#e8881b" stroke-width="3" d="M683 455.3h.1M683.4 457.3h.1M683.9 459.3h.1M684.3 461.2h.1"/><path stroke="#e69c1e" stroke-width="1.3" opacity="0.95" d="M889 388L892.5 388M893.2 388L904 388M906 388L916.7 388M917.4 388L922.2 388M922.3 388L930.2 388M931.1 388L938.3 388M939.5 388L947.7 388M948.7 388L958.9 388M959.4 388L963 388"/><path stroke="#e69c1e" stroke-width="1.5" opacity="0.75" d="M640 463.9h.1M644.9 461.9h.1M650.2 460.9h.1M655 460.1h.1M660.7 463h.1M666.1 462.6h.1M670.8 461.4h.1M676.2 459.5h.1M676.2 462.5h.1M681.9 461.5h.1M687.3 463.4h.1"/><path stroke="#e69c1e" stroke-width="1.5" d="M1147.7 467.4L1154.7 469.5M1149.1 466.7L1155.2 466M1127.7 463L1138.5 464.2M1135.1 464.2L1146.7 471.7M1145.3 469.8L1154.9 469.2M1309.9 552.5L1298.7 561.3M1314.3 552.5L1294.9 559.1M1308.3 557.3L1297 564.7M1308.8 550.6L1300.4 554.2M1309.5 557.1L1289.1 560.8M1115.6 532.3L1121.4 529M1097.9 541.7L1111.8 535.4M1103.2 535.2L1111.1 536.5M1128 528.9L1135.7 525M1141 534.3L1159.6 532.8M1119.1 530.2L1134.8 532.7M1140 527.4L1153.5 523.8M1107.8 529.5L1116.3 525.5"/><path stroke="#e69c1e" stroke-width="1.6" d="M997.5 399.8h.1M1006.1 390.8h.1M1005.6 395.9h.1M791.1 601.8L796.7 602.4M794.3 608.6L790.4 612.1M790.4 607.7L783.7 613M796.6 599.9L789.9 602.9M800.8 608L809.1 608.5M801 607L806.6 609.3M791.3 605.9L786.3 607.6M795.7 605.6L786.6 609.4"/><path stroke="#e69c1e" stroke-width="2" opacity="0.95" d="M1232.6 603.9h.1M1232.6 606.5h.1M1232.5 609.1h.1M1232.5 611.7h.1M1232.5 614.3h.1M1232.5 616.9h.1M1232.5 619.5h.1M1232.5 622.1h.1M1232.5 624.7h.1M1232.5 627.3h.1M1232.5 629.9h.1M1241.3 638.6h.1M1241.4 641.2h.1M1241.4 643.8h.1M1241.4 646.4h.1M1241.4 649h.1M1241.4 651.6h.1M1241.5 654.2h.1M1241.5 656.8h.1M1241.5 659.4h.1M1241.5 662h.1M1241.6 664.6h.1M1241.6 667.2h.1M1241.6 669.8h.1M1241.6 672.4h.1M1241.4 675h.1M1241.1 677.6h.1M1240.8 680.2h.1M1240.5 682.8h.1M1240.3 685.4h.1M1240 688h.1M1239.7 690.5h.1M1239.4 693.1h.1M1239.2 695.7h.1M1238.9 698.3h.1M1238.6 700.9h.1M1238.4 703.5h.1M1238.1 706.1h.1"/><path stroke="#e69c1e" stroke-width="3" d="M681.3 447.5h.1M681.7 449.5h.1M682.2 451.4h.1M682.6 453.4h.1"/><path stroke="#e4b021" stroke-width="1.3" opacity="0.95" d="M889 385.2L895.8 385.2M897.2 385.2L909.2 385.2M911.2 385.2L922.1 385.2M922.5 385.2L928.5 385.2M929.8 385.2L932.8 385.2M935.3 385.2L940.8 385.2M941.4 385.2L947.2 385.2M947.9 385.2L958.6 385.2M960 385.2L963 385.2"/><path stroke="#e4b021" stroke-width="1.3" d="M1434.8 477.5L1441.5 481.3M1415.4 471.2L1406.6 479"/><path stroke="#e4b021" stroke-width="1.4" opacity="0.85" d="M992.6 434h.1M992.6 436.8h.1M992.6 439.6h.1M992.6 442.4h.1M992.6 445.2h.1M992.6 448h.1M992.6 450.8h.1M992.6 453.6h.1M992.6 456.4h.1M992.6 459.2h.1M992.6 462h.1M992.6 464.8h.1M1005 395h.1M1005 397.8h.1M1005 400.6h.1M1005 403.4h.1M1005 406.2h.1M1005 409h.1M1005 411.8h.1M1005 414.6h.1M1005 417.4h.1M1005 420.2h.1M1005 423h.1M1005 425.8h.1M1005 428.6h.1"/><path stroke="#e4b021" stroke-width="1.4" opacity="0.9" d="M736 460.6h.1M738.6 461.3h.1M749 461.8h.1M751.6 460.8h.1M754.2 460.8h.1M762 460.5h.1M769.8 460.8h.1M772.4 460.5h.1M782.8 460.3h.1M793.2 461.8h.1M795.8 461h.1M798.4 460.7h.1M801 461.6h.1M808.8 460.7h.1M811.4 460.4h.1M814 461.4h.1M816.6 461.5h.1M819.2 461.6h.1M821.8 460.5h.1M827 461.8h.1M834.8 461.9h.1M837.4 461.8h.1M840 460.9h.1M847.8 460.7h.1M853 460.6h.1M860.8 461.9h.1M863.4 461.9h.1M868.6 461.7h.1M871.2 460.7h.1"/><path stroke="#e4b021" stroke-width="1.4" d="M878.9 557.8L886.6 564.2M938.7 673.9L955.9 672.8M953.9 674.4L958.8 678.5M1130.2 601.5L1144 611.4M1106.1 604.1L1122.2 604M1123 607.2L1131.9 606M1091.6 603.4L1101.3 602.3M1117.8 606.1L1130 604.4M1120.9 606.7L1137.6 608.6M1108 606.6L1116.5 606.3M1121.2 695.4L1129.5 702.6"/><path stroke="#e4b021" stroke-width="1.5" opacity="0.7" d="M1405 420h.1M1404.7 423.5h.1M1404.3 427h.1M1404 430.4h.1M1403.6 433.9h.1M1403.3 437.4h.1M1402.9 440.9h.1M1402.6 444.4h.1M1402.2 447.9h.1M1401.9 451.3h.1M1401.5 454.8h.1M1401.2 458.3h.1M1400.8 461.8h.1M1400.5 465.3h.1M1400.1 468.8h.1M1399.8 472.2h.1M1399.4 475.7h.1M1399.1 479.2h.1M1398.7 482.7h.1M1398.4 486.2h.1M1398 489.7h.1"/><path stroke="#e4b021" stroke-width="1.5" opacity="0.75" d="M640 460.9h.1M644.9 458.9h.1M650.2 457.9h.1M655.1 457.1h.1M660.8 460h.1M666.1 459.6h.1M670.8 458.4h.1M676.2 456.5h.1M681.8 458.5h.1M687.3 460.4h.1"/><path stroke="#e4b021" stroke-width="1.5" opacity="0.95" d="M1104 423.2L1146 423.2"/><path stroke="#e4b021" stroke-width="1.5" d="M1133.5 460.9L1145 460.9M1129.4 461.3L1142.1 460.2M1147.2 465.6L1155.4 469M1133.5 462.7L1123.4 472M1109.8 464.2L1120.4 464.4M1122.2 460.5L1113.9 466.5M1132.7 467.1L1148.5 465.9M1145.5 448.9L1156.4 456.3M1119.6 460.4L1109.6 464M1131.2 465.1L1116.8 470.5M1118.6 460.3L1127.1 459.9M1144.5 466.4L1158.4 464.9M1320 439.8L1333.3 439.7M1310.2 431.9L1317.8 433.5M1288.1 430.9L1300.3 435.3M1301 440.7L1308.9 443.6M1329.2 437.5L1336.3 438.6M1250.9 410.4L1257.2 410.4M1250.3 410.5L1255.8 410.5M1314.5 545.4L1299.6 550.4M1319.1 551.4L1300 558.2M686.9 518.5L692.9 520.7M696.6 518.2L705.4 520.7M694.9 519.9L701 519.7M690.2 505.1L694.7 505.6M691.4 516.2L696.5 521.3M682.7 521L691.7 521.2M691.7 510.6L695.9 513.4M686.5 519.9L692.2 523.1M1106.7 545L1121.8 536.8M1114.2 547.4L1124.4 546.7M1102.3 548.5L1119.9 541.7M1141.7 532.4L1160 532.5M1100.1 525.6L1119.3 522.9"/><path stroke="#e4b021" stroke-width="1.6" d="M1002.7 404.1h.1M1005.8 389.6h.1M997 396.6h.1M793.3 607.6L789.3 609.4M792.8 601.8L785.7 607M794.3 592.8L800.9 593.2"/><path stroke="#e4b021" stroke-width="1.9" opacity="0.9" d="M719.5 647.9h.1M721.8 648.6h.1M724 649.4h.1M726.3 650.1h.1M728.6 650.9h.1M730.9 651.7h.1M733.1 652.4h.1M735.4 653.2h.1M737.7 653.9h.1M749.9 671.5h.1M752.3 671.9h.1M754.7 672.2h.1M757 672.6h.1M759.4 672.9h.1M761.8 673.3h.1M764.1 673.7h.1M766.5 674h.1M768.9 674.4h.1M771.3 674.7h.1M773.6 675.1h.1M776 675.4h.1M778.4 675.8h.1M780.8 676.2h.1M783.1 676.5h.1M820.9 685h.1M823 686.1h.1M825.2 687.2h.1M827.3 688.3h.1M829.5 689.3h.1M831.6 690.4h.1M833.8 691.5h.1M835.9 692.6h.1M838 693.6h.1M840.2 694.7h.1M814.1 708.7h.1M816 710.1h.1M818 711.6h.1M819.9 713h.1M821.8 714.5h.1M823.7 715.9h.1M825.6 717.3h.1M827.6 718.8h.1M793.8 820.2h.1M796.1 821h.1M798.4 821.7h.1M800.7 822.5h.1M802.9 823.3h.1M868.2 688.4h.1M868.9 690.7h.1M869.7 693h.1M870.5 695.3h.1M871.2 697.5h.1M871.6 668.1h.1M873.9 668.5h.1M876.3 668.9h.1M878.7 669.3h.1M881 669.7h.1M883.4 670.1h.1M885.8 670.5h.1M888.1 670.9h.1M890.5 671.3h.1M878.3 823.6h.1M880.6 824.4h.1M882.9 825.1h.1M885.2 825.9h.1M887.4 826.6h.1"/><path stroke="#e4b021" stroke-width="2" opacity="0.9" d="M1150 437L1150 465M1185 437L1185 470M1190 430L1200 470"/><path stroke="#e4b021" stroke-width="2" opacity="0.95" d="M1241 602.2h.1M1241 604.8h.1M1241.1 607.4h.1M1241.1 610h.1M1241.1 612.6h.1M1241.1 615.2h.1M1241.2 617.8h.1M1241.2 620.4h.1M1241.2 623h.1M1241.2 625.6h.1M1241.2 628.2h.1M1241.3 630.8h.1M1241.3 633.4h.1M1241.3 636h.1M1253.1 648.8h.1M1252.7 651.4h.1M1252.3 654h.1M1251.9 656.5h.1M1251.6 659.1h.1M1251.2 661.7h.1M1250.8 664.3h.1M1250.4 666.8h.1M1250.1 669.4h.1M1249.7 672h.1M1249.3 674.5h.1M1248.9 677.1h.1M1248.6 679.7h.1M1248.2 682.3h.1M1247.8 684.8h.1"/><path stroke="#e4b021" stroke-width="3" d="M679.6 439.7h.1M680 441.7h.1M680.4 443.6h.1M680.9 445.6h.1"/><path stroke="#e2c424" stroke-width="1" opacity="0.55" d="M889 360L889 406M908 360L908 406M918.4 360L918.4 406M932.3 360L932.3 406M944 360L944 406"/><path stroke="#e2c424" stroke-width="1.2" opacity="0.6" d="M1080 363.3h.1M1080 366.3h.1M1088.7 363.3h.1M1088.7 366.3h.1M1102.8 364.4h.1M1102.8 367.4h.1"/><path stroke="#e2c424" stroke-width="1.3" opacity="0.95" d="M889 382.4L895.6 382.4M895.7 382.4L904.8 382.4M906.2 382.4L916.1 382.4M918.1 382.4L922.1 382.4M922.7 382.4L926.4 382.4M928.4 382.4L932.3 382.4M932.6 382.4L942.3 382.4M943.7 382.4L947.2 382.4M948.9 382.4L958.3 382.4M959.6 382.4L963 382.4"/><path stroke="#e2c424" stroke-width="1.3" d="M1419.5 471.1L1415.7 472.9M1423.1 466.6L1415.5 472.9M1427.8 474.7L1423.5 478.2M1423.3 469L1434.4 468.7"/><path stroke="#e2c424" stroke-width="1.4" opacity="0.85" d="M1003 410h.1M1003 412.8h.1M1003 415.6h.1M1003 418.4h.1M1003 421.2h.1M1003 424h.1M1003 426.8h.1M1003 429.6h.1M1003 432.4h.1M1003 435.2h.1M1003 438h.1M1003 440.8h.1M1003 443.6h.1M1003 446.4h.1M1003 449.2h.1M1003 452h.1M1003 454.8h.1M1003 457.6h.1M1003 460.4h.1M1003 463.2h.1M1003 466h.1M1003 468.8h.1"/><path stroke="#e2c424" stroke-width="1.4" opacity="0.9" d="M736 458h.1M738.6 458.7h.1M741.2 456.8h.1M741.2 459.4h.1M746.4 457.5h.1M746.4 460.1h.1M749 459.2h.1M751.6 458.2h.1M754.2 458.2h.1M756.8 457.7h.1M756.8 460.3h.1M762 457.9h.1M767.2 457.1h.1M767.2 459.7h.1M769.8 458.2h.1M772.4 457.9h.1M775 457.2h.1M775 459.8h.1M777.6 457.4h.1M777.6 460h.1M780.2 457.1h.1M780.2 459.7h.1M782.8 457.7h.1M785.4 457.5h.1M785.4 460.1h.1M790.6 457.4h.1M790.6 460h.1M793.2 459.2h.1M795.8 458.4h.1M798.4 458.1h.1M801 456.4h.1M801 459h.1M806.2 457.1h.1M806.2 459.7h.1M808.8 458.1h.1M811.4 457.8h.1M814 458.8h.1M816.6 458.9h.1M819.2 456.4h.1M819.2 459h.1M821.8 457.9h.1M827 456.6h.1M827 459.2h.1M834.8 456.7h.1M834.8 459.3h.1M837.4 456.6h.1M837.4 459.2h.1M840 458.3h.1M842.6 457.1h.1M842.6 459.7h.1M845.2 456.9h.1M845.2 459.5h.1M847.8 458.1h.1M850.4 457.5h.1M850.4 460.1h.1M853 458h.1M860.8 456.7h.1M860.8 459.3h.1M863.4 456.7h.1M863.4 459.3h.1M868.6 456.5h.1M868.6 459.1h.1M871.2 458.1h.1M876.4 457.2h.1M876.4 459.8h.1M881.6 457.1h.1M881.6 459.7h.1"/><path stroke="#e2c424" stroke-width="1.4" d="M883.8 550.7L895.2 556.6M846.5 555.9L853.2 555.9M854.8 546.8L870.2 548.9M844.4 554.2L834.9 557.7M888.7 551.5L904.1 559.1M880.7 551.1L888.7 551.2M880.7 558.2L892 558.4M872.1 557.4L886.4 561.8M948.3 677.6L964.5 676M944.1 664.5L950.7 665.4M948.5 675.7L959.7 676.1M912.6 666.2L928.5 665.2M945.3 671.7L957.9 672.1M936.9 658.3L943.3 658.9M1110.9 596.9L1123.7 596.5M1121.8 607.9L1137.6 607.2M1130 607.2L1136 612.7M1135.7 607.6L1145.3 608M1107.4 601.7L1114.6 600.7M1137.3 604.4L1147.5 610.9M1114 693.6L1120.3 693.8M1110.5 692L1101.9 695.4M1124.4 698.4L1135.5 698.5"/><path stroke="#e2c424" stroke-width="1.5" opacity="0.75" d="M640 457.9h.1M645 455.9h.1M650.3 454.9h.1M655.1 454.1h.1M660.8 457h.1M666.1 456.6h.1M670.9 455.4h.1M676.2 453.5h.1M681.8 455.5h.1M687.2 457.4h.1"/><path stroke="#e2c424" stroke-width="1.5" opacity="0.95" d="M1104 418.6L1146 418.6M1104 420.9L1146 420.9"/><path stroke="#e2c424" stroke-width="1.5" d="M1107.7 462.7L1113.4 462.6M1162.3 465.7L1168.6 471.7M1124.8 451.3L1132.9 451.1M1154.2 457.7L1161.1 456.8M1136.7 450.6L1151 451.9M1139.1 446.2L1149.6 452.1M1141.2 442.9L1152.7 441.6M1118.9 467.8L1110.1 476M1155.3 463L1169.2 466.8M1156.7 463.3L1161 466.5M1125.5 457.5L1132.2 458.4M1298.1 450.5L1302.7 449.8M1300.9 431.5L1306.7 431M1278.3 450.5L1286.2 451.3M1253 440.7L1257.2 441.7M1314 440.3L1325.8 438.3M1274.7 445.7L1284.8 445.5M1283.9 449.5L1295.6 448.1M1308.6 433.7L1315.2 435.2M1287 439.3L1297.9 442.3M1261.5 444L1269.4 445.4M1259.5 439.3L1266.1 440.2M1265.2 431.7L1275.5 431.7M1263.1 447.3L1276.3 445.8M1322 440.3L1335.6 440.7M1244.5 413.6L1251.2 413.6M1240.4 411L1246.8 411M1241.5 410.3L1247.1 410.3M1323 545L1314 553.6M1325.2 541.9L1313.9 550M1329.4 540.3L1316.2 548.1M1328.2 546.6L1317.8 550.5M1317.7 547.3L1298.4 554.4M1330 540.9L1311.4 545.8M1326.7 546.4L1315.4 551.2M677.8 506L670.5 510.3M690.2 501.9L693.7 503.1M686.9 499.7L693.4 506M680.1 498L672.6 503M694.7 516.2L697.2 517.9M690.7 511L695.1 512.4M684.6 501.7L678.3 503.5M682.4 507.8L688.9 508.3M689.7 499.3L693.2 502.6M674.8 511.5L670.4 514.6M677.4 513.1L671.3 517.9M929.7 544.7L914.8 549M1192.6 500.8L1201 496M1152.2 511.6L1169.2 512.6M1136.9 519.9L1151.7 521.2M1185.9 515.3L1198.4 511M1157.2 515.8L1173.2 518.6M1147.5 516.4L1162.4 518.7M1172.8 530.5L1192 527.9M1123.4 525.8L1129.7 525.8M1125.7 547.8L1143.4 546.1M1169.4 516.2L1175.8 513.2M1137.7 527.1L1151.5 528.3M1187.6 528.8L1196.5 525.3M1190.4 503.5L1196.4 502.6"/><path stroke="#e2c424" stroke-width="1.6" d="M997.1 384.6h.1M1002.3 386.3h.1M995 398.1h.1M793.2 593.9L788.5 597.8M792.6 591.8L783.9 596.4M790.2 594.5L785.6 596.1M795.7 593L786.5 595.7M792.6 596.2L786.7 601.6M794 597.3L787.1 600M797.2 598.5L803.1 603.9M803.5 587.5L807.8 589.8M795.3 592.8L786.5 595.8M796.4 593.8L791.7 595.6"/><path stroke="#e2c424" stroke-width="1.8" d="M800 612L820 618"/><path stroke="#e2c424" stroke-width="1.9" opacity="0.9" d="M722.9 661.4h.1M725.2 661.7h.1M727.6 662.1h.1M730 662.4h.1M732.4 662.7h.1M734.7 663.1h.1M737.1 663.4h.1M739.5 663.8h.1M741.9 664.1h.1M744.3 664.4h.1M736.4 663.1h.1M738.4 664.5h.1M740.3 665.8h.1M742.3 667.2h.1M744.3 668.6h.1M746.2 670h.1M748.2 671.3h.1M750.1 672.7h.1M752.1 674.1h.1M807.4 789.8h.1M809.6 790.7h.1M811.8 791.6h.1M814 792.5h.1M816.3 793.4h.1M818.5 794.3h.1M820.7 795.2h.1M823 796h.1M837.8 783h.1M839.9 784.2h.1M841.9 785.4h.1M844 786.6h.1M846.1 787.8h.1M848.2 789h.1M850.3 790.2h.1M852.4 791.4h.1M854.4 792.6h.1M856.5 793.8h.1M858.6 795h.1M860.7 796.1h.1M874.9 827h.1M877.3 827h.1M879.7 827h.1M882.1 827h.1M884.5 827h.1M949.3 776.3h.1M951 778h.1M952.7 779.7h.1M954.4 781.4h.1M692.5 823.6h.1M694.6 824.7h.1M696.7 825.7h.1M698.9 826.8h.1M891.8 658h.1M893.3 659.9h.1M894.8 661.8h.1M896.3 663.6h.1M897.8 665.5h.1M899.3 667.4h.1M900.8 669.3h.1M902.3 671.1h.1M903.8 673h.1M905.3 674.9h.1M787.1 671.5h.1M789.2 672.6h.1M791.4 673.7h.1M793.5 674.7h.1M795.7 675.8h.1M797.8 676.9h.1M800 678h.1M763.4 661.4h.1M765.3 662.8h.1M767.3 664.3h.1M769.2 665.7h.1M771.1 667.1h.1M773 668.6h.1M774.9 670h.1M776.9 671.5h.1M746.5 651.2h.1M748.4 652.7h.1M750.4 654.1h.1M752.3 655.6h.1M754.2 657h.1M756.1 658.4h.1M758 659.9h.1M760 661.3h.1M824.3 685h.1M826.3 686.3h.1M828.3 687.6h.1M830.4 688.9h.1M832.4 690.1h.1M834.4 691.4h.1M836.5 692.7h.1M776.9 701.9h.1M779.2 702.8h.1M781.4 703.7h.1M783.6 704.6h.1M785.9 705.5h.1M788.1 706.4h.1M790.3 707.3h.1M792.5 708.2h.1"/><path stroke="#e2c424" stroke-width="2" opacity="0.9" d="M1140 437L1190 437M1115 445L1160 445"/><path stroke="#e2c424" stroke-width="2" opacity="0.95" d="M1251.2 607.3h.1M1251.3 609.9h.1M1251.5 612.5h.1M1251.6 615.1h.1M1251.8 617.7h.1M1251.9 620.3h.1M1252.1 622.9h.1M1252.2 625.5h.1M1252.4 628.1h.1M1252.5 630.7h.1M1252.7 633.3h.1M1252.8 635.9h.1M1253 638.5h.1M1253.2 641.1h.1M1253.3 643.6h.1M1253.5 646.2h.1M1261.3 610.7h.1M1261.5 613.3h.1M1261.6 615.9h.1M1261.8 618.5h.1M1261.9 621.1h.1M1262.1 623.7h.1M1262.3 626.3h.1M1262.4 628.9h.1M1262.6 631.5h.1M1262.7 634h.1M1262.9 636.6h.1M1263.1 639.2h.1M1263.2 641.8h.1M1263.4 644.4h.1M1263.5 647h.1M1263.3 649.6h.1M1262.9 652.2h.1M1262.5 654.7h.1M1262.2 657.3h.1M1261.8 659.9h.1M1261.4 662.5h.1M1261 665h.1M1260.6 667.6h.1M1260.2 670.2h.1M1259.8 672.7h.1M1259.4 675.3h.1M1259 677.9h.1M1258.6 680.4h.1M1258.2 683h.1M1272.8 650.1h.1M1272.6 652.7h.1M1272.4 655.3h.1M1272.2 657.9h.1M1271.9 660.5h.1M1271.7 663.1h.1M1271.5 665.7h.1M1271.2 668.3h.1M1271 670.9h.1M1270.8 673.4h.1M1270.5 676h.1M1270.3 678.6h.1M1270.1 681.2h.1M1269.8 683.8h.1"/><path stroke="#e2c424" stroke-width="2" d="M708.6 789.9h.1M749.2 770.7h.1M793.6 763.4h.1M751.3 771.2h.1M783.4 831.8h.1M742.4 742.8h.1M822.4 824.7h.1M725.8 787.4h.1M1094.7 645.8h.1"/><path stroke="#e2c424" stroke-width="2.2" opacity="0.9" d="M667.1 837.1h.1M726.2 840.5h.1M685.7 661.4h.1M702.6 659.7h.1M844.5 671.5h.1M810.7 658h.1M885.1 732.4h.1M895.2 739.1h.1M780.3 810.1h.1M837.8 708.7h.1"/><path stroke="#e2c424" stroke-width="2.4" d="M812 585h.1M811.2 587h.1M810.4 589.1h.1M809.5 591.1h.1M808.7 593.2h.1M807.9 595.2h.1M807.1 597.3h.1M806.3 599.3h.1M805.5 601.3h.1M804.6 603.4h.1M803.8 605.4h.1M803 607.5h.1M802.2 609.5h.1M801.4 611.6h.1M800.6 613.6h.1M799.7 615.6h.1M798.9 617.7h.1M798.1 619.7h.1M806 580h.1M805.2 582.1h.1M804.5 584.1h.1M803.7 586.2h.1M802.9 588.2h.1M802.2 590.3h.1M801.4 592.4h.1M800.6 594.4h.1M799.9 596.5h.1M799.1 598.6h.1M798.3 600.6h.1M797.6 602.7h.1M796.8 604.7h.1M796 606.8h.1M795.3 608.9h.1M794.5 610.9h.1M793.7 613h.1"/><path stroke="#e2c424" stroke-width="3" d="M677.9 431.9h.1M678.3 433.9h.1M678.7 435.8h.1M679.1 437.8h.1"/><path stroke="#ccc726" stroke-width="1.2" opacity="0.6" d="M1080 354.3h.1M1080 357.3h.1M1080 360.3h.1M1088.7 351.3h.1M1088.7 354.3h.1M1088.7 357.3h.1M1088.7 360.3h.1M1102.8 352.4h.1M1102.8 355.4h.1M1102.8 358.4h.1M1102.8 361.4h.1"/><path stroke="#ccc726" stroke-width="1.3" opacity="0.95" d="M889 376.8L899.3 376.8M900.2 376.8L906.6 376.8M908.1 376.8L919.4 376.8M919.9 376.8L931.6 376.8M933.4 376.8L939.8 376.8M941.4 376.8L947.4 376.8M947.6 376.8L957.4 376.8M958.3 376.8L963 376.8M889 379.6L900.1 379.6M902 379.6L905.2 379.6M906.7 379.6L913.9 379.6M915 379.6L925.6 379.6M926.6 379.6L933.9 379.6M936.1 379.6L943.1 379.6M944.3 379.6L951.9 379.6M954 379.6L963 379.6"/><path stroke="#ccc726" stroke-width="1.3" d="M1432.4 464.7L1442 468.5M1422.6 462L1416.8 465.9"/><path stroke="#ccc726" stroke-width="1.4" opacity="0.9" d="M736 455.4h.1M738.6 453.5h.1M738.6 456.1h.1M741.2 454.2h.1M746.4 454.9h.1M749 454h.1M749 456.6h.1M751.6 455.6h.1M754.2 455.6h.1M756.8 455.1h.1M762 455.3h.1M767.2 454.5h.1M769.8 455.6h.1M772.4 455.3h.1M775 454.6h.1M777.6 454.8h.1M780.2 454.5h.1M782.8 455.1h.1M785.4 454.9h.1M790.6 454.8h.1M793.2 454h.1M793.2 456.6h.1M795.8 453.2h.1M795.8 455.8h.1M798.4 455.5h.1M801 453.8h.1M806.2 454.5h.1M808.8 455.5h.1M811.4 455.2h.1M814 453.6h.1M814 456.2h.1M816.6 453.7h.1M816.6 456.3h.1M819.2 453.8h.1M821.8 455.3h.1M827 454h.1M834.8 454.1h.1M837.4 454h.1M840 453.1h.1M840 455.7h.1M842.6 454.5h.1M845.2 454.3h.1M847.8 455.5h.1M850.4 454.9h.1M853 455.4h.1M860.8 454.1h.1M863.4 454.1h.1M868.6 453.9h.1M871.2 452.9h.1M871.2 455.5h.1M876.4 454.6h.1M881.6 454.5h.1"/><path stroke="#ccc726" stroke-width="1.4" d="M1275 406.8L1280.4 406M750.7 584.2L760.9 585.3M758.8 580L767.6 583.6M710.8 580.9L723.3 580.9M740.6 575.4L749.9 574.8M756 576.1L766.4 576.7M746.7 581.2L752.9 584.4M867.7 547.7L855.4 559.6M891.1 536.9L897.8 538.6M834.3 546.5L850.8 545.6M884.3 555L890.4 557.2M867.2 549.6L874.6 550.3M887.4 559.2L892.5 564.1M880.3 559.3L893.9 560.1M869.6 544.1L862.3 546.1M905.1 659.4L915.2 660.3M944.5 663.1L958.1 664.9M920.2 668.3L928.4 669.4M933.8 659.3L943.8 658.4M908.4 660.5L924 659.6M941.6 660.9L950.5 668.1M1111.7 600.8L1098 611.8M1141.4 598.1L1150.2 599M1103.7 593.1L1091.3 604.1M1142.2 596.7L1153 597.7M1114.8 598.2L1126.7 599.2M1115.7 594.5L1104.6 604.9M1110.5 602.9L1119.5 602.2M1098.1 599.4L1111 598.6M1117.5 695.4L1130 695.3M1124.3 686L1132 691.6M1102.8 693L1094.2 699.7M1112.3 686.3L1119.2 686M1121.4 685.5L1130.5 685.7M1101.5 685L1093.3 689.1M1105.2 688.9L1100.9 691.9M1106.3 684L1119.8 683.3M1096.6 689.9L1102.2 689.2"/><path stroke="#ccc726" stroke-width="1.5" opacity="0.75" d="M640 454.9h.1M645 452.9h.1M650.3 451.9h.1M655.2 451.1h.1M660.8 454h.1M666.1 453.6h.1M670.9 452.4h.1M676.2 450.5h.1M681.8 452.5h.1M687.1 451.4h.1M687.2 454.4h.1"/><path stroke="#ccc726" stroke-width="1.5" opacity="0.95" d="M1104 414L1146 414M1104 416.3L1146 416.3"/><path stroke="#ccc726" stroke-width="1.5" d="M666.6 489.6L660.1 493.1M665 489.4L672.7 489.4M1127.4 441L1140.2 441.5M1145.4 436L1150.7 437.6M1127.5 441.4L1138.4 442.8M1140 436L1144.7 440M1135.6 445.4L1151.4 445.8M1131.4 451.3L1119 459.9M1153.5 450.8L1163.3 460M1320.1 437.5L1332.8 436M1262.7 433L1270.2 432.3M1314.4 441.7L1327.2 443M1295.1 432.1L1302.9 431.6M1314.5 446.3L1327.7 450.8M1260.5 445.7L1273.4 448M1271.2 431.5L1279.1 434.4M1269.6 445.1L1274.4 446.2M1260.2 444L1273.9 442M1259.5 446.9L1265.3 446.3M1276.3 432.6L1284.3 436M1269 449.1L1282.1 448.6M1278.9 450.1L1283.8 452.3M1327.7 444.1L1341.1 444.7M1293.6 448L1301 449.7M1294.5 433.5L1299.6 434.2M1304.2 444.1L1317.1 449.4M1252.1 438.4L1258.7 441.3M1248.7 438.1L1257.9 441.8M1248.1 412.7L1252.9 412.7M1341.9 537.4L1328.2 543.8M1342.3 540L1322 544.6M1333.5 540.2L1320.9 548.3M1338.6 537L1327.1 541.8M1343.1 538L1325.8 546.6M808 504.3L811.6 507.4M680 498.9L674.8 502.2M689.7 514.8L699.4 514.8M684 488.8L693.1 488.2M677.7 492.5L684.5 493M686.4 505.5L689.9 507.9M941.5 539.8L949.3 540.6M918.4 536.8L932.5 537.6M941 544.3L955.8 546M933.5 534.2L945.7 535.6M1199.6 515.1L1218.7 510.2M1171.9 518.1L1184 515.1M1204.7 503.3L1212.8 500.5M1143.7 512.2L1159.2 504.7M1190.4 518.2L1199.1 514.1M1155.9 528.2L1174.6 530.1M1143.5 511.3L1156.6 511M1203.5 491.6L1219.2 490.4M1146.8 524L1164.7 519.6M1217 493.4L1233.9 490.6M1205.7 508.9L1217 503.7M1191.8 500.5L1210.7 499M1178 522.3L1192 524.4M1189.9 497.2L1202.2 497.2M1210.1 513.9L1217 510M1230.5 521.9L1241.5 520.8"/><path stroke="#ccc726" stroke-width="1.6" d="M1001.4 392.7h.1M992.1 393.7h.1M796.9 593.6L790.2 595.9M791.8 598.3L785.1 603.9M796.9 587.2L792.9 589.7M790.5 595.7L784.9 599.7M798.9 589.3L803.5 590.6M794 587L788.8 588.9"/><path stroke="#ccc726" stroke-width="1.9" opacity="0.9" d="M695.8 627.6h.1M698.2 628.1h.1M700.5 628.6h.1M702.9 629.1h.1M705.2 629.6h.1M707.6 630.1h.1M709.9 630.6h.1M712.3 631.1h.1M714.6 631.6h.1M717 632.1h.1M719.3 632.6h.1M733 634.3h.1M735.2 635.3h.1M737.4 636.2h.1M739.7 637.1h.1M741.9 638h.1M744.1 639h.1M746.3 639.9h.1M748.5 640.8h.1M750.7 641.7h.1M752.9 642.7h.1M756.7 647.9h.1M758.8 648.9h.1M761 650h.1M763.1 651.1h.1M765.2 652.2h.1M767.4 653.2h.1M769.5 654.3h.1M770.2 688.4h.1M772.5 688.8h.1M774.9 689.2h.1M777.3 689.6h.1M779.7 690h.1M782 690.4h.1M784.4 690.8h.1M786.8 691.2h.1M789.1 691.6h.1M800.6 676.6h.1M803 676.9h.1M805.3 677.3h.1M807.7 677.6h.1M810.1 678h.1M812.5 678.3h.1M814.9 678.6h.1M817.2 679h.1M819.6 679.3h.1M822 679.6h.1M864.8 776.3h.1M867.2 776.8h.1M869.5 777.2h.1M871.9 777.7h.1M874.2 778.2h.1M876.6 778.6h.1M878.9 779.1h.1M881.3 779.6h.1M915.5 762.8h.1M916.4 765h.1M917.3 767.2h.1M918.2 769.5h.1M919.1 771.7h.1M920 773.9h.1M920.8 776.1h.1M921.7 778.4h.1M837.8 749.3h.1M839.6 750.8h.1M841.5 752.3h.1M843.4 753.8h.1M845.3 755.3h.1M847.1 756.7h.1M849 758.2h.1M850.9 759.7h.1M852.8 761.2h.1M854.6 762.7h.1"/><path stroke="#ccc726" stroke-width="2" opacity="0.9" d="M1165 420L1170 440"/><path stroke="#ccc726" stroke-width="2" opacity="0.95" d="M1268 614.1h.1M1268.4 616.6h.1M1268.8 619.2h.1M1269.1 621.8h.1M1269.5 624.4h.1M1269.8 627h.1M1270.2 629.5h.1M1270.5 632.1h.1M1270.9 634.7h.1M1271.2 637.3h.1M1271.6 639.8h.1M1271.9 642.4h.1M1272.3 645h.1M1272.6 647.6h.1"/><path stroke="#ccc726" stroke-width="2" d="M771.8 752.2h.1M686.1 796.6h.1M745.9 810.7h.1M761.1 851h.1M693.7 773.2h.1M803.3 788h.1M1101.8 679.8h.1M1100.7 686h.1M1100.4 651.2h.1M1113 663.9h.1"/><path stroke="#ccc726" stroke-width="3" d="M677 428h.1M677.4 430h.1"/><path stroke="#b7cb28" stroke-width="1.1" opacity="0.55" d="M1079.7 348.6L1089.5 348.6M1079.5 357.2L1085.9 357.2M1082.8 361.5L1089.5 361.5"/><path stroke="#b7cb28" stroke-width="1.1" opacity="0.6" d="M1107 357.2L1123.8 357.2M1106.6 361.5L1126.3 361.5"/><path stroke="#b7cb28" stroke-width="1.2" opacity="0.6" d="M1080 342.3h.1M1080 345.3h.1M1080 348.3h.1M1080 351.3h.1M1088.7 336.3h.1M1088.7 339.3h.1M1088.7 342.3h.1M1088.7 345.3h.1M1088.7 348.3h.1M1102.8 340.4h.1M1102.8 343.4h.1M1102.8 346.4h.1M1102.8 349.4h.1"/><path stroke="#b7cb28" stroke-width="1.3" opacity="0.95" d="M889 374L894.9 374M895.5 374L906 374M906.3 374L915 374M917.1 374L921.9 374M923 374L933.1 374M934.7 374L941 374M941.1 374L948.1 374M949 374L958.4 374M959.2 374L963 374"/><path stroke="#b7cb28" stroke-width="1.3" d="M1439.8 466.7L1445.9 471.5M1431.4 460.3L1439 463.1M1433.6 454.2L1444.7 457.7M1422.9 454.1L1415.3 457.6M1423.7 462.1L1413.8 465.8M1423.7 465.4L1416.4 471.3M1433.1 457.4L1438.1 460.6M1435.4 455.1L1439.8 457.5M1437.6 461L1445.3 466.2"/><path stroke="#b7cb28" stroke-width="1.4" opacity="0.9" d="M736 452.8h.1M738.6 450.9h.1M741.2 451.6h.1M746.4 452.3h.1M749 451.4h.1M751.6 450.4h.1M751.6 453h.1M754.2 453h.1M756.8 452.5h.1M762 452.7h.1M767.2 449.3h.1M767.2 451.9h.1M769.8 450.4h.1M769.8 453h.1M772.4 452.7h.1M775 452h.1M777.6 449.6h.1M777.6 452.2h.1M780.2 449.3h.1M780.2 451.9h.1M782.8 452.5h.1M785.4 452.3h.1M790.6 449.6h.1M790.6 452.2h.1M793.2 451.4h.1M795.8 450.6h.1M798.4 450.3h.1M798.4 452.9h.1M801 451.2h.1M806.2 451.9h.1M808.8 450.3h.1M808.8 452.9h.1M811.4 450h.1M811.4 452.6h.1M814 451h.1M816.6 451.1h.1M819.2 451.2h.1M821.8 450.1h.1M821.8 452.7h.1M827 448.8h.1M827 451.4h.1M834.8 448.9h.1M834.8 451.5h.1M837.4 448.8h.1M837.4 451.4h.1M840 450.5h.1M842.6 449.3h.1M842.6 451.9h.1M845.2 449.1h.1M845.2 451.7h.1M847.8 450.3h.1M847.8 452.9h.1M850.4 449.7h.1M850.4 452.3h.1M853 450.2h.1M853 452.8h.1M860.8 448.9h.1M860.8 451.5h.1M863.4 448.9h.1M863.4 451.5h.1M868.6 451.3h.1M871.2 450.3h.1M876.4 449.4h.1M876.4 452h.1M881.6 449.3h.1M881.6 451.9h.1"/><path stroke="#b7cb28" stroke-width="1.4" d="M1262.1 408.2L1269.3 408.3M1261 408L1269.1 408.8M737 574.9L732.9 578.6M736.6 572.3L748.1 573.4M752.2 581.2L764 579.5M736 573.5L725.7 577.5M736.8 564.9L731.1 569.6M744.2 568.1L751.1 568M724.7 567.7L719.3 569.7M738.4 565.3L750.9 566.9M872.3 521.7L887.6 527.5M867.7 530.6L878.9 531.9M872.5 544.3L885.8 543M868.8 526.2L859.6 532.3M868.1 539.6L885.1 538.5M834.5 548.7L849.1 547.1M882.7 547.1L889.7 546.1M855.7 535.9L845.4 544.5M879.3 550.1L888 548.8M849.9 534.9L837.8 539.9M854.5 546.6L844.9 552.1M896 543L903.1 548.7M858 530.3L864.8 530.3M858.4 524.2L869.1 524.3M838.9 547.5L853.4 548.6M856.4 526.6L863 526.5M924.8 640.9L939.9 642.7M936.9 665.1L949.5 663.6M945.1 640.3L953.2 640.4M910.2 655.5L895.4 664.5M935.4 659.2L944.6 659.8M947.6 661.3L957.7 668.7M907.9 643.6L922.9 643.2M937.9 633.9L944.9 633.8M904.4 641.9L916.3 642.6M1113.7 596.4L1105.2 602.7M1099.3 593.4L1112.1 592.6M1148.5 599.9L1161.3 609.3M1131.6 599.1L1137.8 602.7M1109.5 597.8L1125.9 599.5M1119.4 593.1L1113.7 595.2M1125.7 589.1L1140.1 597.9M1106.3 678L1113.5 677.2M1106.1 676.5L1114.2 676.5M1125.6 686.7L1134.6 687.8M1091.4 681.6L1102.9 680.3M1106.9 678.5L1114.5 678.7M1117.4 679.3L1124.1 684.4M1113.2 681.3L1122.9 690.2"/><path stroke="#b7cb28" stroke-width="1.5" opacity="0.75" d="M640 451.9h.1M645 449.9h.1M650.3 448.9h.1M655.3 448.1h.1M660.8 451h.1M666 447.6h.1M666.1 450.6h.1M671 449.4h.1M676.3 447.5h.1M681.8 449.5h.1M687.1 448.4h.1"/><path stroke="#b7cb28" stroke-width="1.5" opacity="0.95" d="M1104 411.7L1146 411.7"/><path stroke="#b7cb28" stroke-width="1.5" d="M673 482.8L676.8 485.5M680.2 487.7L684.1 489.3M1128.3 434.8L1140.8 434.7M1136.8 443.9L1146.3 453.1M1120.7 443.3L1108.3 452.4M1134.8 434.6L1144.2 434.6M1121.4 443.7L1127.5 444.2M1133.3 433.9L1138.4 433.7M1140.7 432L1146.3 435.1M1122.5 430.8L1134 431.4M1146.2 442.4L1158.4 448M1276.3 437.7L1287.9 442.6M1304.2 441.5L1312 443.7M1299.7 436L1306.4 436.3M1296 446.8L1304.2 449.2M1281.7 449.9L1286.9 450.5M1305.3 445.4L1313.9 445.1M1294.5 445.8L1300.1 446.8M1339.1 536.9L1326.8 543.2M1353.4 526.9L1344.5 534M1339.5 535.2L1324.6 539.6M1347.1 535.3L1327.7 541.7M792.9 501.7L798.5 501M777.8 501.6L788.7 502.4M801 503.9L811.4 508.5M784.1 500.6L777.7 503.5M800.3 504.5L814.3 504.1M777.1 503.8L783.7 504.6M682.5 493.7L677.2 497.6M687.5 495.1L695.5 498.7M690.2 500.3L693.9 500.4M680.8 492.8L676.8 496.6M685.1 490.3L691.8 492.5M678.3 493.5L685.7 492.6M930.2 544L940.4 543.9M933.9 534.7L948.6 533.9M927.4 540.2L917.8 544.9M921.8 535L929.7 534.4M921.3 536.3L927.4 536.7M920.9 535.6L915 539.6M941.4 541.3L956 542.2M1206.2 505.1L1215.1 503.6M1168.3 519.5L1177.5 517.3M1169.1 508.9L1182.7 509.3M1163.1 515.5L1172.8 511.8M1179.8 515.3L1196.1 512.5M1216.4 507.6L1230 502.1M1181.1 503.7L1196.2 504M1204 507.8L1217.5 508.1M1218.8 515.8L1210.1 521.1M1238.2 513L1245.8 515.3M1244 512.8L1257.6 511.2M1211.4 513.8L1221.2 512.6M1227.4 516.8L1220.3 522.1M1212 515.9L1207.2 519.2M1226 520.8L1220.1 525.5"/><path stroke="#b7cb28" stroke-width="1.6" d="M998.1 405.6h.1M1000.6 395.5h.1M1000 403.4h.1M1006.1 386.6h.1M1003.7 399.9h.1M996 384.6h.1M995 385.3h.1M798 590.7L804.1 594.3"/><path stroke="#b7cb28" stroke-width="1.8" opacity="0.9" d="M1129.4 744.9h.1M1131.7 744.6h.1M1134.1 744.3h.1M1136.5 743.9h.1M1138.9 743.6h.1M1141.2 743.2h.1M1108.3 730h.1M1110.7 730.1h.1M1113.1 730.2h.1M1115.5 730.3h.1M1117.9 730.4h.1M1120.3 730.5h.1M1122.7 730.6h.1M1125.1 730.7h.1M1119.2 722.4h.1M1121.6 722.5h.1M1124 722.5h.1M1126.4 722.5h.1M1128.8 722.5h.1M1131.2 722.6h.1M1133.6 722.6h.1M1087.9 743.7h.1M1090.3 743.5h.1M1092.6 743.3h.1M1095 743.1h.1M1097.4 742.8h.1M1099.8 742.6h.1M1102.2 742.4h.1M1104.6 742.1h.1M1099.8 722.7h.1M1102.2 722.1h.1M1104.5 721.6h.1M1106.8 721h.1M1109.1 720.4h.1M1111.5 719.8h.1M1113.8 719.2h.1M1116.1 718.6h.1M1116.1 744.5h.1M1118.4 743.9h.1M1120.7 743.3h.1M1123 742.7h.1M1125.3 742h.1M1127.7 741.4h.1M1130 740.8h.1M1132.3 740.1h.1M1134.6 739.5h.1M1138.4 754.2h.1M1140.8 753.6h.1M1143.1 753.1h.1M1145.5 752.6h.1M1147.8 752.1h.1M1150.1 751.6h.1M1152.5 751.1h.1M1154.8 750.5h.1M1157.2 750h.1M1123.2 738.3h.1M1125.6 738.2h.1M1128 738.2h.1M1130.4 738.1h.1M1132.8 738.1h.1M1135.2 738h.1M1137.6 737.9h.1M1140 737.9h.1M1104.5 762.7h.1M1106.9 762.4h.1M1109.3 762h.1M1111.7 761.7h.1M1114 761.3h.1M1116.4 761h.1M1118.8 760.6h.1M1122.9 728.5h.1M1125.3 728.1h.1M1127.6 727.7h.1M1130 727.4h.1M1132.4 727h.1M1134.8 726.6h.1M1137.1 726.2h.1M1139.5 725.8h.1M1141.9 725.5h.1M1133.2 728.2h.1M1135.6 728h.1M1138 727.7h.1M1140.4 727.4h.1M1142.8 727.2h.1M1094.4 740.9h.1M1096.8 740.9h.1M1099.2 740.8h.1M1101.6 740.8h.1M1104 740.8h.1M1106.4 740.7h.1"/><path stroke="#b7cb28" stroke-width="1.9" opacity="0.9" d="M729.6 637.7h.1M730.5 640h.1M731.4 642.2h.1M732.3 644.4h.1M733.2 646.6h.1M734.1 648.9h.1M735 651.1h.1M735.9 653.3h.1M810.7 776.3h.1M812.1 778.3h.1M813.4 780.3h.1M814.7 782.3h.1M816.1 784.3h.1M817.4 786.3h.1M818.7 788.3h.1M820.1 790.3h.1M821.4 792.3h.1M822.7 794.3h.1M824 796.3h.1M712.7 629.3h.1M715.1 629.9h.1M717.4 630.4h.1M719.7 631h.1M722 631.6h.1M724.4 632.2h.1M726.7 632.8h.1M729 633.4h.1M731.4 633.9h.1M797.2 793.2h.1M799.4 794.3h.1M801.5 795.3h.1M803.7 796.4h.1M805.8 797.5h.1M808 798.6h.1M810.1 799.6h.1"/><path stroke="#b7cb28" stroke-width="2" d="M1091.3 645.6h.1M1088.9 655.1h.1M1097 683.7h.1M1090.2 667.7h.1M1105.1 639.7h.1M1104 621.1h.1"/><path stroke="#a2ce2b" stroke-width="1.1" opacity="0.55" d="M1083.5 335.7L1092.2 335.7M1082.7 340L1090.6 340M1082 344.3L1092.5 344.3"/><path stroke="#a2ce2b" stroke-width="1.1" opacity="0.6" d="M1107.1 348.6L1117.5 348.6M1105.4 352.9L1124.8 352.9"/><path stroke="#a2ce2b" stroke-width="1.2" opacity="0.6" d="M1080 330.3h.1M1080 333.3h.1M1080 336.3h.1M1080 339.3h.1M1088.7 324.3h.1M1088.7 327.3h.1M1088.7 330.3h.1M1088.7 333.3h.1M1102.8 328.4h.1M1102.8 331.4h.1M1102.8 334.4h.1M1102.8 337.4h.1"/><path stroke="#a2ce2b" stroke-width="1.3" opacity="0.95" d="M889 371.2L898.3 371.2M899.4 371.2L906.7 371.2M908.7 371.2L918.5 371.2M918.9 371.2L928 371.2M928.9 371.2L936.6 371.2M937.2 371.2L943.5 371.2M944.4 371.2L950.8 371.2M950.9 371.2L955.7 371.2M957.1 371.2L960.6 371.2M961.1 371.2L963 371.2"/><path stroke="#a2ce2b" stroke-width="1.3" d="M1442.3 441.5L1448 441.5M1436.1 457.5L1441.3 460.2M1441.4 442.8L1444.7 445.3M1439.5 454.3L1446.5 457.1M1420.4 456.9L1409.3 460M1429.9 460.1L1425 462.8M1424.3 446.6L1419 451.3M1438.6 446.2L1444.1 446.9"/><path stroke="#a2ce2b" stroke-width="1.4" opacity="0.9" d="M736 447.6h.1M736 450.2h.1M738.6 448.3h.1M741.2 446.4h.1M741.2 449h.1M746.4 447.1h.1M746.4 449.7h.1M749 448.8h.1M751.6 447.8h.1M754.2 447.8h.1M754.2 450.4h.1M756.8 447.3h.1M756.8 449.9h.1M762 447.5h.1M762 450.1h.1M767.2 446.7h.1M769.8 447.8h.1M772.4 447.5h.1M772.4 450.1h.1M775 446.8h.1M775 449.4h.1M777.6 447h.1M780.2 446.7h.1M782.8 447.3h.1M782.8 449.9h.1M785.4 447.1h.1M785.4 449.7h.1M790.6 447h.1M793.2 448.8h.1M795.8 448h.1M798.4 447.7h.1M801 446h.1M801 448.6h.1M806.2 446.7h.1M806.2 449.3h.1M808.8 447.7h.1M811.4 447.4h.1M814 448.4h.1M816.6 448.5h.1M819.2 446h.1M819.2 448.6h.1M821.8 447.5h.1M827 446.2h.1M834.8 446.3h.1M837.4 446.2h.1M840 445.3h.1M840 447.9h.1M842.6 446.7h.1M845.2 446.5h.1M847.8 447.7h.1M850.4 447.1h.1M853 447.6h.1M860.8 446.3h.1M863.4 446.3h.1M868.6 446.1h.1M868.6 448.7h.1M871.2 445.1h.1M871.2 447.7h.1M876.4 446.8h.1M881.6 446.7h.1"/><path stroke="#a2ce2b" stroke-width="1.4" d="M1319.1 395.9L1327.5 398.9M1326.4 401.1L1330.1 399.7M1314.2 405.6L1317.3 405.7M1298.1 404.7L1301.1 405.2M1284.1 410.9L1290.7 410.2M1278.1 410.2L1287.6 409.4M1267.4 413.2L1273.5 412.6M1258.3 407.7L1266.7 406.5M1267.6 408.2L1273.9 407.7M1256.6 405.2L1266 404.5M1261.9 414.9L1267.9 415.7M1277.8 408.2L1287.1 407M1264.3 411.3L1267.4 411.1M759.6 559.3L764.7 559.1M754.4 570.8L761.3 573.1M763.7 579.1L768.1 583.3M740 551.3L734.4 554.9M743.5 555.6L752.4 554.5M743.4 563.8L750.7 566.1M718.2 575L709.7 582.4M872.1 525.6L881.1 534.5M878.8 520.4L895.2 521.1M882 522L894.5 522.4M856.9 532.5L873.2 530.9M869.2 530.8L857.6 538.1M857.7 525.1L852.2 530.1M845.3 532.2L859.3 532.7M856 536.2L871.9 534M874.5 533.1L881.7 532.9M885.9 527.8L892.3 527.5M859.2 537.7L850.9 541.8M944.1 623.9L954.2 622.5M919.2 627L930.7 627.6M927.1 640.6L935.3 640.6M922.2 627L932.3 625.6M942.9 632.3L953 636.6M928.8 631.3L946.2 631.1M915.2 620.3L899.6 625.7M928.6 643.4L940.4 642M914.2 625.2L927.1 623.6M908.8 648.9L923.3 649.4M921.3 638.4L908.8 650.5M916.1 623.9L900.3 628.9M1133.1 587.5L1146.3 591.7M1132.1 586L1146 592.5M1108.6 583L1124.7 582.6M1102.7 590.1L1111.8 589.7M1136.5 588L1146.9 587.4M1111.6 581.7L1129 581.5M1101.8 676.5L1108.1 677.1M1115.9 681.9L1128.3 682.9M1113.6 663.7L1120.5 664.7M1114.2 669.1L1122.3 668.9"/><path stroke="#a2ce2b" stroke-width="1.5" opacity="0.75" d="M640 448.9h.1M645.1 443.9h.1M645 446.9h.1M650.3 442.9h.1M650.3 445.9h.1M655.3 445.1h.1M660.8 448h.1M666 444.6h.1M671 443.4h.1M671 446.4h.1M676.3 444.5h.1M681.7 443.5h.1M681.7 446.5h.1M687 445.4h.1"/><path stroke="#a2ce2b" stroke-width="1.5" opacity="0.95" d="M1104 407.1L1146 407.1M1104 409.4L1146 409.4"/><path stroke="#a2ce2b" stroke-width="1.5" d="M669.4 486.1L677.2 486.6M663.2 489.8L656.3 492.3M1127.8 431.2L1132.9 431.1M1357.8 521.1L1342.5 525.9M1356.1 528.7L1335.6 533.1M1351.8 524L1337.6 532.5M1352.7 527.7L1337.8 531.8M1353.7 528.6L1332.2 536.2M1348.6 526.9L1339.2 530.8M1357.7 524.3L1342.1 528.9M787.8 495L792.9 495.5M804 503.1L811.4 508.9M799.5 494.5L802.8 497.6M785.2 499.2L778.3 504.2M787.1 500.4L797.1 499.9M793.5 496L800.3 495.9M793.5 504L802.5 506.8M769.6 499.9L776.1 500.7M937.9 524.3L946.9 531.3M921.7 523.9L936.3 525.4M923.3 532.5L932.9 533M921.8 534.2L911.3 538.8M919.7 527.1L934.1 525.7M922.5 533.1L933.7 531.9M923.8 532.4L935.3 533.6M924.5 538.1L915.9 541.2M935.1 521.7L941.2 522.1M918.7 531L932 530.4M933.6 534.5L943.6 535.1M935.7 535.4L946.5 535.3M930.8 523.1L939.4 523.3M935.9 527.8L949.2 529.2M1196.1 503.8L1204.9 505.1M1208 493.7L1223.7 488.9M1190.2 518.5L1203.4 518.8M1223.6 494.1L1242.9 492.4M1205.6 513.7L1212 512.6M1189.3 497.5L1205.5 497M1203.2 503.6L1222.7 504.5M1217.8 502.5L1223.8 501.1M1180.8 526.6L1197.9 521.6M1228.5 498.7L1236.1 499.2M1170.9 521.3L1179.1 520M1224.2 510.9L1232.4 506.3M1184.3 504.1L1201.1 495.4M1184.9 504.3L1199.5 505.6M1186.3 506.8L1199.4 499.9M1232.7 511.2L1242.1 518.2M1224.2 515.6L1234.2 516.6M1254.5 518.8L1263 523.4M1220.7 520L1212.5 526M1245.9 518L1252.6 520M1249.9 521.4L1260.2 530M1217.7 508.5L1209.6 515.3M1202.6 518.6L1211.1 519.8M1216.5 511.4L1211.6 515.8M1210.1 516.5L1199.4 521.4M1217.1 520.3L1211.4 524.9M1205.7 517.8L1212.4 518.6"/><path stroke="#a2ce2b" stroke-width="1.6" d="M1002.4 399.6h.1M997.2 392.4h.1M997.3 387.5h.1M995.9 403.3h.1M1004.6 395h.1M1007.2 400.8h.1M1005.3 388h.1M794.7 578.2L788.2 583.3M796.2 576.6L790.5 579.3M794.1 574.3L787.2 580.3"/><path stroke="#a2ce2b" stroke-width="2" d="M1092.9 665h.1M1106.1 629.5h.1M1108.8 630.5h.1M1097.6 629h.1"/><path stroke="#8dd22d" stroke-width="1.1" opacity="0.55" d="M1078.3 322.8L1086.1 322.8M1079.9 327.1L1091.5 327.1M1079.6 331.4L1087.9 331.4"/><path stroke="#8dd22d" stroke-width="1.1" opacity="0.6" d="M1107 340L1121.7 340M1105.5 344.3L1124.6 344.3"/><path stroke="#8dd22d" stroke-width="1.2" opacity="0.6" d="M1080 321.3h.1M1080 324.3h.1M1080 327.3h.1M1088.7 312.3h.1M1088.7 315.3h.1M1088.7 318.3h.1M1088.7 321.3h.1M1102.8 316.4h.1M1102.8 319.4h.1M1102.8 322.4h.1M1102.8 325.4h.1"/><path stroke="#8dd22d" stroke-width="1.3" opacity="0.95" d="M889 365.6L894.4 365.6M896.7 365.6L903.9 365.6M905.7 365.6L913.4 365.6M914.6 365.6L919.6 365.6M920 365.6L931.3 365.6M932.6 365.6L940.3 365.6M941.7 365.6L952 365.6M952.6 365.6L957.1 365.6M959.2 365.6L963 365.6M889 368.4L899.4 368.4M901.7 368.4L912.5 368.4M912.6 368.4L919 368.4M921.1 368.4L931.5 368.4M931.8 368.4L936.2 368.4M936.8 368.4L940.7 368.4M941.6 368.4L951.8 368.4M953.1 368.4L960.2 368.4M960.4 368.4L963 368.4"/><path stroke="#8dd22d" stroke-width="1.3" d="M1429.7 449.5L1423.9 451.4M1431.4 444.7L1440.8 444.2M1439 450.8L1449.3 456.4M1439.6 434.3L1446.9 438.1M1437.8 441.2L1442.3 442.9M1440.7 436.2L1446.2 438.1"/><path stroke="#8dd22d" stroke-width="1.4" opacity="0.9" d="M736 445h.1M738.6 443.1h.1M738.6 445.7h.1M741.2 443.8h.1M746.4 444.5h.1M749 443.6h.1M749 446.2h.1M751.6 445.2h.1M754.2 445.2h.1M756.8 444.7h.1M762 444.9h.1M767.2 444.1h.1M769.8 445.2h.1M772.4 444.9h.1M775 444.2h.1M777.6 441.8h.1M777.6 444.4h.1M780.2 444.1h.1M782.8 444.7h.1M785.4 444.5h.1M790.6 441.8h.1M790.6 444.4h.1M793.2 443.6h.1M793.2 446.2h.1M795.8 442.8h.1M795.8 445.4h.1M798.4 442.5h.1M798.4 445.1h.1M801 443.4h.1M806.2 444.1h.1M808.8 442.5h.1M808.8 445.1h.1M811.4 442.2h.1M811.4 444.8h.1M814 443.2h.1M814 445.8h.1M816.6 443.3h.1M816.6 445.9h.1M819.2 443.4h.1M821.8 442.3h.1M821.8 444.9h.1M827 443.6h.1M834.8 443.7h.1M837.4 443.6h.1M840 442.7h.1M842.6 444.1h.1M845.2 443.9h.1M847.8 442.5h.1M847.8 445.1h.1M850.4 441.9h.1M850.4 444.5h.1M853 442.4h.1M853 445h.1M860.8 443.7h.1M863.4 443.7h.1M868.6 443.5h.1M871.2 442.5h.1M876.4 441.6h.1M876.4 444.2h.1M881.6 444.1h.1"/><path stroke="#8dd22d" stroke-width="1.4" d="M1317.5 398.5L1323.7 400M1302.7 396.6L1308 396.5M1321.5 400.2L1329.4 401.6M1312.1 419.9L1316.2 420.3M1297 403.3L1303.2 400.4M1305.1 408.3L1309.1 410.3M1305 403.1L1311.6 406.1M1317.3 398.4L1320.7 398.8M1306.1 396.9L1313.1 398.7M1300.1 412.7L1307 412.3M1323.1 402.2L1330.2 405.6M1260 410L1265.9 410M1256.7 410.4L1265 409.8M1263.5 407.1L1271.5 406.8M1258.4 414L1266.1 414.4M1284.6 410.3L1294.4 410.9M1281.2 409.1L1286.4 409M741.7 557.9L748.8 557.6M755.5 567.7L764.8 570.8M758.2 556.5L761.9 560.2M750.8 555.5L758.1 560.4M760.1 557.9L765.2 562.7M725.6 565.6L719 568.5M757.6 561.6L761.3 565.3M731.8 561.1L740.9 560M758.8 548L766.3 551.6M745.4 569.7L751.1 575.3M753.3 563.3L762.9 568.5M870.1 521.9L877.1 520.9M850.7 526.4L860.6 526.9M858.7 504.4L843.7 512.5M846.6 523.3L855 523.6M866.9 516.4L853.4 526.2M859.5 509.2L869.4 508.9M860.6 518.8L871.8 520.2M859.3 507.6L866.7 508.5M917.7 632.6L905.6 643.7M927.7 619.5L944.4 621.3M925.1 630.5L937.1 629.3M919.6 618.8L937 617.7M944 624.8L955 625M1122.9 581.6L1134.9 585.2M1116.5 583.5L1103.7 595.9M1111.6 580.3L1101.6 585.6M1123.7 580.6L1141.6 581.3M1132.7 581.3L1148.7 582.4M1117.6 586.6L1107.6 591M1100.8 678.2L1109.9 677.9M1094.8 654.4L1107 654.8M1113.6 678.8L1123.4 686.6M1099.9 659.2L1094.5 663.5M1113.1 669.9L1121.1 669.9"/><path stroke="#8dd22d" stroke-width="1.5" opacity="0.75" d="M640 445.9h.1M645.1 440.9h.1M650.3 439.9h.1M655.4 439.1h.1M655.4 442.1h.1M660.8 445h.1M666 441.6h.1M671.1 440.4h.1M676.3 438.5h.1M676.3 441.5h.1M681.7 440.5h.1M687 442.4h.1"/><path stroke="#8dd22d" stroke-width="1.5" opacity="0.95" d="M1104 402.5L1146 402.5M1104 404.8L1146 404.8"/><path stroke="#8dd22d" stroke-width="1.5" d="M674.9 474.6L678 474.4M676.4 476.3L679.3 479M668.5 475.2L673.3 475.8M667.2 473.8L660.9 475.9M668.2 479.7L662.6 481.3M662.8 472.9L669 473.4M1362.8 520.8L1350.6 525.4M1372.7 516.7L1350.9 525.1M1358.6 524.6L1343.5 529.6M781.3 497.9L787.8 498.8M777.9 489.1L771 491M789.1 491.7L793.9 492.1M772.5 492.4L785.1 491M798.2 501.7L804.1 501.1M801.2 491L809.1 495M791 499.4L803.5 502.8M783.9 499.7L795.3 499M939.1 525L949.7 530.5M937.5 530.2L944.3 530.8M1196.4 508.5L1211.8 505.9M1256 486.2L1264.1 487.4M1206.5 501.3L1222.2 495.7M1224.1 507.8L1242.2 499.5M1213.9 503.2L1220.8 502.1M1255.1 489.2L1262.6 486.2M1194.5 503.5L1201.4 499.7M1250.3 491.9L1263.4 487.1M1184 518.8L1200.4 515.7M1219.1 492.6L1226.9 491.2M1265.1 484.8L1282.1 476.5M1228.1 507.7L1237.7 505.5M1220.9 500L1212.3 503.8M1217.2 498.6L1212.5 502.3M1230.5 511.1L1218.3 517.4M1215.7 509.2L1222.3 508.6M1227 502.4L1234.3 502.4M1244 509.8L1248.7 514M1228.2 516.3L1216.7 523.4M1236 501.2L1242 506.5M1240.9 510.3L1250.4 518.1M1223 509.4L1214.4 513.2M1229.3 513.3L1219.8 522.6M1234.5 513.5L1248.4 515.1M1250 508.5L1259.1 509"/><path stroke="#8dd22d" stroke-width="1.6" d="M795.2 570.4L786.9 574.8M791.9 580.9L786.6 584.7M797.8 573.2L806.1 572.1M798.1 578.4L801.9 579.9M796.4 570.1L788.6 573M799.8 574.8L805.4 577.9"/><path stroke="#8dd22d" stroke-width="2" d="M1113.3 646.4h.1M1095.8 633.1h.1M1093.4 667.5h.1M1089.6 642.7h.1M1099.7 670.8h.1M1110.7 636.9h.1M1109.7 661.9h.1"/><path stroke="#78d630" stroke-width="1.1" opacity="0.55" d="M1083.8 309.9L1094 309.9M1083 314.2L1093.7 314.2"/><path stroke="#78d630" stroke-width="1.1" opacity="0.6" d="M1105.3 327.1L1119.7 327.1M1107.9 331.4L1120.5 331.4"/><path stroke="#78d630" stroke-width="1.2" opacity="0.6" d="M1080 309.3h.1M1080 312.3h.1M1080 315.3h.1M1080 318.3h.1M1088.7 300.3h.1M1088.7 303.3h.1M1088.7 306.3h.1M1088.7 309.3h.1M1102.8 304.4h.1M1102.8 307.4h.1M1102.8 310.4h.1M1102.8 313.4h.1"/><path stroke="#78d630" stroke-width="1.3" opacity="0.95" d="M889 362.8L897.3 362.8M899.8 362.8L904.9 362.8M906.5 362.8L916.2 362.8M917.1 362.8L926.5 362.8M927.5 362.8L935.3 362.8M936.8 362.8L945.9 362.8M946.7 362.8L955.4 362.8M956.7 362.8L961.7 362.8"/><path stroke="#78d630" stroke-width="1.3" d="M1442.2 436.3L1447.4 440.8M1433.3 433.6L1426.8 436.8M1436.7 434.8L1445.8 434.2M1442 426.7L1449.5 431.6M1427.2 432.9L1417.8 440.3"/><path stroke="#78d630" stroke-width="1.4" opacity="0.9" d="M736 442.4h.1M738.6 440.5h.1M741.2 441.2h.1M746.4 441.9h.1M749 441h.1M751.6 442.6h.1M754.2 442.6h.1M756.8 442.1h.1M762 442.3h.1M767.2 438.9h.1M767.2 441.5h.1M769.8 442.6h.1M772.4 442.3h.1M775 441.6h.1M777.6 439.2h.1M780.2 438.9h.1M780.2 441.5h.1M782.8 442.1h.1M785.4 441.9h.1M790.6 439.2h.1M793.2 441h.1M795.8 440.2h.1M798.4 439.9h.1M801 438.2h.1M801 440.8h.1M806.2 441.5h.1M808.8 439.9h.1M811.4 439.6h.1M814 440.6h.1M816.6 440.7h.1M819.2 438.2h.1M819.2 440.8h.1M821.8 439.7h.1M827 438.4h.1M827 441h.1M834.8 438.5h.1M834.8 441.1h.1M837.4 438.4h.1M837.4 441h.1M840 437.5h.1M840 440.1h.1M842.6 438.9h.1M842.6 441.5h.1M845.2 438.7h.1M845.2 441.3h.1M847.8 439.9h.1M850.4 439.3h.1M853 439.8h.1M860.8 438.5h.1M860.8 441.1h.1M863.4 438.5h.1M863.4 441.1h.1M868.6 438.3h.1M868.6 440.9h.1M871.2 437.3h.1M871.2 439.9h.1M876.4 439h.1M881.6 438.9h.1M881.6 441.5h.1"/><path stroke="#78d630" stroke-width="1.4" d="M1320.9 401.6L1325.7 399.7M1302 405.2L1305.4 404.1M1312.1 407.7L1318.7 405.5M1298.1 403L1303.9 400.1M1306.5 413.5L1313.7 412.5M749.8 554.2L757.1 556.2M733.2 543.1L724.7 548.1M746.4 532.5L754 536.4M729.9 533.3L741 533.3M743.3 547.6L748.6 549.1M748.2 558.5L753.7 562M729.6 540.1L721.9 545.9M733.4 552.9L728.1 557.8M870.6 511.7L881.8 520.1M863.8 499.8L851.2 510.7M872.7 508.7L879.2 511.2M858.4 497.6L868.2 498.9M881.8 517.1L893.5 516.4M862 520.4L879.9 520M861.3 507.8L867.9 508.8M852.8 504.4L866.5 504.9M851.9 501.2L865.7 502.7M869.2 507.3L876.3 506.3M879.9 516.6L892.4 516.4M941.3 622.5L948.7 621.5M934.1 619L945.9 617.9M942.1 612.6L951.9 612.4M911.1 621.3L921.5 622.6M1118.4 576.4L1101.7 582.3M1120.9 581.1L1130.5 581.8M1131 580.1L1136.7 582.9M1121.8 579.8L1134.6 578.1M1116.8 663L1128.5 669.2M1109.4 654.6L1102.1 660.1M1112.7 653.1L1122.7 652.9M1100.4 661.5L1111.7 661.6M1121.9 668.5L1134.7 673.1"/><path stroke="#78d630" stroke-width="1.5" opacity="0.75" d="M640 442.9h.1M645.1 437.9h.1M650.4 436.9h.1M655.5 436.1h.1M660.8 442h.1M666 438.6h.1M671.1 437.4h.1M676.4 435.5h.1M681.7 437.5h.1M686.9 439.4h.1"/><path stroke="#78d630" stroke-width="1.5" opacity="0.95" d="M1104 397.9L1146 397.9M1104 400.2L1146 400.2"/><path stroke="#78d630" stroke-width="1.5" d="M663.2 472.3L658.3 474.6M671 477.9L674.9 480.4M671.1 465.7L674.8 465.2M1378.9 515.6L1365.4 523.1M1365.4 519.4L1352.1 522.4M1365.6 519.4L1349.6 527.1M1381.9 512.2L1372.4 517.2M792.2 493.3L804.7 492.6M798.9 486.9L805.4 490.9M778.2 491.9L773.1 493.6M801.7 485.9L806.7 487.4M791.8 485.5L801.1 494.3M782.2 492.7L778.2 495.5M927.6 522L936.7 521.2M929.6 523.6L941.7 524.4M1245.1 501.6L1258.3 501M1227.5 510L1236.1 509.5M1204 517.9L1217.1 517.6M1249.4 489.3L1265.2 482.2M1223.8 490.1L1238.2 492.2M1207.3 493.4L1218.3 491.3M1223.2 500.7L1234.6 497.4M1230.8 496.2L1241.6 493.7M1221.7 513.5L1232.2 513.3M1227.2 496.4L1220 501.6M1224.7 498.8L1212.5 505.1M1240 497.5L1249.6 497.4M1209.1 507.8L1220.7 507.3M1228.8 492.4L1236.4 491.7M1232.3 506.8L1242.2 507.6M1226.5 507.8L1217.1 516M1240.9 505L1251.9 506.2"/><path stroke="#78d630" stroke-width="1.6" d="M794.4 565.5L789.3 568.6"/><path stroke="#78d630" stroke-width="2" d="M1106.9 635.8h.1M1088.3 641.8h.1M1098.1 656.9h.1M1108.1 668.8h.1M1103.4 668.6h.1M1096.6 627.5h.1M1094.2 674.1h.1M1089.7 668.9h.1"/><path stroke="#6cd336" stroke-width="1.1" opacity="0.55" d="M1078.3 297L1086.6 297"/><path stroke="#6cd336" stroke-width="1.1" opacity="0.6" d="M1104.6 314.2L1119.7 314.2M1107 318.5L1118.7 318.5M1107.9 322.8L1127.5 322.8"/><path stroke="#6cd336" stroke-width="1.2" opacity="0.6" d="M1080 303.3h.1M1080 306.3h.1M1088.7 291.3h.1M1088.7 294.3h.1M1088.7 297.3h.1M1102.8 298.4h.1M1102.8 301.4h.1"/><path stroke="#6cd336" stroke-width="1.3" opacity="0.95" d="M889 360L895.4 360M896 360L900.8 360M901.1 360L911.7 360M913.6 360L924.8 360M924.9 360L934.2 360M935 360L943.8 360M945.2 360L951 360M953.4 360L956.4 360M958.3 360L963 360"/><path stroke="#6cd336" stroke-width="1.3" d="M1439.3 419.7L1447.8 423.2M1443.5 428.8L1452.5 436.6M1440.3 429L1449.1 432.6M1436.2 436.6L1439.7 438.5M1428.6 426.6L1422.7 429.1"/><path stroke="#6cd336" stroke-width="1.4" opacity="0.45" d="M952 285h.1M952 287.8h.1M952 290.6h.1M952 293.4h.1M952 296.2h.1M952 299h.1M952 301.8h.1M952 304.6h.1M952 307.4h.1M952 310.2h.1M952 313h.1M952 315.8h.1M952 318.6h.1M952 321.4h.1M952 324.2h.1M952 327h.1M952 329.8h.1M952 332.6h.1"/><path stroke="#6cd336" stroke-width="1.4" opacity="0.9" d="M736 437.2h.1M736 439.8h.1M738.6 437.9h.1M741.2 436h.1M741.2 438.6h.1M746.4 436.7h.1M746.4 439.3h.1M749 438.4h.1M751.6 437.4h.1M751.6 440h.1M754.2 437.4h.1M754.2 440h.1M756.8 436.9h.1M756.8 439.5h.1M762 437.1h.1M762 439.7h.1M767.2 436.3h.1M769.8 437.4h.1M769.8 440h.1M772.4 437.1h.1M772.4 439.7h.1M775 436.4h.1M775 439h.1M777.6 436.6h.1M780.2 436.3h.1M782.8 436.9h.1M782.8 439.5h.1M785.4 436.7h.1M785.4 439.3h.1M790.6 436.6h.1M793.2 438.4h.1M795.8 437.6h.1M798.4 437.3h.1M801 435.6h.1M806.2 436.3h.1M806.2 438.9h.1M808.8 437.3h.1M811.4 437h.1M814 438h.1M816.6 438.1h.1M819.2 435.6h.1M821.8 437.1h.1M827 435.8h.1M834.8 435.9h.1M837.4 435.8h.1M840 434.9h.1M842.6 436.3h.1M845.2 436.1h.1M847.8 437.3h.1M850.4 436.7h.1M853 437.2h.1M860.8 435.9h.1M863.4 435.9h.1M868.6 435.7h.1M871.2 434.7h.1M876.4 436.4h.1M881.6 436.3h.1"/><path stroke="#6cd336" stroke-width="1.4" d="M1315.2 416.4L1320.8 414.3M1309.2 400.6L1313.5 401.8M1303.6 412.8L1308.8 411.2M1309.5 398.4L1315.1 395.6M1299.1 407.5L1305.7 404.8M1329.2 406.3L1332.3 404.5M1325.1 411.8L1332.8 408.9M1322.3 418.2L1331.1 419M737 543.4L728.1 546.7M733.7 524.6L725.9 530.3M752 539L761.6 543.3M749.3 549.4L757 548.5M732.2 525.2L722.4 528.3M734.1 540L725 546.7M755.6 543L763.9 547.5M758.8 546.9L769.3 552.1M729.9 542.7L720.1 550.2M731.9 545.3L727.3 548.7M734.2 536.9L724.4 541.3M733.4 538L724 543.7M742.9 529L748.1 533M874 507.6L887.2 513M876.5 499.5L888.7 500.2M858.3 496.6L872.8 494.8M863.2 498L857.3 500M862.9 486.3L868.9 485.8M871.1 488.1L880.4 492.1M929 602.2L935.9 601.9M917.9 608.3L908.3 613M932.6 602.7L942 603.3M917.5 596.9L931.6 595.5M934.6 599.1L947.9 598.8M929.9 604.5L945.7 606.2M1119.5 579.7L1107.5 583.1M1116 572.8L1127.9 572.3M1108.8 646.1L1101.9 648.5M1109.6 652.3L1122.5 651.3M1106.1 653.9L1099.7 658.2M1111 643L1120.6 644.2M1119.3 651.1L1125.1 651.6"/><path stroke="#6cd336" stroke-width="1.5" opacity="0.75" d="M640 439.9h.1M645.2 434.9h.1M650.4 433.9h.1M655.5 433.1h.1M660.8 439h.1M666 435.6h.1M671.2 434.4h.1M676.4 432.5h.1M681.6 434.5h.1M686.9 436.4h.1"/><path stroke="#6cd336" stroke-width="1.5" opacity="0.95" d="M1104 393.3L1146 393.3M1104 395.6L1146 395.6"/><path stroke="#6cd336" stroke-width="1.5" d="M675.7 469.8L679.4 470.9M670.5 467.2L674.5 467.1M672.6 459.6L675.9 461.2M1376.9 506.6L1362.6 514.9M1380.1 513.5L1371.3 522M1376.3 510.9L1368.2 516.5M799 491L804.7 494M781.5 482.4L771.8 485.2M779.3 484L784.6 483.9M785 487.1L796.9 487.8M782.1 484.9L771.5 490.7M789.6 481.1L801.3 481.2M793.9 489.8L805 489.3M782.4 492.3L787.2 492.3M786.7 489L799.4 490.3M1253.4 506.9L1267.3 509M1247.7 485.4L1265.6 480.3M1270.3 483.6L1278.8 479.3M1245.4 492.5L1260.3 490.1M1242.4 503.6L1254.4 498M1271 484.9L1290.2 487.7M1227.9 500.8L1247.4 502.6M1260 496.5L1274.3 498.5M1238.4 499.9L1244.1 497.7M1265.2 477.9L1278.3 477M1229.2 493.9L1240.6 495.3M1233.2 496.9L1244.1 502.8M1220.1 499.4L1226.4 498.8M1238.8 499.2L1243.1 502.2M1234.9 485.5L1245.8 484.3M1219 500.8L1210.9 506.7M1247 496.6L1256.2 505.6M1230.5 499L1223.7 504.5M1222.1 485.9L1234.6 484.7M1227.6 500.5L1220.4 505.8"/><path stroke="#6cd336" stroke-width="1.6" d="M794.7 559.1L803.9 559.4M799.2 562.4L803.7 566.5M796.4 555.6L790.1 557.3M792.9 562.2L788.6 564.1M795.5 558.8L790.2 563.6"/><path stroke="#6cd336" stroke-width="2" d="M1088.5 650.5h.1M1093.5 683.4h.1M1098 639.9h.1M1089.8 677.3h.1"/><path stroke="#60d03c" stroke-width="1.1" opacity="0.6" d="M1107.2 305.6L1124 305.6M1105.1 309.9L1116.7 309.9"/><path stroke="#60d03c" stroke-width="1.3" d="M1431.5 424.2L1424.3 427.7M1434 420.6L1442.3 420.5M1442.6 412.8L1448.3 414.5"/><path stroke="#60d03c" stroke-width="1.4" opacity="0.9" d="M736 434.6h.1M738.6 432.7h.1M738.6 435.3h.1M741.2 433.4h.1M746.4 434.1h.1M749 433.2h.1M749 435.8h.1M751.6 434.8h.1M754.2 434.8h.1M756.8 434.3h.1M762 434.5h.1M767.2 431.1h.1M767.2 433.7h.1M769.8 434.8h.1M772.4 434.5h.1M775 433.8h.1M777.6 431.4h.1M777.6 434h.1M780.2 431.1h.1M780.2 433.7h.1M782.8 434.3h.1M785.4 434.1h.1M790.6 431.4h.1M790.6 434h.1M793.2 433.2h.1M793.2 435.8h.1M795.8 432.4h.1M795.8 435h.1M798.4 432.1h.1M798.4 434.7h.1M801 430.4h.1M801 433h.1M806.2 433.7h.1M808.8 432.1h.1M808.8 434.7h.1M811.4 431.8h.1M811.4 434.4h.1M814 432.8h.1M814 435.4h.1M816.6 432.9h.1M816.6 435.5h.1M819.2 430.4h.1M819.2 433h.1M821.8 431.9h.1M821.8 434.5h.1M827 430.6h.1M827 433.2h.1M834.8 430.7h.1M834.8 433.3h.1M837.4 430.6h.1M837.4 433.2h.1M840 429.7h.1M840 432.3h.1M842.6 431.1h.1M842.6 433.7h.1M845.2 430.9h.1M845.2 433.5h.1M847.8 432.1h.1M847.8 434.7h.1M850.4 431.5h.1M850.4 434.1h.1M853 432h.1M853 434.6h.1M860.8 430.7h.1M860.8 433.3h.1M863.4 430.7h.1M863.4 433.3h.1M868.6 430.5h.1M868.6 433.1h.1M871.2 429.5h.1M871.2 432.1h.1M876.4 431.2h.1M876.4 433.8h.1M881.6 431.1h.1M881.6 433.7h.1"/><path stroke="#60d03c" stroke-width="1.4" opacity="0.95" d="M899 358.8L913.2 358.8M899 361.4L907.2 361.4M899 364L901.3 364"/><path stroke="#60d03c" stroke-width="1.4" d="M1314.8 421.3L1321.3 418M1306.7 418.5L1311 420.9M742.8 515.8L749.9 519.9M749.5 536.5L758 540.4M732.5 529.7L742.6 530.8M738.1 537.4L746.8 537.2M870.8 494.1L877.7 493.4M874.2 486.1L879.8 488.8M866.1 490.3L860.4 494.9M870.1 485.5L885.6 486.7M873.8 498.5L885.4 499.5M929.6 567.3L941.6 567.8M923.1 574L935.1 574.1M928.4 595.5L945.1 597.6M917.3 599.2L929.3 599.8M925 585.3L941.3 583.5M933.1 567.7L939.3 567.9M929 587.8L942.8 589.7M1127.9 573.4L1136.8 576.1M1106.4 576.2L1123.8 575.6M1110.3 567.7L1119.7 567.6M1133 569.9L1138.4 574.1M1110.4 568L1094.1 573M1114.6 566.9L1128.7 567.5M1107.7 573.5L1124.1 575.3M1111.2 648.4L1116.7 648M1120.6 641.5L1126.8 647.3M1108.4 649.3L1098.4 659M1101.7 640.8L1107.7 641M1107.9 635.9L1120 636.5M1101.4 641L1114.2 639.8M1110.9 646.5L1104.3 651.9"/><path stroke="#60d03c" stroke-width="1.5" opacity="0.75" d="M640 436.9h.1M645.2 431.9h.1M650.4 430.9h.1M655.6 430.1h.1M660.8 436h.1M666 432.6h.1M671.2 431.4h.1M676.4 429.5h.1M681.6 431.5h.1M686.8 433.4h.1"/><path stroke="#60d03c" stroke-width="1.5" opacity="0.95" d="M1104 391L1146 391"/><path stroke="#60d03c" stroke-width="1.5" d="M666.6 466.8L672.4 467.5M670.9 458.5L674 459.9M670.1 462.4L675.2 462.8M672.6 466.8L676.1 469.7M672.5 463.8L675.5 464.8M675.7 466.3L679.6 468.9M1388.6 507.7L1376.7 511.6M1395.2 506.8L1375.8 513.2M1389.8 506.7L1380.4 513.7M1396 504L1382.1 509.2M1398 501.1L1388.9 506.9M779.4 483L791.2 484M788.9 476.3L795.8 477.1M795.6 479.6L804.5 485.7M788.9 479.1L783.6 481.3M790.3 484.1L795.9 489.1M775.3 485L787.5 486.6M782.4 480.5L787 480.2M793.7 483.4L799.6 487.2M777.5 476L787.5 475.6M1234.8 506.9L1246.7 503.7M1250.2 488.1L1264.6 483.6M1225.2 484.2L1216.6 487.4M1234.4 483.7L1244.7 484.5M1229.3 485.8L1223.5 488.6M1235 487L1244.9 490.8M1223.9 484L1218.6 488.1"/><path stroke="#60d03c" stroke-width="1.6" d="M799.7 555.6L804.7 557.7"/><path stroke="#60d03c" stroke-width="2" d="M1103.9 672.3h.1M1113 639.4h.1M1105.3 615.9h.1M1113.4 652.8h.1"/><path stroke="#54cd43" stroke-width="1.1" opacity="0.5" d="M1085 277L1110 277"/><path stroke="#54cd43" stroke-width="1.1" opacity="0.6" d="M1106.6 297L1119.4 297M1106.2 301.3L1120.4 301.3"/><path stroke="#54cd43" stroke-width="1.2" opacity="0.6" d="M1020 323L1030 323"/><path stroke="#54cd43" stroke-width="1.3" d="M1432.9 412L1425.7 415.8M1433.5 409.1L1428.5 410.8M1443.7 411.8L1452.8 417.8"/><path stroke="#54cd43" stroke-width="1.4" opacity="0.6" d="M996 305h.1M996 307.8h.1M996 310.6h.1M996 313.4h.1M996 316.2h.1M996 319h.1M996 321.8h.1M996 324.6h.1M996 327.4h.1M996 330.2h.1M996 333h.1M996 335.8h.1M996 338.6h.1M996 341.4h.1M996 344.2h.1M996 347h.1M996 349.8h.1"/><path stroke="#54cd43" stroke-width="1.4" opacity="0.9" d="M736 432h.1M738.6 430.1h.1M741.2 430.8h.1M746.4 431.5h.1M749 430.6h.1M751.6 432.2h.1M754.2 432.2h.1M756.8 431.7h.1M762 431.9h.1M767.2 428.5h.1M769.8 432.2h.1M772.4 431.9h.1M775 431.2h.1M777.6 428.8h.1M780.2 428.5h.1M782.8 431.7h.1M785.4 431.5h.1M790.6 428.8h.1M793.2 430.6h.1M795.8 429.8h.1M798.4 429.5h.1M801 427.8h.1M806.2 431.1h.1M808.8 429.5h.1M811.4 429.2h.1M814 430.2h.1M816.6 430.3h.1M819.2 427.8h.1M821.8 429.3h.1M827 428h.1M834.8 428.1h.1M837.4 428h.1M840 427.1h.1M842.6 428.5h.1M845.2 428.3h.1M847.8 429.5h.1M850.4 428.9h.1M853 429.4h.1M860.8 428.1h.1M863.4 428.1h.1M868.6 427.9h.1M871.2 426.9h.1M876.4 428.6h.1M881.6 428.5h.1"/><path stroke="#54cd43" stroke-width="1.4" opacity="0.95" d="M899 345.8L919.9 345.8M899 348.4L918.8 348.4M899 351L917.8 351M899 353.6L916.8 353.6M899 356.2L915.7 356.2"/><path stroke="#54cd43" stroke-width="1.4" d="M741.5 515.2L752.8 515.6M738.8 530.3L728.6 536.8M738.5 524.9L733.3 529.5M749.5 526.9L755.8 531.5M743.9 512.5L748.9 512.5M858.2 488.3L875.9 486.1M924.2 585.8L938 586.4M927.4 573.5L913.3 579.5M931.7 576.5L926.5 580.6M927.5 582.9L917.2 589.4M933 562.7L939.9 563M929.9 583.4L936.4 583.8M919.1 585.4L929.2 585.9M937.9 576.9L947.3 581.6M934.4 569.6L943.8 569.2M1123 563.6L1137.5 565.6M1116.1 559.2L1132.1 559.5M1114.4 569.6L1124.6 568.4M1108 641.1L1115.2 640.1M1103.3 619.8L1109.5 620.1M1110.6 629.4L1117.5 630.3"/><path stroke="#54cd43" stroke-width="1.5" d="M1396.5 501.5L1388.2 506.7M1396.8 497L1386.6 501.3M1396.8 495.6L1381.5 499.4M1408.1 492.7L1386.9 498.1M1398.4 500.2L1380.3 505.4M1406.2 495.3L1394.6 502M1399 500.7L1381.4 503.9M1400.2 502.3L1388.8 509.4M784.6 481.2L795.9 481.4M792.8 475.9L797.7 478.5M793.8 472.6L801.8 477.5M1229.1 487.5L1241.5 487.2M1227.9 488.8L1234.8 489.2M1225.9 480.4L1219.2 484M1228.2 485.4L1220.6 491.2"/><path stroke="#54cd43" stroke-width="1.6" d="M796.1 554.4L790.9 556.3M800 552.9L806.6 558.1M795 554.5L788.2 559.6"/><path stroke="#54cd43" stroke-width="1.9" opacity="0.9" d="M851.3 769.5h.1M852.6 771.5h.1M854 773.5h.1M855.3 775.5h.1M856.6 777.5h.1M857.9 779.5h.1"/><path stroke="#54cd43" stroke-width="2" opacity="0.9" d="M1308.6 610.7h.1M1310.2 613h.1M1311.7 615.4h.1M1281.6 685h.1M1282.5 687.7h.1M1283.3 690.4h.1M1284.2 693h.1M1285.1 695.7h.1M1286 698.3h.1M1286.9 701h.1M1287.8 703.6h.1"/><path stroke="#54cd43" stroke-width="2" d="M1093.1 648.6h.1M1089.8 650h.1"/><path stroke="#48ca49" stroke-width="1.2" opacity="0.6" d="M1081 257h.1M1081 261h.1M1081 265h.1M1081 269h.1M1081 273h.1M1081 277h.1M1081 281h.1M1081 285h.1M1081 289h.1M1081 293h.1M1081 297h.1"/><path stroke="#48ca49" stroke-width="1.3" d="M1440 414.1L1446.1 416.9M1442 404.4L1447.2 408.9M1440.4 409L1448.3 411.8M1442 405.7L1447.2 410.5M1444 409.8L1450.6 413.4M1438.8 403.8L1433.2 407.4"/><path stroke="#48ca49" stroke-width="1.4" opacity="0.95" d="M913 332.8L925.1 332.8M910 335.4L924 335.4M907 338L923 338M904.1 340.6L922 340.6M901.1 343.2L920.9 343.2"/><path stroke="#48ca49" stroke-width="1.4" d="M740.7 514.7L730.3 522.2M747.3 519.1L756.9 525.6M743.4 509L751.5 509.1M930.1 575.8L942.4 577.5M933.5 575.2L946.1 575.1M933.2 572.7L947.4 577.8M1121.5 558.8L1133.4 558.6M1126.3 560.4L1131.8 563M1126.8 558.1L1133 558.8M1118.7 629.2L1126.1 635.3M1117.9 637.1L1126.2 643.6M1113.1 622.1L1118.6 621.9M1113.9 629.5L1120.4 629.9"/><path stroke="#48ca49" stroke-width="1.5" opacity="0.75" d="M640.7 410.5h.1M640.6 413.7h.1M640.4 416.9h.1M640.3 420.1h.1M645.8 411h.1M645.4 414.1h.1M645 417.3h.1M644.6 420.5h.1M650.3 411.7h.1M650.6 414.9h.1M650.8 418.1h.1M651.1 421.3h.1M655 406.6h.1M655 409.8h.1M655.1 413h.1M655.1 416.2h.1M655.1 419.4h.1M655.2 422.6h.1M661.8 411.6h.1M662 414.7h.1M662.2 417.9h.1M662.4 421.1h.1M666 408.7h.1M666.3 411.9h.1M666.6 415.1h.1M666.9 418.2h.1M667.2 421.4h.1M672 406.1h.1M671.7 409.3h.1M671.4 412.5h.1M671.1 415.7h.1M670.8 418.9h.1M670.5 422.1h.1M677.7 409.3h.1M677.5 412.5h.1M677.3 415.7h.1M677.1 418.9h.1M676.9 422.1h.1M682.8 406.9h.1M683.1 410.1h.1M683.4 413.2h.1M683.7 416.4h.1M684 419.6h.1M684.3 422.8h.1M687.8 410.8h.1M688.2 414h.1M688.7 417.2h.1M689.2 420.3h.1M692 406.9h.1M692 410.1h.1M692 413.3h.1M692 416.5h.1M692 419.7h.1M692 422.9h.1M702.7 410.9h.1M702.9 414.1h.1M703.1 417.3h.1M703.2 420.5h.1M708.7 406.9h.1M709 410.1h.1M709.2 413.3h.1M709.5 416.5h.1M709.8 419.7h.1M710.1 422.9h.1M719.7 408h.1M719.5 411.2h.1M719.2 414.4h.1M719 417.5h.1M718.8 420.7h.1M725.6 406.3h.1M725.3 409.5h.1M725.1 412.6h.1M724.8 415.8h.1M724.6 419h.1M724.3 422.2h.1M729.8 409.5h.1M729.7 412.7h.1M729.6 415.9h.1M729.5 419.1h.1M729.4 422.3h.1M735.1 409.5h.1M735 412.7h.1M734.8 415.9h.1M734.6 419.1h.1M734.5 422.3h.1M739.7 411.9h.1M739.2 415.1h.1M738.7 418.2h.1M738.2 421.4h.1M745.3 407.6h.1M745.1 410.8h.1M744.9 414h.1M744.7 417.2h.1M744.5 420.4h.1M751.3 409.4h.1M751.3 412.6h.1M751.4 415.8h.1M751.4 419h.1M751.4 422.2h.1M761 410.6h.1M761.4 413.8h.1M761.7 417h.1M762.1 420.2h.1M767.7 409.8h.1M767.6 413h.1M767.5 416.2h.1M767.3 419.4h.1M767.2 422.6h.1M783.5 410.6h.1M783.7 413.8h.1M784 417h.1M784.2 420.2h.1M788.4 408.1h.1M788.5 411.3h.1M788.5 414.5h.1M788.5 417.7h.1M788.6 420.9h.1M793.5 408h.1M793.4 411.2h.1M793.2 414.4h.1M793.1 417.6h.1M792.9 420.8h.1"/><path stroke="#48ca49" stroke-width="1.5" d="M669.8 455.8L666.1 458.8M1410.1 493.5L1399.6 498.9M1408 493.4L1386.6 498.9"/><path stroke="#48ca49" stroke-width="1.6" d="M799.1 544.5L806.6 549.3"/><path stroke="#48ca49" stroke-width="2" opacity="0.9" d="M1325.5 592.1h.1M1326.8 594.6h.1M1328 597.1h.1M1329.3 599.6h.1M1330.5 602.1h.1M1331.8 604.6h.1"/><path stroke="#3cc850" stroke-width="1.2" opacity="0.6" d="M1060 302L1075 302M1058 316L1070 316"/><path stroke="#3cc850" stroke-width="1.3" d="M1437.4 407.8L1428.9 413.5M1443.5 402.9L1450.8 409"/><path stroke="#3cc850" stroke-width="1.4" opacity="0.95" d="M922 325L922 325M919 327.6L926.3 327.6M916 330.2L926.1 330.2"/><path stroke="#3cc850" stroke-width="1.4" d="M936.3 563.7L942.7 564.3M1120.6 558.7L1136.6 559.3M1114.7 619.5L1120 619.1M1106.1 623.2L1098.3 627.8"/><path stroke="#3cc850" stroke-width="1.6" d="M799.2 546.1L803.9 547.4M799.3 546.7L805.4 552.1M1180.3 677.5L1191.3 677.2M1155.5 659.7L1169.7 657.3M1137.4 666.3L1149.1 666.2M1148.8 679.8L1162.6 681.4"/><path stroke="#3cc850" stroke-width="2" opacity="0.9" d="M1349.2 600.6h.1M1350.8 602.8h.1M1352.5 605h.1M1354.2 607.3h.1M1355.9 609.5h.1M1357.6 611.8h.1M1359.2 614h.1M1360.9 616.2h.1M1362.6 618.5h.1M1364.3 620.7h.1M1322.1 698.6h.1M1323.4 701.1h.1M1324.6 703.6h.1M1325.9 706.1h.1M1327.1 708.6h.1M1328.4 711.1h.1M1339 698.6h.1M1340.3 701.1h.1M1341.5 703.6h.1M1342.8 706.1h.1M1344 708.6h.1M1345.3 711.1h.1"/><path stroke="#3cc850" stroke-width="2.2" d="M1157.4 666.1h.1M1158.6 679.6h.1M1160.4 686.4h.1"/><path stroke="#39c566" stroke-width="1.6" d="M1142 682.6L1154.5 683.2M1164.7 670.9L1170.9 671.6M1157.1 657L1163 656.1M1167.3 676.5L1174.1 677.6M1164.3 683.2L1176.4 683.8"/><path stroke="#39c566" stroke-width="2" opacity="0.9" d="M1366.1 585.3h.1M1368.2 587.1h.1M1370.4 588.9h.1M1372.5 590.7h.1M1374.7 592.5h.1M1376.8 594.3h.1M1379 596.1h.1M1381.1 597.9h.1M1383.3 599.7h.1M1385.4 601.5h.1M1369.4 610.7h.1M1371.7 612.3h.1M1374 613.9h.1M1376.3 615.6h.1M1378.5 617.2h.1M1380.8 618.8h.1M1383.1 620.5h.1M1385.4 622.1h.1M1387.7 623.7h.1M1389.9 625.3h.1M1392.2 627h.1"/><path stroke="#39c566" stroke-width="2" d="M779.3 632.3h.1M785.1 636.4h.1"/><path stroke="#39c566" stroke-width="2.2" d="M1180.3 685h.1M1162.2 660h.1M1164.9 671.1h.1M1168 689.8h.1M1165.3 690.9h.1M1152.3 664.7h.1M1159.3 659.1h.1M1145.2 678.9h.1M1156.3 674.8h.1M1143.1 666h.1M1150.6 677.1h.1M1164.5 672.1h.1M1154.1 674.8h.1M1146.5 677.5h.1M1175.5 840.5h.1M1147.9 829.1h.1M1166.3 797h.1M1181.8 836h.1M1168.7 826.4h.1M1155.5 838.3h.1M1160.8 824.5h.1M1170.3 810.9h.1"/><path stroke="#37c37c" stroke-width="1.6" d="M1181.5 678.2L1193.1 679.5M1173.2 672.9L1189 671.9M1147.5 675.5L1159.6 674.8M1140.1 665.3L1146.4 664.6"/><path stroke="#37c37c" stroke-width="2" opacity="0.9" d="M1393.1 583.7h.1M1395.5 585.1h.1M1397.9 586.5h.1M1400.3 588h.1M1402.7 589.4h.1M1405.1 590.9h.1M1407.5 592.3h.1M1409.9 593.7h.1M1412.3 595.2h.1M1414.7 596.6h.1M1417.1 598.1h.1M1419.5 599.5h.1M1421.9 600.9h.1M1424.3 602.4h.1M1426.7 603.8h.1M1413.4 597.2h.1M1415.3 599.2h.1M1417.3 601.1h.1M1419.3 603.1h.1M1421.3 605.1h.1M1423.3 607.1h.1M1425.2 609.1h.1M1427.2 611h.1M1429.2 613h.1M1431.2 615h.1M1433.2 617h.1M1435.1 619h.1M1437.1 620.9h.1M1439.1 622.9h.1M1441.1 624.9h.1M1443.1 626.9h.1"/><path stroke="#37c37c" stroke-width="2" d="M1410.4 804.8h.1M1423.5 726.2h.1M1428.9 724.3h.1M1404.1 721.6h.1M1423.5 727.8h.1M1438.9 734.2h.1M1395.5 756.2h.1M1425.9 754.8h.1M1415.7 784.4h.1M707.4 596.6h.1M713 600.9h.1M720.9 598.4h.1M710.6 595h.1M717.9 604.7h.1M712.6 594.9h.1M780.7 628.3h.1M789.7 633.6h.1M781.8 632.5h.1M793.6 630.6h.1M788.3 629.6h.1M791.3 631.1h.1"/><path stroke="#37c37c" stroke-width="2.2" opacity="0.85" d="M1328.9 796.6h.1M1332.2 803.8h.1M1335.6 811.1h.1M1338.9 818.4h.1M1342.3 825.6h.1M1345.6 832.9h.1M1349 840.1h.1M1437 732.4h.1M1438.3 740.2h.1M1439.7 748.1h.1M1441 756h.1M1442.3 763.9h.1M1443.6 771.8h.1M1444.9 779.7h.1M1446.2 787.6h.1M1420.1 742.5h.1M1424.6 749.2h.1M1429 755.8h.1M1433.4 762.5h.1"/><path stroke="#37c37c" stroke-width="2.2" d="M1151.7 670.8h.1M1165.4 666.3h.1M1164.6 677.6h.1M1150.3 683.8h.1M1142.9 678.7h.1M1150.4 670.8h.1M1180.6 686h.1M1165.2 670.3h.1M1163.5 782.1h.1M1155.4 844.7h.1M1162.4 816.7h.1M1173.3 793.7h.1M1159.4 834.2h.1M1168.9 841.7h.1M1151.9 805h.1M1180.4 809.9h.1M1163.4 849.6h.1M1165.8 828.9h.1M1168.6 867.2h.1M1166.9 791.9h.1M1168.2 846.5h.1M1176.4 839.8h.1M1159.8 786h.1M1165.6 780.9h.1M1156.4 817.6h.1M1160.8 843.3h.1"/><path stroke="#34c093" stroke-width="1.2" opacity="0.6" d="M900 330L907 313"/><path stroke="#34c093" stroke-width="1.6" d="M1168.9 682.9L1178.8 683.5"/><path stroke="#34c093" stroke-width="1.9" opacity="0.9" d="M834.4 722.2h.1M835.9 724.1h.1M837.5 725.9h.1M839 727.7h.1M840.5 729.6h.1M842.1 731.4h.1M843.6 733.3h.1M845.1 735.1h.1M846.7 737h.1M848.2 738.8h.1M849.8 740.7h.1M770.2 620.8h.1M772.1 622.3h.1M774 623.7h.1M775.9 625.2h.1M777.9 626.6h.1M779.8 628h.1M781.7 629.5h.1M783.6 630.9h.1M785.5 632.4h.1M787.5 633.8h.1M789.4 635.2h.1"/><path stroke="#34c093" stroke-width="2" d="M1425.1 806.6h.1M1414.6 782.5h.1M1440.9 742h.1M1409 802.4h.1M1422.9 693.1h.1M1443.6 734.1h.1M1406.3 744.1h.1M715.5 600.1h.1M721.1 599.4h.1M713.3 603.5h.1M705.9 600.6h.1M704.2 598.9h.1M709.4 604.7h.1M788.3 632h.1M781.1 629.9h.1"/><path stroke="#34c093" stroke-width="2.2" d="M1157.4 673h.1M1149.4 673.5h.1M1180.2 679.6h.1M1156.7 669.7h.1M1168.7 669.9h.1M1157.9 660.4h.1M1163.6 659.9h.1M1146.2 682h.1M1141.3 670.9h.1M1158.8 672.1h.1M1139.9 681.3h.1M1143.4 673h.1M1179.6 671.2h.1M1178.7 837.1h.1M1174.1 838.2h.1M1165.6 807.6h.1M1154.5 796.2h.1M1147 813.4h.1M1148.6 808.3h.1M1158.6 785.4h.1M1163.3 790.2h.1M1158.3 824.4h.1M1179.2 826.2h.1M1167 817.8h.1M1176 821.5h.1M1177 793h.1M1157.3 830.5h.1M1171.4 809.3h.1M1175.1 805.5h.1M1151.8 832h.1M1172.7 788.6h.1M1170.6 806.6h.1M1170.5 809.9h.1M1162.5 861.3h.1M1151.2 836.6h.1M1177 785.3h.1"/><path stroke="#32beaa" stroke-width="2" d="M1406.2 741.2h.1M1440.7 732.2h.1M1440.2 722.9h.1M1403.4 722.9h.1M1408.1 797.6h.1M1413.4 799h.1M705.9 597h.1M719.3 603.4h.1"/><path stroke="#32beaa" stroke-width="2.2" d="M1154.5 682.9h.1M1172.7 683.6h.1M1173.9 674.6h.1M1176.7 677.2h.1M1155.5 675.7h.1M1182.4 682.9h.1M1181.9 671.2h.1M1174.6 825.2h.1M1166.5 815.1h.1M1161.1 780.4h.1M1176.5 863.6h.1M1167.9 870.7h.1M1162.7 813.8h.1M1157.9 814.4h.1M1180.8 820.9h.1M1184.9 825.3h.1M1163.4 866.9h.1M1160.7 797.5h.1"/><ellipse cx="1045.5" cy="504.5" rx="46" ry="18" fill="#32302e"/>
<g stroke="#e0d0d0" stroke-width="0.9" opacity="0.55"><path d="M997.5 468.7H1092.5M997.5 474.0H1092.5M997.5 480.0H1092.5M997.5 486.0H1092.5M997.5 492.0H1092.5M997.5 497.0H1092.5M997.5 502.7H1092.5M998.0 468.7V503M1007.3 468.7V503M1016.7 468.7V503M1026.0 468.7V503M1035.3 468.7V503M1045.3 468.7V503M1054.7 468.7V503M1064.0 468.7V503M1073.3 468.7V503M1082.7 468.7V503M1092.0 468.7V503"/></g>
<g stroke="#4cc83a" stroke-width="1.7" fill="none">
<path d="M1045.5 368V887"/>
<path d="M1046 368H1346L1392 395L1431 428.6L1263 497"/>
</g>
</svg></div>
<svg class="abs" style="left:624px;top:481px" width="6" height="10" viewBox="0 0 6 10"><path d="M5 0.5V9.5L0.5 5Z" fill="#444"/></svg>
<svg class="abs" style="left:1460px;top:481px" width="6" height="10" viewBox="0 0 6 10"><path d="M0.5 0.5V9.5L5 5Z" fill="#444"/></svg>
<div class="abs" style="left:0;top:846px;width:4px;height:40px;background:#6a6a6e;opacity:0.6"></div>
<div id="timebar" class="abs">
 <svg style="position:absolute;left:4px;top:3px" width="14" height="14" viewBox="0 0 14 14"><circle cx="7" cy="7" r="6" fill="#fff" stroke="#555" stroke-width="1.3"/><path d="M6.5 3.5V7.5H9.5" fill="none" stroke="#111" stroke-width="1.3"/></svg>
 <span style="position:absolute;left:24.5px;top:3.5px;font-size:12px;color:#222">Time</span>
</div>
<div class="btn" style="left:17.5px;top:921px;width:74px;height:22px"><span style="position:absolute;left:14px;top:3.5px;font-size:10px;color:#999;letter-spacing:-1px">&#9647;&#9647;</span><span style="position:absolute;left:27.5px;top:3.5px">Pause</span></div>
<span class="lbl" style="left:106.5px">Synchronization:</span>
<div class="btn" style="left:206.5px;top:921px;width:99px;height:21px;border-radius:2px"><span style="position:absolute;left:4px;top:3px">Off</span><svg style="position:absolute;left:85px;top:8px" width="8" height="5" viewBox="0 0 8 5"><path d="M0 0H8L4 4.5Z" fill="#444"/></svg></div>
<span class="lbl" style="left:321px">ROS Time:</span>
<div class="tb" style="left:385px;width:271.5px">22.38</div>
<span class="lbl" style="left:662.5px">ROS Elapsed:</span>
<div class="tb" style="left:744px;width:272px">16.60</div>
<span class="lbl" style="left:1022.5px">Wall Time:</span>
<div class="tb" style="left:1088px;width:270.5px">1730706602.88</div>
<span class="lbl" style="left:1365.5px">Wall Elapsed:</span>
<div class="tb" style="left:1446.5px;width:23.5px;border-right:none;border-radius:2px 0 0 2px">62.5</div>
<div class="btn" style="left:9.5px;top:954px;width:46px;height:20px"><span style="position:absolute;left:6.5px;top:2.5px">Reset</span></div>
<svg class="abs" style="left:181px;top:879px" width="11" height="19" viewBox="0 0 11 19"><path d="M5.5 1 L10 7 H7 V12 H10 L5.5 18 L1 12 H4 V7 H1 Z" fill="#fff"/><path d="M5.5 2.8 L8.2 6.3 H6.3 V12.7 H8.2 L5.5 16.2 L2.8 12.7 H4.7 V6.3 H2.8 Z" fill="#111"/></svg>
</body></html>
